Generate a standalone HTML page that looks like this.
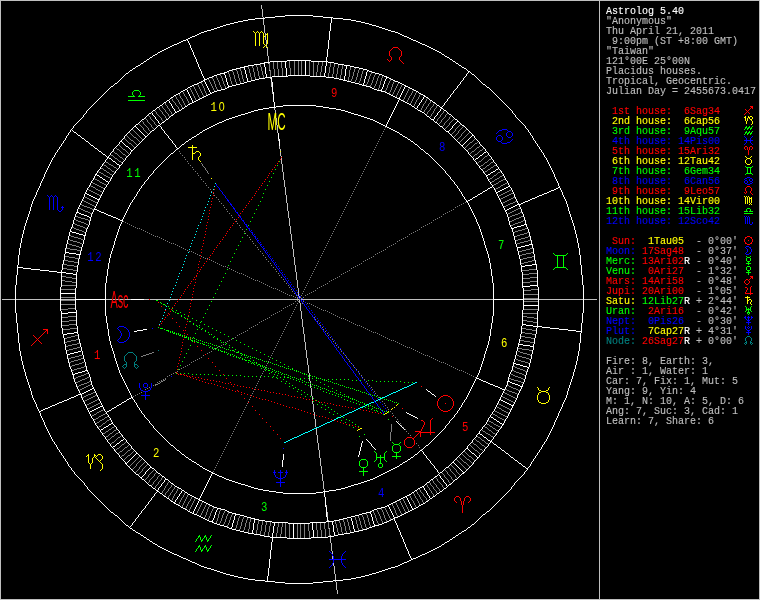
<!DOCTYPE html>
<html lang="en"><head><meta charset="utf-8"><title>Astrolog 5.40 chart</title>
<style>
html,body{margin:0;padding:0;background:#000;}
body{width:760px;height:600px;overflow:hidden;}
svg{display:block;shape-rendering:crispEdges;}
path{fill:none;stroke-width:1;}
text{font-family:"Liberation Mono",monospace;white-space:pre;}
.sb{font-size:10px;;stroke-width:0.12px;paint-order:stroke;}
.hn{font-family:"Liberation Mono",monospace;font-size:12.5px;text-anchor:middle;}
.z{font-family:"Liberation Sans",sans-serif;}
.ob{font-family:"Liberation Sans",sans-serif;font-size:23.7px;text-anchor:middle;}
.tx{will-change:transform;}
</style></head><body>
<svg width="760" height="600" viewBox="0 0 760 600" xml:space="preserve">
<rect width="760" height="600" fill="#000"/>
<g transform="translate(0,0.5)">
<path id="axes" stroke="#bfbfbf" d="M261 5h1M261 6h1M261 7h1M261 8h1M262 9h1M262 10h1M262 11h1M262 12h1M262 13h1M262 14h1M262 15h1M262 16h1M263 17h1M263 18h1M263 19h1M263 20h1M263 21h1M263 22h1M263 23h1M263 24h1M264 25h1M264 26h1M264 27h1M264 28h1M264 29h1M264 30h1M264 31h1M264 32h1M265 33h1M265 34h1M265 35h1M265 36h1M265 37h1M265 38h1M265 39h1M266 40h1M266 41h1M266 42h1M266 43h1M266 44h1M266 45h1M266 46h1M266 47h1M267 48h1M267 49h1M267 50h1M267 51h1M267 52h1M267 53h1M267 54h1M267 55h1M268 56h1M268 57h1M268 58h1M268 59h1M268 60h1M268 61h1M268 62h1M268 63h1M269 64h1M269 65h1M269 66h1M269 67h1M269 68h1M269 69h1M269 70h1M270 71h1M270 72h1M270 73h1M270 74h1M270 75h1M270 76h1M270 77h1M270 78h1M271 79h1M271 80h1M271 81h1M271 82h1M271 83h1M271 84h1M271 85h1M271 86h1M272 87h1M272 88h1M272 89h1M272 90h1M272 91h1M272 92h1M272 93h1M273 94h1M273 95h1M273 96h1M273 97h1M273 98h1M273 99h1M273 100h1M273 101h1M274 102h1M274 103h1M274 104h1M274 105h1M274 106h1M274 107h1M274 108h1M274 109h1M275 110h1M275 111h1M275 112h1M275 113h1M275 114h1M275 115h1M275 116h1M275 117h1M276 118h1M276 119h1M276 120h1M276 121h1M276 122h1M276 123h1M276 124h1M277 125h1M277 126h1M277 127h1M277 128h1M277 129h1M277 130h1M277 131h1M277 132h1M278 133h1M278 134h1M278 135h1M278 136h1M278 137h1M278 138h1M278 139h1M278 140h1M279 141h1M279 142h1M279 143h1M279 144h1M279 145h1M279 146h1M279 147h1M279 148h1M280 149h1M280 150h1M280 151h1M280 152h1M280 153h1M280 154h1M280 155h1M281 156h1M281 157h1M281 158h1M281 159h1M281 160h1M281 161h1M281 162h1M281 163h1M282 164h1M282 165h1M282 166h1M282 167h1M282 168h1M282 169h1M282 170h1M282 171h1M283 172h1M283 173h1M283 174h1M283 175h1M283 176h1M283 177h1M283 178h1M283 179h1M284 180h1M284 181h1M284 182h1M284 183h1M284 184h1M284 185h1M284 186h1M285 187h1M285 188h1M285 189h1M285 190h1M285 191h1M285 192h1M285 193h1M285 194h1M286 195h1M286 196h1M286 197h1M286 198h1M286 199h1M286 200h1M286 201h1M286 202h1M287 203h1M287 204h1M287 205h1M287 206h1M287 207h1M287 208h1M287 209h1M287 210h1M288 211h1M288 212h1M288 213h1M288 214h1M288 215h1M288 216h1M288 217h1M289 218h1M289 219h1M289 220h1M289 221h1M289 222h1M289 223h1M289 224h1M289 225h1M290 226h1M290 227h1M290 228h1M290 229h1M290 230h1M290 231h1M290 232h1M290 233h1M291 234h1M291 235h1M291 236h1M291 237h1M291 238h1M291 239h1M291 240h1M292 241h1M292 242h1M292 243h1M292 244h1M292 245h1M292 246h1M292 247h1M292 248h1M293 249h1M293 250h1M293 251h1M293 252h1M293 253h1M293 254h1M293 255h1M293 256h1M294 257h1M294 258h1M294 259h1M294 260h1M294 261h1M294 262h1M294 263h1M294 264h1M295 265h1M295 266h1M295 267h1M295 268h1M295 269h1M295 270h1M295 271h1M296 272h1M296 273h1M296 274h1M296 275h1M296 276h1M296 277h1M296 278h1M296 279h1M297 280h1M297 281h1M297 282h1M297 283h1M297 284h1M297 285h1M297 286h1M297 287h1M298 288h1M298 289h1M298 290h1M298 291h1M298 292h1M298 293h1M298 294h1M298 295h1M299 296h1M299 297h1M299 298h1M2 299h595M299 300h1M299 301h1M299 302h1M300 303h1M300 304h1M300 305h1M300 306h1M300 307h1M300 308h1M300 309h1M300 310h1M301 311h1M301 312h1M301 313h1M301 314h1M301 315h1M301 316h1M301 317h1M301 318h1M302 319h1M302 320h1M302 321h1M302 322h1M302 323h1M302 324h1M302 325h1M302 326h1M303 327h1M303 328h1M303 329h1M303 330h1M303 331h1M303 332h1M303 333h1M304 334h1M304 335h1M304 336h1M304 337h1M304 338h1M304 339h1M304 340h1M304 341h1M305 342h1M305 343h1M305 344h1M305 345h1M305 346h1M305 347h1M305 348h1M305 349h1M306 350h1M306 351h1M306 352h1M306 353h1M306 354h1M306 355h1M306 356h1M306 357h1M307 358h1M307 359h1M307 360h1M307 361h1M307 362h1M307 363h1M307 364h1M308 365h1M308 366h1M308 367h1M308 368h1M308 369h1M308 370h1M308 371h1M308 372h1M309 373h1M309 374h1M309 375h1M309 376h1M309 377h1M309 378h1M309 379h1M309 380h1M310 381h1M310 382h1M310 383h1M310 384h1M310 385h1M310 386h1M310 387h1M311 388h1M311 389h1M311 390h1M311 391h1M311 392h1M311 393h1M311 394h1M311 395h1M312 396h1M312 397h1M312 398h1M312 399h1M312 400h1M312 401h1M312 402h1M312 403h1M313 404h1M313 405h1M313 406h1M313 407h1M313 408h1M313 409h1M313 410h1M313 411h1M314 412h1M314 413h1M314 414h1M314 415h1M314 416h1M314 417h1M314 418h1M315 419h1M315 420h1M315 421h1M315 422h1M315 423h1M315 424h1M315 425h1M315 426h1M316 427h1M316 428h1M316 429h1M316 430h1M316 431h1M316 432h1M316 433h1M316 434h1M317 435h1M317 436h1M317 437h1M317 438h1M317 439h1M317 440h1M317 441h1M317 442h1M318 443h1M318 444h1M318 445h1M318 446h1M318 447h1M318 448h1M318 449h1M319 450h1M319 451h1M319 452h1M319 453h1M319 454h1M319 455h1M319 456h1M319 457h1M320 458h1M320 459h1M320 460h1M320 461h1M320 462h1M320 463h1M320 464h1M320 465h1M321 466h1M321 467h1M321 468h1M321 469h1M321 470h1M321 471h1M321 472h1M321 473h1M322 474h1M322 475h1M322 476h1M322 477h1M322 478h1M322 479h1M322 480h1M323 481h1M323 482h1M323 483h1M323 484h1M323 485h1M323 486h1M323 487h1M323 488h1M324 489h1M324 490h1M324 491h1M324 492h1M324 493h1M324 494h1M324 495h1M324 496h1M325 497h1M325 498h1M325 499h1M325 500h1M325 501h1M325 502h1M325 503h1M325 504h1M326 505h1M326 506h1M326 507h1M326 508h1M326 509h1M326 510h1M326 511h1M327 512h1M327 513h1M327 514h1M327 515h1M327 516h1M327 517h1M327 518h1M327 519h1M328 520h1M328 521h1M328 522h1M328 523h1M328 524h1M328 525h1M328 526h1M328 527h1M329 528h1M329 529h1M329 530h1M329 531h1M329 532h1M329 533h1M329 534h1M330 535h1M330 536h1M330 537h1M330 538h1M330 539h1M330 540h1M330 541h1M330 542h1M331 543h1M331 544h1M331 545h1M331 546h1M331 547h1M331 548h1M331 549h1M331 550h1M332 551h1M332 552h1M332 553h1M332 554h1M332 555h1M332 556h1M332 557h1M332 558h1M333 559h1M333 560h1M333 561h1M333 562h1M333 563h1M333 564h1M333 565h1M334 566h1M334 567h1M334 568h1M334 569h1M334 570h1M334 571h1M334 572h1M334 573h1M335 574h1M335 575h1M335 576h1M335 577h1M335 578h1M335 579h1M335 580h1M335 581h1M336 582h1M336 583h1M336 584h1M336 585h1M336 586h1M336 587h1M336 588h1M336 589h1M337 590h1M337 591h1M337 592h1M337 593h1"/>
<path id="ticks1" stroke="#7f7f7f" d="M281 61h1M289 61h1M294 61h1M298 61h1M301 61h1M309 61h1M313 61h1M318 61h1M273 62h1M277 62h1M281 62h1M289 62h1M294 62h1M298 62h1M301 62h1M309 62h1M313 62h1M318 62h1M322 62h1M269 63h1M273 63h1M277 63h1M281 63h1M289 63h1M294 63h1M298 63h1M301 63h1M309 63h1M313 63h1M318 63h1M322 63h1M330 63h1M334 63h1M256 64h1M260 64h1M269 64h1M273 64h1M277 64h1M281 64h1M289 64h1M294 64h1M298 64h1M301 64h1M309 64h1M313 64h1M318 64h1M322 64h1M330 64h1M334 64h1M338 64h1M252 65h1M256 65h1M260 65h1M269 65h1M273 65h1M277 65h1M281 65h1M289 65h1M294 65h1M298 65h1M301 65h1M309 65h1M313 65h1M317 65h1M322 65h1M330 65h1M334 65h1M338 65h1M342 65h1M248 66h1M252 66h1M256 66h1M260 66h1M269 66h1M273 66h1M277 66h1M281 66h1M289 66h1M294 66h1M298 66h1M301 66h1M309 66h1M313 66h1M317 66h1M321 66h1M330 66h1M334 66h1M338 66h1M342 66h1M350 66h1M248 67h1M252 67h1M257 67h1M261 67h1M269 67h1M273 67h1M277 67h1M281 67h1M289 67h1M294 67h1M298 67h1M301 67h1M309 67h1M313 67h1M317 67h1M321 67h1M329 67h1M333 67h1M338 67h1M342 67h1M350 67h1M355 67h1M240 68h1M248 68h1M253 68h1M257 68h1M261 68h1M269 68h1M273 68h1M277 68h1M282 68h1M290 68h1M294 68h1M298 68h1M301 68h1M309 68h1M313 68h1M317 68h1M321 68h1M329 68h1M333 68h1M337 68h1M342 68h1M350 68h1M355 68h1M359 68h1M236 69h1M240 69h1M249 69h1M253 69h1M257 69h1M261 69h1M269 69h1M274 69h1M278 69h1M282 69h1M290 69h1M294 69h1M298 69h1M301 69h1M309 69h1M313 69h1M317 69h1M321 69h1M329 69h1M333 69h1M337 69h1M341 69h1M350 69h1M354 69h1M359 69h1M363 69h1M232 70h1M236 70h1M240 70h1M249 70h1M253 70h1M257 70h1M261 70h1M270 70h1M274 70h1M278 70h1M282 70h1M290 70h1M294 70h1M298 70h1M301 70h1M309 70h1M313 70h1M317 70h1M321 70h1M329 70h1M333 70h1M337 70h1M341 70h1M349 70h1M354 70h1M358 70h1M363 70h1M232 71h1M237 71h1M241 71h1M249 71h1M253 71h1M258 71h1M262 71h1M270 71h1M274 71h1M278 71h1M282 71h1M290 71h1M294 71h1M298 71h1M301 71h1M309 71h1M313 71h1M317 71h1M321 71h1M329 71h1M333 71h1M337 71h1M341 71h1M349 71h1M354 71h1M358 71h1M362 71h1M228 72h1M233 72h1M237 72h1M241 72h1M249 72h1M254 72h1M258 72h1M262 72h1M270 72h1M274 72h1M278 72h1M282 72h1M290 72h1M294 72h1M298 72h1M301 72h1M309 72h1M313 72h1M316 72h1M320 72h1M329 72h1M333 72h1M337 72h1M341 72h1M349 72h1M353 72h1M358 72h1M362 72h1M371 72h1M228 73h1M233 73h1M237 73h1M241 73h1M250 73h1M254 73h1M258 73h1M262 73h1M270 73h1M274 73h1M278 73h1M282 73h1M290 73h1M294 73h1M298 73h1M301 73h1M309 73h1M313 73h1M316 73h1M320 73h1M328 73h1M333 73h1M337 73h1M341 73h1M349 73h1M353 73h1M357 73h1M362 73h1M371 73h1M375 73h1M220 74h1M229 74h1M233 74h1M238 74h1M241 74h1M250 74h1M254 74h1M258 74h1M262 74h1M270 74h1M274 74h1M278 74h1M282 74h1M290 74h1M294 74h1M298 74h1M301 74h1M309 74h1M313 74h1M316 74h1M320 74h1M328 74h1M332 74h1M336 74h1M341 74h1M349 74h1M353 74h1M357 74h1M361 74h1M370 74h1M375 74h1M379 74h1M220 75h1M229 75h1M234 75h1M238 75h1M242 75h1M250 75h1M254 75h1M258 75h1M263 75h1M270 75h1M274 75h1M278 75h1M282 75h1M313 75h1M316 75h1M320 75h1M328 75h1M332 75h1M336 75h1M340 75h1M349 75h1M353 75h1M357 75h1M361 75h1M370 75h1M374 75h1M379 75h1M216 76h1M221 76h1M229 76h1M234 76h1M238 76h1M242 76h1M250 76h1M254 76h1M259 76h1M263 76h1M270 76h1M274 76h1M328 76h1M332 76h1M336 76h1M340 76h1M349 76h1M352 76h1M357 76h1M361 76h1M369 76h1M374 76h1M378 76h1M382 76h1M212 77h1M216 77h1M221 77h1M230 77h1M234 77h1M238 77h1M242 77h1M251 77h1M255 77h1M259 77h1M263 77h1M332 77h1M336 77h1M340 77h1M348 77h1M352 77h1M356 77h1M361 77h1M369 77h1M373 77h1M378 77h1M382 77h1M212 78h1M217 78h1M222 78h1M230 78h1M234 78h1M239 78h1M242 78h1M251 78h1M255 78h1M259 78h1M340 78h1M348 78h1M352 78h1M356 78h1M360 78h1M369 78h1M373 78h1M377 78h1M381 78h1M208 79h1M213 79h1M217 79h1M222 79h1M230 79h1M235 79h1M239 79h1M243 79h1M251 79h1M255 79h1M348 79h1M351 79h1M356 79h1M360 79h1M368 79h1M373 79h1M377 79h1M381 79h1M390 79h1M209 80h1M213 80h1M218 80h1M222 80h1M230 80h1M235 80h1M239 80h1M243 80h1M348 80h1M351 80h1M355 80h1M360 80h1M368 80h1M372 80h1M377 80h1M381 80h1M390 80h1M394 80h1M209 81h1M214 81h1M218 81h1M223 81h1M231 81h1M235 81h1M240 81h1M243 81h1M355 81h1M359 81h1M368 81h1M372 81h1M376 81h1M380 81h1M389 81h1M394 81h1M201 82h1M210 82h1M214 82h1M219 82h1M223 82h1M231 82h1M236 82h1M240 82h1M359 82h1M367 82h1M372 82h1M376 82h1M380 82h1M389 82h1M393 82h1M398 82h1M201 83h1M210 83h1M214 83h1M219 83h1M223 83h1M231 83h1M236 83h1M367 83h1M371 83h1M376 83h1M380 83h1M388 83h1M393 83h1M398 83h1M197 84h1M202 84h1M211 84h1M215 84h1M219 84h1M224 84h1M232 84h1M366 84h1M371 84h1M375 84h1M380 84h1M388 84h1M392 84h1M397 84h1M402 84h1M198 85h1M202 85h1M211 85h1M215 85h1M220 85h1M224 85h1M232 85h1M366 85h1M370 85h1M375 85h1M379 85h1M387 85h1M392 85h1M397 85h1M401 85h1M193 86h1M198 86h1M203 86h1M212 86h1M215 86h1M220 86h1M225 86h1M370 86h1M374 86h1M379 86h1M387 86h1M392 86h1M396 86h1M401 86h1M189 87h1M194 87h1M199 87h1M203 87h1M212 87h1M216 87h1M221 87h1M225 87h1M374 87h1M379 87h1M387 87h1M391 87h1M396 87h1M400 87h1M190 88h1M194 88h1M199 88h1M204 88h1M213 88h1M216 88h1M221 88h1M378 88h1M386 88h1M391 88h1M395 88h1M400 88h1M409 88h1M190 89h1M195 89h1M200 89h1M204 89h1M213 89h1M217 89h1M378 89h1M386 89h1M391 89h1M395 89h1M399 89h1M408 89h1M191 90h1M195 90h1M200 90h1M204 90h1M214 90h1M217 90h1M385 90h1M390 90h1M394 90h1M399 90h1M408 90h1M413 90h1M182 91h1M191 91h1M196 91h1M201 91h1M205 91h1M214 91h1M385 91h1M390 91h1M394 91h1M398 91h1M407 91h1M412 91h1M183 92h1M192 92h1M196 92h1M201 92h1M205 92h1M389 92h1M393 92h1M398 92h1M407 92h1M412 92h1M416 92h1M178 93h1M183 93h1M192 93h1M197 93h1M202 93h1M206 93h1M389 93h1M393 93h1M397 93h1M406 93h1M411 93h1M415 93h1M179 94h1M184 94h1M193 94h1M197 94h1M202 94h1M206 94h1M392 94h1M397 94h1M406 94h1M411 94h1M415 94h1M420 94h1M179 95h1M184 95h1M193 95h1M198 95h1M203 95h1M392 95h1M396 95h1M405 95h1M410 95h1M414 95h1M419 95h1M175 96h1M180 96h1M185 96h1M194 96h1M198 96h1M203 96h1M396 96h1M405 96h1M409 96h1M414 96h1M419 96h1M176 97h1M180 97h1M186 97h1M194 97h1M199 97h1M404 97h1M409 97h1M413 97h1M418 97h1M171 98h1M176 98h1M181 98h1M186 98h1M195 98h1M199 98h1M404 98h1M408 98h1M413 98h1M418 98h1M427 98h1M172 99h1M177 99h1M182 99h1M187 99h1M195 99h1M403 99h1M408 99h1M412 99h1M417 99h1M426 99h1M172 100h1M178 100h1M182 100h1M187 100h1M196 100h1M403 100h1M407 100h1M412 100h1M416 100h1M426 100h1M431 100h1M173 101h1M178 101h1M183 101h1M188 101h1M407 101h1M411 101h1M416 101h1M425 101h1M430 101h1M164 102h1M174 102h1M179 102h1M183 102h1M188 102h1M406 102h1M411 102h1M415 102h1M425 102h1M430 102h1M165 103h1M175 103h1M179 103h1M184 103h1M189 103h1M410 103h1M415 103h1M424 103h1M429 103h1M434 103h1M165 104h1M175 104h1M180 104h1M184 104h1M410 104h1M414 104h1M423 104h1M428 104h1M433 104h1M161 105h1M166 105h1M176 105h1M181 105h1M185 105h1M414 105h1M423 105h1M428 105h1M433 105h1M437 105h1M162 106h1M167 106h1M177 106h1M181 106h1M413 106h1M422 106h1M427 106h1M432 106h1M436 106h1M158 107h1M162 107h1M167 107h1M178 107h1M182 107h1M422 107h1M426 107h1M431 107h1M436 107h1M159 108h1M163 108h1M168 108h1M178 108h1M421 108h1M426 108h1M430 108h1M435 108h1M159 109h1M164 109h1M169 109h1M179 109h1M421 109h1M425 109h1M430 109h1M434 109h1M154 110h1M160 110h1M165 110h1M169 110h1M420 110h1M424 110h1M429 110h1M434 110h1M444 110h1M155 111h1M161 111h1M165 111h1M170 111h1M424 111h1M428 111h1M433 111h1M443 111h1M156 112h1M162 112h1M166 112h1M171 112h1M423 112h1M427 112h1M433 112h1M443 112h1M156 113h1M162 113h1M167 113h1M171 113h1M427 113h1M432 113h1M442 113h1M447 113h1M157 114h1M163 114h1M168 114h1M172 114h1M426 114h1M431 114h1M441 114h1M446 114h1M148 115h1M158 115h1M164 115h1M168 115h1M431 115h1M440 115h1M445 115h1M451 115h1M149 116h1M159 116h1M165 116h1M169 116h1M430 116h1M440 116h1M445 116h1M450 116h1M150 117h1M160 117h1M165 117h1M439 117h1M444 117h1M449 117h1M145 118h1M150 118h1M161 118h1M166 118h1M438 118h1M443 118h1M449 118h1M454 118h1M146 119h1M151 119h1M161 119h1M437 119h1M442 119h1M448 119h1M453 119h1M141 120h1M147 120h1M152 120h1M162 120h1M437 120h1M441 120h1M447 120h1M452 120h1M142 121h1M147 121h1M153 121h1M163 121h1M436 121h1M441 121h1M446 121h1M451 121h1M143 122h1M148 122h1M154 122h1M440 122h1M445 122h1M450 122h1M138 123h1M143 123h1M149 123h1M154 123h1M439 123h1M444 123h1M449 123h1M139 124h1M144 124h1M150 124h1M155 124h1M444 124h1M449 124h1M460 124h1M140 125h1M145 125h1M151 125h1M156 125h1M443 125h1M448 125h1M459 125h1M141 126h1M146 126h1M151 126h1M442 126h1M447 126h1M458 126h1M463 126h1M142 127h1M147 127h1M152 127h1M446 127h1M457 127h1M462 127h1M143 128h1M148 128h1M153 128h1M445 128h1M456 128h1M461 128h1M132 129h1M143 129h1M148 129h1M455 129h1M460 129h1M466 129h1M133 130h1M144 130h1M149 130h1M455 130h1M459 130h1M465 130h1M134 131h1M145 131h1M150 131h1M454 131h1M458 131h1M464 131h1M129 132h1M135 132h1M146 132h1M453 132h1M458 132h1M463 132h1M469 132h1M130 133h1M136 133h1M147 133h1M452 133h1M457 133h1M462 133h1M468 133h1M131 134h1M137 134h1M451 134h1M456 134h1M461 134h1M467 134h1M126 135h1M132 135h1M138 135h1M455 135h1M461 135h1M466 135h1M127 136h1M133 136h1M139 136h1M454 136h1M460 136h1M465 136h1M128 137h1M134 137h2M140 137h1M459 137h1M464 137h1M124 138h1M129 138h1M136 138h1M141 138h1M458 138h1M463 138h1M475 138h1M125 139h1M130 139h1M137 139h1M142 139h1M457 139h1M462 139h1M474 139h1M126 140h1M131 140h2M138 140h1M461 140h1M473 140h1M127 141h1M133 141h1M139 141h1M460 141h1M472 141h1M478 141h1M128 142h1M134 142h1M459 142h1M470 142h2M477 142h1M129 143h2M135 143h1M469 143h1M475 143h2M118 144h1M131 144h1M136 144h1M468 144h1M474 144h1M119 145h1M132 145h1M467 145h1M473 145h1M480 145h1M120 146h1M133 146h1M466 146h1M472 146h1M479 146h1M115 147h1M121 147h1M134 147h1M465 147h1M471 147h1M477 147h2M116 148h1M122 148h1M469 148h2M476 148h1M483 148h1M117 149h2M123 149h2M468 149h1M475 149h1M482 149h1M119 150h1M125 150h1M467 150h1M474 150h1M480 150h2M113 151h1M120 151h1M126 151h1M472 151h2M479 151h1M114 152h1M121 152h1M127 152h1M471 152h1M478 152h1M115 153h2M122 153h1M128 153h1M470 153h1M477 153h1M110 154h1M117 154h1M123 154h2M475 154h2M488 154h1M111 155h2M118 155h1M125 155h1M474 155h1M487 155h1M113 156h1M119 156h1M126 156h1M473 156h1M485 156h2M114 157h1M120 157h2M484 157h1M115 158h2M122 158h1M483 158h1M491 158h1M117 159h1M123 159h1M482 159h1M489 159h2M118 160h1M481 160h1M488 160h1M105 161h1M119 161h2M479 161h2M487 161h1M493 161h1M106 162h2M121 162h1M478 162h1M485 162h2M491 162h2M108 163h1M477 163h1M484 163h1M490 163h1M103 164h1M109 164h2M483 164h1M489 164h1M496 164h1M104 165h2M111 165h2M481 165h2M487 165h2M494 165h2M106 166h1M113 166h1M480 166h1M486 166h1M493 166h1M100 167h1M107 167h1M114 167h2M485 167h1M491 167h2M101 168h2M108 168h2M116 168h1M483 168h2M490 168h1M103 169h1M110 169h1M482 169h1M488 169h2M104 170h2M111 170h1M487 170h1M98 171h1M106 171h1M112 171h2M485 171h2M500 171h1M99 172h2M107 172h2M114 172h1M484 172h1M498 172h2M101 173h2M109 173h1M497 173h1M103 174h1M110 174h2M496 174h1M104 175h2M112 175h1M494 175h2M502 175h1M106 176h2M493 176h1M500 176h2M108 177h2M492 177h1M499 177h1M94 178h1M110 178h1M490 178h2M497 178h2M505 178h1M95 179h2M489 179h1M495 179h2M503 179h2M97 180h2M494 180h1M501 180h2M99 181h1M492 181h2M499 181h2M92 182h1M100 182h2M491 182h1M498 182h1M507 182h1M93 183h2M102 183h2M496 183h2M505 183h2M95 184h2M104 184h2M494 184h2M503 184h2M90 185h1M97 185h2M106 185h1M493 185h1M501 185h2M91 186h2M99 186h2M500 186h1M93 187h2M101 187h2M498 187h2M95 188h1M103 188h2M496 188h2M88 189h1M96 189h2M495 189h1M511 189h1M89 190h2M98 190h2M509 190h2M91 191h2M100 191h2M507 191h2M93 192h2M102 192h1M505 192h2M95 193h2M503 193h2M511 193h2M97 194h2M501 194h2M509 194h2M99 195h2M499 195h2M507 195h2M84 196h1M498 196h1M505 196h2M85 197h2M503 197h2M513 197h2M87 198h2M501 198h2M511 198h2M89 199h2M500 199h1M509 199h2M82 200h2M91 200h2M507 200h2M84 201h2M93 201h2M505 201h2M515 201h2M86 202h2M95 202h2M503 202h2M513 202h2M88 203h2M502 203h1M510 203h3M80 204h2M90 204h2M508 204h2M82 205h2M92 205h2M506 205h2M84 206h3M94 206h2M504 206h2M87 207h3M79 208h2M90 208h2M518 208h2M81 209h2M92 209h2M516 209h2M83 210h2M514 210h2M85 211h3M512 211h2M88 212h2M510 212h2M520 212h2M90 213h2M508 213h2M518 213h2M507 214h1M515 214h3M512 215h3M76 216h2M510 216h2M521 216h2M78 217h3M508 217h2M519 217h2M81 218h4M516 218h3M74 219h2M85 219h3M514 219h2M76 220h2M88 220h2M512 220h2M523 220h2M78 221h3M510 221h2M521 221h2M81 222h3M518 222h3M73 223h2M84 223h2M515 223h3M75 224h2M86 224h2M513 224h2M77 225h3M511 225h2M80 226h3M72 227h2M83 227h2M74 228h2M85 228h2M525 228h2M76 229h3M522 229h3M79 230h3M518 230h4M82 231h2M515 231h3M84 232h2M513 232h2M527 232h2M524 233h3M520 234h4M69 235h2M517 235h3M71 236h3M515 236h2M528 236h2M74 237h4M525 237h3M78 238h3M521 238h4M68 239h2M81 239h2M518 239h3M70 240h3M516 240h2M528 240h3M73 241h4M524 241h4M77 242h3M520 242h4M67 243h2M80 243h2M517 243h3M69 244h3M72 245h4M76 246h3M79 247h2M66 248h4M530 248h3M70 249h7M526 249h4M77 250h4M522 250h4M519 251h3M531 252h3M526 253h5M522 254h4M519 255h3M65 256h4M532 256h3M69 257h6M527 257h5M75 258h4M523 258h4M520 259h3M64 260h4M532 260h3M68 261h6M528 261h4M74 262h4M524 262h4M521 263h3M63 264h4M67 265h7M74 266h4M63 268h4M67 269h6M529 269h7M73 270h4M522 270h7M529 273h8M522 274h7M62 276h4M66 277h6M530 277h7M72 278h4M523 278h7M61 280h4M65 281h7M530 281h8M72 282h4M523 282h7M61 285h15M61 289h14M531 289h7M524 290h7M524 294h14M61 297h14M524 298h14M61 300h14M524 301h14M61 304h14M68 308h7M61 309h7M524 309h14M523 313h15M68 316h8M523 316h4M61 317h7M527 317h7M534 318h4M69 320h7M523 320h4M62 321h7M527 321h6M533 322h4M69 324h8M62 325h7M70 328h7M522 328h4M63 329h7M526 329h6M532 330h4M521 332h4M525 333h7M532 334h4M75 335h3M71 336h4M521 336h4M67 337h4M525 337h6M64 338h3M531 338h4M76 339h3M71 340h5M520 340h4M67 341h4M524 341h6M64 342h3M530 342h4M77 343h3M72 344h5M68 345h4M65 346h3M77 347h3M73 348h4M518 348h4M69 349h4M522 349h7M66 350h3M529 350h4M518 351h2M520 352h3M523 353h4M527 354h3M79 355h3M517 355h2M530 355h2M75 356h4M519 356h3M71 357h4M522 357h4M68 358h3M81 358h2M526 358h3M78 359h3M516 359h2M529 359h2M74 360h4M518 360h3M71 361h3M521 361h4M69 362h2M82 362h2M525 362h3M79 363h3M528 363h2M75 364h4M72 365h3M70 366h2M84 366h2M513 366h2M81 367h3M515 367h2M77 368h4M517 368h3M74 369h3M520 369h3M72 370h2M512 370h2M523 370h2M514 371h2M525 371h2M516 372h3M86 373h2M519 373h3M84 374h2M511 374h2M522 374h2M81 375h3M513 375h2M524 375h2M78 376h3M515 376h3M76 377h2M87 377h2M518 377h3M74 378h2M85 378h2M509 378h2M521 378h2M82 379h3M511 379h3M523 379h2M80 380h2M514 380h4M78 381h2M89 381h2M518 381h3M76 382h2M87 382h2M521 382h2M84 383h3M81 384h3M90 384h2M79 385h2M88 385h2M507 385h2M77 386h2M86 386h2M509 386h2M84 387h2M511 387h2M82 388h2M513 388h3M80 389h2M505 389h2M516 389h2M79 390h1M507 390h2M518 390h2M509 391h3M93 392h2M503 392h2M512 392h3M91 393h2M505 393h2M515 393h2M88 394h3M507 394h2M517 394h2M86 395h2M95 395h2M509 395h2M84 396h2M93 396h2M502 396h1M511 396h2M82 397h2M91 397h2M503 397h2M513 397h2M89 398h2M505 398h2M515 398h2M87 399h2M97 399h2M507 399h2M85 400h2M95 400h2M509 400h2M84 401h1M93 401h2M511 401h2M91 402h2M100 402h1M513 402h2M89 403h2M98 403h2M498 403h1M87 404h2M96 404h2M499 404h2M86 405h1M94 405h2M501 405h2M92 406h2M496 406h1M503 406h2M90 407h2M497 407h2M505 407h2M88 408h2M499 408h2M507 408h2M87 409h1M103 409h1M501 409h1M509 409h2M101 410h2M494 410h1M502 410h2M99 411h2M495 411h2M504 411h2M97 412h2M497 412h2M506 412h2M96 413h1M105 413h1M492 413h1M499 413h2M508 413h1M94 414h2M103 414h2M493 414h2M501 414h2M92 415h2M101 415h2M495 415h2M503 415h2M91 416h1M99 416h2M107 416h1M497 416h1M505 416h2M98 417h1M105 417h2M498 417h2M96 418h2M104 418h1M500 418h2M94 419h2M102 419h2M109 419h1M502 419h2M93 420h1M100 420h2M107 420h2M488 420h1M504 420h1M99 421h1M106 421h1M489 421h2M97 422h2M105 422h1M491 422h2M96 423h1M103 423h2M486 423h1M493 423h1M102 424h1M487 424h2M494 424h2M101 425h1M489 425h1M496 425h2M99 426h2M114 426h1M484 426h1M490 426h2M498 426h2M98 427h1M112 427h2M485 427h2M492 427h1M500 427h1M111 428h1M487 428h1M493 428h2M109 429h2M116 429h1M488 429h1M495 429h1M108 430h1M114 430h2M482 430h1M489 430h2M496 430h2M106 431h2M113 431h1M483 431h2M491 431h1M498 431h1M105 432h1M112 432h1M118 432h1M485 432h1M492 432h1M103 433h2M110 433h2M116 433h2M486 433h2M493 433h2M102 434h1M109 434h1M115 434h1M488 434h2M495 434h1M108 435h1M114 435h1M121 435h1M490 435h1M106 436h2M112 436h2M120 436h1M477 436h1M491 436h2M105 437h1M111 437h1M118 437h2M478 437h2M493 437h1M110 438h1M117 438h1M480 438h1M108 439h2M116 439h1M475 439h1M481 439h1M107 440h1M115 440h1M476 440h1M482 440h2M114 441h1M477 441h2M484 441h1M112 442h2M125 442h1M472 442h1M479 442h1M485 442h1M111 443h1M124 443h1M473 443h1M480 443h1M486 443h2M110 444h1M122 444h2M474 444h2M481 444h1M488 444h1M121 445h1M128 445h1M470 445h1M476 445h1M482 445h2M120 446h1M127 446h1M471 446h1M477 446h1M484 446h1M119 447h1M125 447h2M472 447h1M478 447h1M485 447h1M117 448h2M124 448h1M131 448h1M473 448h1M479 448h1M116 449h1M123 449h1M130 449h1M474 449h1M480 449h2M115 450h1M122 450h1M128 450h2M475 450h2M482 450h1M120 451h2M127 451h1M133 451h1M464 451h1M477 451h1M483 451h1M119 452h1M126 452h1M132 452h1M465 452h1M478 452h1M118 453h1M125 453h1M131 453h1M466 453h1M479 453h1M124 454h1M130 454h1M462 454h1M467 454h1M480 454h1M122 455h2M128 455h2M463 455h1M468 455h1M121 456h1M127 456h1M139 456h1M464 456h1M469 456h2M120 457h1M126 457h1M138 457h1M459 457h1M465 457h1M471 457h1M125 458h1M137 458h1M460 458h1M466 458h1M472 458h1M124 459h1M136 459h1M141 459h1M456 459h1M461 459h1M467 459h2M473 459h1M123 460h1M135 460h1M140 460h1M457 460h1M462 460h1M469 460h1M474 460h1M134 461h1M139 461h1M458 461h1M463 461h1M470 461h1M133 462h1M138 462h1M144 462h1M459 462h1M464 462h2M471 462h1M132 463h1M137 463h1M143 463h1M460 463h1M466 463h1M472 463h1M131 464h1M136 464h1M142 464h1M147 464h1M461 464h1M467 464h1M130 465h1M136 465h1M141 465h1M146 465h1M451 465h1M462 465h1M468 465h1M129 466h1M135 466h1M140 466h1M145 466h1M452 466h1M463 466h1M469 466h1M134 467h1M139 467h1M144 467h1M448 467h1M453 467h1M464 467h1M133 468h1M139 468h1M143 468h1M449 468h1M454 468h1M465 468h1M132 469h1M138 469h1M142 469h1M450 469h1M455 469h1M466 469h1M137 470h1M142 470h1M153 470h1M445 470h1M450 470h1M456 470h1M136 471h1M141 471h1M152 471h1M446 471h1M451 471h1M456 471h1M135 472h1M140 472h1M151 472h1M156 472h1M447 472h1M452 472h1M457 472h1M139 473h1M150 473h1M155 473h1M442 473h1M447 473h1M453 473h1M458 473h1M138 474h1M149 474h1M154 474h1M443 474h1M448 474h1M454 474h1M459 474h1M148 475h1M154 475h1M159 475h1M444 475h1M449 475h1M455 475h1M460 475h1M148 476h1M153 476h1M158 476h1M444 476h1M450 476h1M455 476h1M147 477h1M152 477h1M157 477h1M162 477h1M435 477h1M445 477h1M451 477h1M456 477h1M146 478h1M151 478h1M157 478h1M161 478h1M436 478h1M446 478h1M451 478h1M457 478h1M145 479h1M150 479h1M156 479h1M161 479h1M437 479h1M447 479h1M452 479h1M144 480h1M149 480h1M155 480h1M160 480h1M432 480h1M437 480h1M448 480h1M453 480h1M149 481h1M154 481h1M159 481h1M433 481h1M438 481h1M448 481h1M148 482h1M153 482h1M158 482h1M168 482h1M429 482h1M433 482h1M439 482h1M449 482h1M147 483h1M153 483h1M158 483h1M167 483h1M430 483h1M434 483h1M440 483h1M450 483h1M152 484h1M157 484h1M167 484h1M172 484h1M426 484h1M430 484h1M435 484h1M441 484h1M151 485h1M156 485h1M166 485h1M171 485h1M427 485h1M431 485h1M436 485h1M442 485h1M155 486h1M165 486h1M171 486h1M175 486h1M427 486h1M432 486h1M436 486h1M442 486h1M155 487h1M165 487h1M170 487h1M174 487h1M428 487h1M433 487h1M437 487h1M443 487h1M154 488h1M164 488h1M169 488h1M174 488h1M178 488h1M429 488h1M433 488h1M438 488h1M444 488h1M164 489h1M168 489h1M173 489h1M177 489h1M419 489h1M429 489h1M434 489h1M439 489h1M163 490h1M168 490h1M172 490h1M177 490h1M420 490h1M430 490h1M435 490h1M439 490h1M162 491h1M167 491h1M172 491h1M176 491h1M416 491h1M420 491h1M431 491h1M436 491h1M440 491h1M162 492h1M166 492h1M171 492h1M176 492h1M185 492h1M417 492h1M421 492h1M431 492h1M436 492h1M161 493h1M165 493h1M170 493h1M175 493h1M184 493h1M413 493h1M417 493h1M422 493h1M432 493h1M437 493h1M165 494h1M170 494h1M174 494h1M184 494h1M188 494h1M414 494h1M418 494h1M423 494h1M433 494h1M164 495h1M169 495h1M174 495h1M183 495h1M187 495h1M409 495h1M414 495h1M419 495h1M423 495h1M433 495h1M168 496h1M173 496h1M183 496h1M187 496h1M192 496h1M410 496h1M415 496h1M419 496h1M424 496h1M434 496h1M168 497h1M173 497h1M182 497h1M186 497h1M191 497h1M410 497h1M415 497h1M420 497h1M425 497h1M167 498h1M172 498h1M181 498h1M186 498h1M191 498h1M195 498h1M402 498h1M411 498h1M416 498h1M420 498h1M426 498h1M172 499h1M181 499h1M185 499h1M190 499h1M194 499h1M403 499h1M411 499h1M417 499h1M421 499h1M426 499h1M171 500h1M180 500h1M185 500h1M190 500h1M194 500h1M399 500h1M403 500h1M412 500h1M417 500h1M422 500h1M427 500h1M180 501h1M184 501h1M189 501h1M193 501h1M400 501h1M404 501h1M413 501h1M418 501h1M422 501h1M179 502h1M184 502h1M188 502h1M193 502h1M202 502h1M395 502h1M400 502h1M404 502h1M413 502h1M418 502h1M423 502h1M179 503h1M183 503h1M188 503h1M192 503h1M201 503h1M206 503h1M396 503h1M401 503h1M405 503h1M414 503h1M419 503h1M178 504h1M183 504h1M187 504h1M192 504h1M201 504h1M206 504h1M392 504h1M396 504h1M401 504h1M405 504h1M414 504h1M419 504h1M182 505h1M187 505h1M191 505h1M200 505h1M205 505h1M209 505h1M392 505h1M397 505h1M402 505h1M406 505h1M415 505h1M420 505h1M182 506h1M186 506h1M191 506h1M200 506h1M205 506h1M209 506h1M393 506h1M397 506h1M402 506h1M406 506h1M415 506h1M186 507h1M190 507h1M199 507h1M204 507h1M208 507h1M213 507h1M384 507h1M393 507h1M398 507h1M403 507h1M407 507h1M416 507h1M185 508h1M190 508h1M199 508h1M204 508h1M208 508h1M213 508h1M381 508h1M385 508h1M394 508h1M398 508h1M403 508h1M407 508h1M189 509h1M198 509h1M203 509h1M207 509h1M212 509h1M220 509h1M381 509h1M385 509h1M394 509h1M399 509h1M404 509h1M408 509h1M189 510h1M198 510h1M203 510h1M207 510h1M212 510h1M220 510h1M377 510h1M382 510h1M386 510h1M395 510h1M399 510h1M404 510h1M408 510h1M197 511h1M202 511h1M207 511h1M211 511h1M219 511h1M224 511h1M373 511h1M377 511h1M382 511h1M386 511h1M395 511h1M400 511h1M405 511h1M409 511h1M197 512h1M202 512h1M206 512h1M211 512h1M219 512h1M224 512h1M228 512h1M373 512h1M378 512h1M383 512h1M387 512h1M395 512h1M400 512h1M405 512h1M196 513h1M201 513h1M206 513h1M210 513h1M219 513h1M223 513h1M228 513h1M232 513h1M366 513h1M374 513h1M378 513h1M383 513h1M387 513h1M396 513h1M401 513h1M196 514h1M201 514h1M206 514h1M210 514h1M218 514h1M223 514h1M227 514h1M232 514h1M366 514h1M374 514h1M379 514h1M383 514h1M388 514h1M396 514h1M401 514h1M200 515h1M205 515h1M210 515h1M218 515h1M222 515h1M227 515h1M231 515h1M362 515h1M367 515h1M375 515h1M379 515h1M384 515h1M388 515h1M397 515h1M200 516h1M205 516h1M209 516h1M218 516h1M222 516h1M226 516h1M231 516h1M239 516h1M358 516h1M362 516h1M367 516h1M375 516h1M380 516h1M384 516h1M389 516h1M397 516h1M204 517h1M209 517h1M218 517h1M222 517h1M226 517h1M230 517h1M239 517h1M243 517h1M355 517h1M358 517h1M363 517h1M367 517h1M375 517h1M380 517h1M384 517h1M389 517h1M204 518h1M208 518h1M217 518h1M221 518h1M226 518h1M230 518h1M238 518h1M243 518h1M247 518h1M250 518h1M355 518h1M359 518h1M363 518h1M368 518h1M376 518h1M380 518h1M385 518h1M390 518h1M208 519h1M217 519h1M221 519h1M225 519h1M230 519h1M238 519h1M242 519h1M247 519h1M250 519h1M343 519h1M347 519h1M355 519h1M359 519h1M363 519h1M368 519h1M376 519h1M381 519h1M385 519h1M390 519h1M217 520h1M221 520h1M225 520h1M229 520h1M238 520h1M242 520h1M246 520h1M250 520h1M258 520h1M339 520h1M343 520h1M347 520h1M356 520h1M359 520h1M364 520h1M368 520h1M376 520h1M381 520h1M386 520h1M216 521h1M220 521h1M225 521h1M229 521h1M237 521h1M242 521h1M246 521h1M250 521h1M258 521h1M262 521h1M266 521h1M335 521h1M339 521h1M343 521h1M347 521h1M356 521h1M360 521h1M364 521h1M368 521h1M377 521h1M382 521h1M386 521h1M216 522h1M220 522h1M224 522h1M229 522h1M237 522h1M241 522h1M246 522h1M249 522h1M258 522h1M262 522h1M266 522h1M270 522h1M324 522h1M328 522h1M335 522h1M339 522h1M344 522h1M348 522h1M356 522h1M360 522h1M364 522h1M369 522h1M377 522h1M382 522h1M219 523h1M224 523h1M228 523h1M237 523h1M241 523h1M245 523h1M249 523h1M258 523h1M262 523h1M266 523h1M270 523h1M278 523h1M282 523h1M285 523h1M316 523h1M320 523h1M324 523h1M328 523h1M335 523h1M340 523h1M344 523h1M348 523h1M356 523h1M360 523h1M364 523h1M369 523h1M378 523h1M219 524h1M223 524h1M228 524h1M237 524h1M241 524h1M245 524h1M249 524h1M257 524h1M262 524h1M266 524h1M270 524h1M278 524h1M282 524h1M285 524h1M289 524h1M297 524h1M300 524h1M304 524h1M308 524h1M316 524h1M320 524h1M324 524h1M328 524h1M336 524h1M340 524h1M344 524h1M348 524h1M357 524h1M360 524h1M365 524h1M369 524h1M378 524h1M223 525h1M227 525h1M236 525h1M241 525h1M245 525h1M249 525h1M257 525h1M261 525h1M265 525h1M270 525h1M278 525h1M282 525h1M285 525h1M289 525h1M297 525h1M300 525h1M304 525h1M308 525h1M316 525h1M320 525h1M324 525h1M328 525h1M336 525h1M340 525h1M344 525h1M348 525h1M357 525h1M361 525h1M365 525h1M370 525h1M227 526h1M236 526h1M240 526h1M245 526h1M249 526h1M257 526h1M261 526h1M265 526h1M269 526h1M278 526h1M282 526h1M285 526h1M289 526h1M297 526h1M300 526h1M304 526h1M308 526h1M316 526h1M320 526h1M324 526h1M328 526h1M336 526h1M340 526h1M345 526h1M349 526h1M357 526h1M361 526h1M365 526h1M370 526h1M236 527h1M240 527h1M244 527h1M249 527h1M257 527h1M261 527h1M265 527h1M269 527h1M277 527h1M281 527h1M285 527h1M289 527h1M297 527h1M300 527h1M304 527h1M308 527h1M316 527h1M320 527h1M324 527h1M328 527h1M336 527h1M341 527h1M345 527h1M349 527h1M357 527h1M361 527h1M366 527h1M235 528h1M240 528h1M244 528h1M249 528h1M257 528h1M261 528h1M265 528h1M269 528h1M277 528h1M281 528h1M285 528h1M289 528h1M297 528h1M300 528h1M304 528h1M308 528h1M316 528h1M320 528h1M324 528h1M328 528h1M337 528h1M341 528h1M345 528h1M349 528h1M358 528h1M362 528h1M366 528h1M235 529h1M239 529h1M244 529h1M248 529h1M257 529h1M261 529h1M265 529h1M269 529h1M277 529h1M281 529h1M285 529h1M289 529h1M297 529h1M300 529h1M304 529h1M308 529h1M316 529h1M320 529h1M325 529h1M329 529h1M337 529h1M341 529h1M345 529h1M349 529h1M358 529h1M362 529h1M239 530h1M243 530h1M248 530h1M256 530h1M261 530h1M265 530h1M269 530h1M277 530h1M281 530h1M285 530h1M289 530h1M297 530h1M300 530h1M304 530h1M308 530h1M317 530h1M321 530h1M325 530h1M329 530h1M337 530h1M341 530h1M345 530h1M350 530h1M358 530h1M243 531h1M248 531h1M256 531h1M260 531h1M265 531h1M269 531h1M277 531h1M281 531h1M285 531h1M289 531h1M297 531h1M300 531h1M304 531h1M309 531h1M317 531h1M321 531h1M325 531h1M329 531h1M337 531h1M341 531h1M346 531h1M350 531h1M248 532h1M256 532h1M260 532h1M264 532h1M268 532h1M277 532h1M281 532h1M285 532h1M289 532h1M297 532h1M300 532h1M304 532h1M309 532h1M317 532h1M321 532h1M325 532h1M329 532h1M338 532h1M342 532h1M346 532h1M350 532h1M256 533h1M260 533h1M264 533h1M268 533h1M276 533h1M281 533h1M285 533h1M289 533h1M297 533h1M300 533h1M304 533h1M309 533h1M317 533h1M321 533h1M325 533h1M329 533h1M338 533h1M342 533h1M346 533h1M260 534h1M264 534h1M268 534h1M276 534h1M280 534h1M285 534h1M289 534h1M297 534h1M300 534h1M304 534h1M309 534h1M317 534h1M321 534h1M325 534h1M329 534h1M338 534h1M342 534h1M264 535h1M268 535h1M276 535h1M280 535h1M285 535h1M289 535h1M297 535h1M300 535h1M304 535h1M309 535h1M317 535h1M321 535h1M325 535h1M329 535h1M276 536h1M280 536h1M285 536h1M289 536h1M297 536h1M300 536h1M304 536h1M309 536h1M317 536h1M321 536h1M325 536h1M280 537h1M285 537h1M289 537h1M297 537h1M300 537h1M304 537h1M309 537h1M317 537h1"/>
<path id="ticks5" stroke="#ffffff" d="M285 61h1M305 61h1M285 62h1M305 62h1M326 62h1M264 63h1M285 63h1M305 63h1M326 63h1M264 64h1M285 64h1M305 64h1M326 64h1M264 65h1M285 65h1M305 65h1M326 65h1M346 65h1M264 66h1M285 66h1M305 66h1M325 66h1M346 66h1M244 67h1M265 67h1M285 67h1M305 67h1M325 67h1M346 67h1M244 68h1M265 68h1M286 68h1M305 68h1M325 68h1M346 68h1M244 69h1M265 69h1M286 69h1M305 69h1M325 69h1M345 69h1M245 70h1M265 70h1M286 70h1M305 70h1M325 70h1M345 70h1M367 70h1M245 71h1M265 71h1M286 71h1M305 71h1M325 71h1M345 71h1M367 71h1M245 72h1M265 72h1M286 72h1M305 72h1M325 72h1M345 72h1M366 72h1M224 73h1M245 73h1M265 73h1M286 73h1M305 73h1M324 73h1M345 73h1M366 73h1M224 74h1M246 74h1M266 74h1M286 74h1M305 74h1M324 74h1M345 74h1M366 74h1M225 75h1M246 75h1M266 75h1M286 75h1M324 75h1M345 75h1M366 75h1M225 76h1M246 76h1M266 76h1M324 76h1M344 76h1M365 76h1M225 77h1M246 77h1M266 77h1M344 77h1M365 77h1M386 77h1M226 78h1M247 78h1M344 78h1M365 78h1M386 78h1M226 79h1M247 79h1M344 79h1M364 79h1M385 79h1M204 80h1M226 80h1M247 80h1M364 80h1M385 80h1M204 81h1M226 81h1M364 81h1M384 81h1M205 82h1M227 82h1M364 82h1M384 82h1M205 83h1M227 83h1M363 83h1M384 83h1M206 84h1M227 84h1M363 84h1M383 84h1M206 85h1M228 85h1M383 85h1M207 86h1M228 86h1M383 86h1M405 86h1M207 87h1M382 87h1M404 87h1M208 88h1M382 88h1M404 88h1M186 89h1M208 89h1M381 89h1M403 89h1M187 90h1M209 90h1M381 90h1M403 90h1M187 91h1M209 91h1M402 91h1M188 92h1M210 92h1M402 92h1M188 93h1M210 93h1M401 93h1M189 94h1M401 94h1M189 95h1M400 95h1M190 96h1M400 96h1M424 96h1M190 97h1M399 97h1M423 97h1M191 98h1M399 98h1M423 98h1M191 99h1M422 99h1M168 100h1M192 100h1M421 100h1M169 101h1M192 101h1M421 101h1M169 102h1M420 102h1M170 103h1M419 103h1M171 104h1M419 104h1M171 105h1M418 105h1M172 106h1M417 106h1M172 107h1M417 107h1M173 108h1M416 108h1M441 108h1M174 109h1M440 109h1M174 110h1M440 110h1M175 111h1M439 111h1M151 112h1M438 112h1M152 113h1M437 113h1M152 114h1M437 114h1M153 115h1M436 115h1M154 116h1M435 116h1M155 117h1M434 117h1M155 118h1M434 118h1M156 119h1M433 119h1M157 120h1M158 121h1M457 121h1M158 122h1M456 122h1M159 123h1M455 123h1M454 124h1M453 125h1M135 126h1M452 126h1M136 127h1M452 127h1M137 128h1M451 128h1M138 129h1M450 129h1M139 130h1M449 130h1M140 131h1M448 131h1M141 132h1M142 133h1M143 134h1M144 135h1M472 135h1M145 136h1M471 136h1M470 137h1M469 138h1M468 139h1M467 140h1M121 141h1M466 141h1M122 142h1M465 142h1M123 143h1M464 143h1M124 144h1M463 144h1M125 145h1M462 145h1M126 146h2M128 147h1M129 148h1M130 149h1M131 150h1M486 151h1M484 152h2M483 153h1M482 154h1M480 155h2M479 156h1M108 157h1M478 157h1M109 158h2M476 158h2M111 159h1M475 159h1M112 160h1M113 161h2M115 162h1M116 163h1M117 164h2M119 165h1M498 168h1M496 169h2M495 170h1M493 171h2M491 172h2M490 173h1M96 174h1M488 174h2M97 175h2M487 175h1M99 176h1M100 177h2M102 178h1M103 179h2M105 180h1M106 181h2M108 182h1M508 186h2M506 187h2M504 188h2M502 189h2M500 190h2M498 191h2M497 192h1M86 193h1M87 194h2M89 195h2M91 196h2M93 197h2M95 198h2M97 199h2M517 204h2M515 205h2M513 206h2M511 207h2M509 208h2M507 209h2M505 210h2M77 212h2M79 213h2M81 214h3M84 215h3M87 216h2M89 217h2M524 224h2M521 225h3M517 226h4M514 227h3M512 228h2M70 231h2M72 232h4M76 233h3M79 234h4M83 235h2M529 244h3M525 245h4M521 246h4M518 247h3M65 252h4M69 253h7M76 254h4M532 264h4M525 265h7M521 266h4M62 272h4M66 273h7M73 274h4M530 285h8M523 286h7M61 293h14M524 305h14M68 312h8M61 313h7M522 324h4M526 325h7M533 326h4M74 332h4M67 333h7M63 334h4M519 344h4M523 345h7M530 346h4M78 351h3M74 352h4M70 353h4M67 354h3M514 363h2M516 364h4M520 365h3M523 366h4M527 367h2M85 370h2M82 371h3M78 372h4M75 373h3M73 374h2M508 381h2M510 382h2M512 383h3M515 384h3M518 385h2M520 386h2M92 388h2M90 389h2M88 390h2M86 391h2M84 392h2M82 393h2M80 394h2M500 399h1M501 400h2M503 401h2M505 402h2M507 403h2M509 404h2M511 405h2M100 406h2M98 407h2M96 408h2M94 409h2M92 410h2M90 411h2M89 412h1M490 416h1M491 417h2M493 418h1M494 419h2M496 420h1M497 421h2M499 422h1M111 423h1M500 423h2M109 424h2M502 424h1M108 425h1M106 426h2M104 427h2M103 428h1M101 429h2M100 430h1M479 433h1M480 434h2M482 435h1M483 436h1M484 437h2M486 438h1M123 439h1M487 439h1M121 440h2M488 440h2M120 441h1M490 441h1M119 442h1M117 443h2M116 444h1M115 445h1M113 446h2M112 447h1M467 448h1M468 449h1M469 450h1M470 451h1M471 452h1M136 453h1M472 453h2M135 454h1M474 454h1M134 455h1M475 455h1M133 456h1M476 456h1M132 457h1M477 457h1M131 458h1M130 459h1M129 460h1M128 461h1M127 462h1M453 462h1M126 463h1M454 463h1M455 464h1M456 465h1M457 466h1M150 467h1M458 467h1M149 468h1M459 468h1M148 469h1M460 469h1M147 470h1M461 470h1M146 471h1M462 471h1M145 472h1M463 472h1M145 473h1M144 474h1M143 475h1M439 475h1M142 476h1M440 476h1M141 477h1M440 477h1M441 478h1M165 479h1M442 479h1M164 480h1M443 480h1M164 481h1M443 481h1M163 482h1M444 482h1M162 483h1M445 483h1M161 484h1M446 484h1M161 485h1M446 485h1M160 486h1M447 486h1M159 487h1M423 487h1M158 488h1M424 488h1M158 489h1M424 489h1M157 490h1M182 490h1M425 490h1M181 491h1M426 491h1M181 492h1M426 492h1M180 493h1M427 493h1M179 494h1M427 494h1M179 495h1M428 495h1M178 496h1M429 496h1M177 497h1M406 497h1M429 497h1M177 498h1M407 498h1M430 498h1M176 499h1M407 499h1M175 500h1M199 500h1M408 500h1M175 501h1M198 501h1M408 501h1M174 502h1M198 502h1M409 502h1M197 503h1M409 503h1M197 504h1M410 504h1M196 505h1M388 505h1M410 505h1M196 506h1M388 506h1M411 506h1M195 507h1M389 507h1M411 507h1M195 508h1M217 508h1M389 508h1M412 508h1M194 509h1M217 509h1M390 509h1M412 509h1M194 510h1M216 510h1M390 510h1M193 511h1M216 511h1M391 511h1M193 512h1M215 512h1M370 512h1M391 512h1M215 513h1M370 513h1M392 513h1M215 514h1M235 514h1M371 514h1M392 514h1M214 515h1M235 515h1M371 515h1M393 515h1M214 516h1M234 516h1M371 516h1M393 516h1M214 517h1M234 517h1M372 517h1M394 517h1M213 518h1M234 518h1M351 518h1M372 518h1M394 518h1M213 519h1M234 519h1M254 519h1M351 519h1M372 519h1M212 520h1M233 520h1M254 520h1M351 520h1M372 520h1M212 521h1M233 521h1M254 521h1M332 521h1M352 521h1M373 521h1M233 522h1M254 522h1M274 522h1M332 522h1M352 522h1M373 522h1M232 523h1M253 523h1M274 523h1M312 523h1M332 523h1M352 523h1M373 523h1M232 524h1M253 524h1M274 524h1M293 524h1M312 524h1M332 524h1M352 524h1M374 524h1M232 525h1M253 525h1M274 525h1M293 525h1M312 525h1M333 525h1M353 525h1M374 525h1M232 526h1M253 526h1M273 526h1M293 526h1M312 526h1M333 526h1M353 526h1M231 527h1M253 527h1M273 527h1M293 527h1M312 527h1M333 527h1M353 527h1M231 528h1M253 528h1M273 528h1M293 528h1M312 528h1M333 528h1M353 528h1M253 529h1M273 529h1M293 529h1M312 529h1M333 529h1M354 529h1M252 530h1M273 530h1M293 530h1M313 530h1M333 530h1M354 530h1M252 531h1M273 531h1M293 531h1M313 531h1M333 531h1M354 531h1M252 532h1M273 532h1M293 532h1M313 532h1M334 532h1M252 533h1M272 533h1M293 533h1M313 533h1M334 533h1M272 534h1M293 534h1M313 534h1M334 534h1M272 535h1M293 535h1M313 535h1M334 535h1M272 536h1M293 536h1M313 536h1M293 537h1M313 537h1"/>
<path id="circles" stroke="#ffffff" d="M285 15h28M275 16h10M313 16h10M265 17h10M323 17h10M255 18h10M333 18h10M248 19h7M343 19h8M243 20h5M351 20h5M238 21h5M356 21h5M234 22h4M361 22h4M230 23h4M365 23h4M226 24h4M369 24h3M223 25h3M372 25h4M220 26h3M376 26h3M217 27h3M379 27h3M214 28h3M382 28h3M211 29h3M385 29h3M207 30h4M388 30h3M204 31h3M391 31h4M201 32h3M395 32h3M199 33h2M398 33h2M197 34h2M400 34h2M195 35h2M402 35h2M192 36h3M404 36h3M190 37h2M407 37h2M188 38h2M409 38h2M186 39h2M411 39h2M183 40h3M413 40h3M181 41h2M416 41h2M179 42h2M418 42h2M177 43h2M420 43h2M174 44h3M422 44h3M172 45h2M425 45h2M170 46h2M427 46h2M168 47h2M429 47h2M166 48h2M431 48h2M164 49h2M433 49h2M162 50h2M435 50h2M160 51h2M437 51h2M158 52h2M439 52h2M157 53h1M441 53h1M155 54h2M442 54h2M153 55h2M444 55h1M152 56h1M445 56h2M150 57h2M447 57h2M149 58h1M449 58h1M147 59h2M450 59h2M146 60h1M287 60h24M452 60h1M144 61h2M270 61h17M311 61h17M453 61h2M143 62h1M264 62h6M328 62h6M455 62h1M141 63h2M260 63h4M334 63h4M456 63h2M140 64h1M254 64h6M338 64h6M458 64h1M138 65h2M248 65h6M344 65h6M459 65h2M136 66h2M244 66h4M350 66h4M461 66h1M135 67h1M240 67h4M354 67h5M462 67h2M133 68h2M236 68h4M359 68h4M464 68h2M132 69h1M232 69h4M363 69h4M466 69h1M130 70h2M229 70h3M367 70h2M467 70h1M129 71h1M227 71h2M369 71h3M468 71h2M128 72h1M224 72h3M372 72h3M470 72h1M126 73h2M220 73h4M375 73h4M471 73h1M125 74h1M217 74h3M379 74h3M472 74h2M124 75h1M214 75h3M288 75h22M382 75h2M474 75h1M123 76h1M212 76h2M272 76h16M310 76h16M384 76h3M475 76h1M122 77h1M209 77h3M265 77h7M326 77h8M387 77h2M476 77h1M121 78h1M207 78h2M259 78h6M334 78h5M389 78h2M477 78h1M120 79h1M205 79h2M255 79h4M339 79h4M391 79h2M478 79h1M119 80h1M203 80h2M251 80h4M343 80h4M393 80h2M479 80h1M118 81h1M201 81h2M247 81h4M347 81h4M395 81h3M480 81h1M117 82h1M199 82h2M244 82h3M351 82h4M398 82h2M481 82h1M115 83h2M197 83h2M240 83h4M355 83h4M400 83h2M482 83h1M114 84h1M194 84h3M236 84h4M359 84h3M402 84h2M483 84h2M113 85h1M192 85h2M232 85h4M362 85h4M404 85h2M485 85h1M111 86h2M190 86h2M229 86h3M366 86h4M406 86h2M486 86h1M110 87h1M188 87h2M227 87h2M370 87h2M408 87h2M487 87h2M109 88h1M187 88h1M225 88h2M372 88h2M410 88h2M489 88h1M108 89h1M185 89h2M221 89h4M374 89h3M412 89h2M490 89h1M107 90h1M183 90h2M217 90h4M377 90h4M414 90h2M491 90h1M106 91h1M181 91h2M214 91h3M381 91h4M416 91h2M492 91h1M105 92h1M180 92h1M212 92h2M385 92h2M418 92h1M493 92h1M104 93h1M178 93h2M210 93h2M387 93h2M419 93h2M494 93h1M103 94h1M176 94h2M208 94h2M389 94h2M421 94h2M495 94h1M102 95h1M174 95h2M206 95h2M391 95h2M423 95h2M496 95h1M101 96h1M173 96h1M204 96h2M393 96h2M425 96h1M497 96h1M100 97h1M171 97h2M202 97h2M395 97h2M426 97h2M498 97h1M99 98h1M170 98h1M200 98h2M397 98h2M428 98h1M499 98h1M98 99h1M169 99h1M198 99h2M399 99h2M429 99h1M500 99h1M97 100h1M167 100h2M196 100h2M401 100h2M430 100h2M501 100h1M96 101h1M166 101h1M194 101h2M403 101h2M432 101h1M502 101h1M95 102h1M164 102h2M192 102h2M405 102h2M433 102h2M503 102h1M94 103h1M163 103h1M190 103h2M407 103h2M435 103h1M504 103h1M93 104h1M162 104h1M188 104h2M409 104h2M436 104h1M505 104h1M92 105h1M160 105h2M187 105h1M283 105h33M411 105h1M437 105h2M506 105h1M91 106h1M159 106h1M185 106h2M276 106h7M316 106h7M412 106h2M439 106h1M507 106h1M90 107h1M157 107h2M184 107h1M269 107h7M323 107h6M414 107h1M440 107h2M508 107h1M89 108h1M156 108h1M182 108h2M263 108h6M329 108h7M415 108h2M442 108h1M509 108h1M88 109h1M155 109h1M181 109h1M258 109h5M336 109h5M417 109h1M443 109h1M510 109h1M87 110h1M153 110h2M179 110h2M254 110h4M341 110h4M418 110h2M444 110h2M511 110h1M86 111h1M152 111h1M177 111h2M251 111h3M345 111h3M420 111h2M446 111h1M512 111h1M86 112h1M151 112h1M175 112h2M248 112h3M348 112h3M422 112h2M447 112h1M512 112h1M85 113h1M149 113h2M174 113h1M245 113h3M351 113h3M424 113h1M448 113h1M513 113h1M84 114h1M148 114h1M173 114h1M241 114h4M354 114h4M425 114h1M449 114h2M514 114h1M83 115h1M147 115h1M171 115h2M238 115h3M358 115h3M426 115h1M451 115h1M515 115h1M83 116h1M146 116h1M170 116h1M235 116h3M361 116h3M427 116h2M452 116h1M515 116h1M82 117h1M145 117h1M169 117h1M232 117h3M364 117h3M429 117h1M453 117h1M516 117h1M81 118h1M144 118h1M168 118h1M229 118h3M367 118h3M430 118h1M454 118h1M517 118h1M80 119h1M142 119h2M166 119h2M226 119h3M370 119h3M431 119h2M455 119h2M518 119h1M79 120h1M141 120h1M165 120h1M224 120h2M373 120h2M433 120h1M457 120h1M519 120h1M78 121h1M140 121h1M164 121h1M222 121h2M375 121h2M434 121h1M458 121h1M520 121h1M77 122h1M139 122h1M162 122h2M219 122h3M377 122h2M435 122h2M459 122h1M521 122h1M76 123h1M138 123h1M161 123h1M217 123h2M379 123h2M437 123h1M460 123h1M522 123h1M75 124h1M136 124h2M160 124h1M215 124h2M381 124h2M438 124h1M461 124h1M523 124h1M74 125h1M135 125h1M158 125h2M213 125h2M383 125h2M439 125h1M462 125h2M524 125h1M73 126h1M134 126h1M157 126h1M211 126h2M385 126h2M440 126h2M464 126h1M525 126h1M73 127h1M133 127h1M156 127h1M209 127h2M387 127h2M442 127h1M465 127h1M525 127h1M72 128h1M132 128h1M155 128h1M207 128h2M389 128h2M443 128h1M466 128h1M526 128h1M71 129h1M131 129h1M154 129h1M205 129h2M391 129h2M444 129h1M467 129h1M527 129h1M70 130h1M130 130h1M152 130h2M203 130h2M393 130h2M445 130h1M468 130h1M528 130h1M70 131h1M129 131h1M151 131h1M202 131h1M395 131h2M446 131h2M469 131h1M528 131h1M69 132h1M128 132h1M150 132h1M200 132h2M397 132h2M448 132h1M470 132h1M529 132h1M68 133h1M127 133h1M149 133h1M199 133h1M399 133h1M449 133h1M471 133h1M530 133h1M68 134h1M126 134h1M148 134h1M197 134h2M400 134h2M450 134h1M472 134h1M530 134h1M67 135h1M125 135h1M147 135h1M196 135h1M402 135h1M451 135h1M473 135h1M531 135h1M66 136h1M124 136h1M146 136h1M194 136h2M403 136h2M452 136h1M474 136h1M532 136h1M66 137h1M124 137h1M145 137h1M192 137h2M405 137h2M453 137h1M474 137h1M532 137h1M65 138h1M123 138h1M144 138h1M191 138h1M407 138h1M454 138h1M475 138h1M533 138h1M65 139h1M122 139h1M143 139h1M189 139h2M408 139h2M455 139h1M476 139h1M533 139h1M64 140h1M121 140h1M142 140h1M188 140h1M410 140h1M456 140h1M477 140h1M534 140h1M63 141h1M120 141h1M141 141h1M186 141h2M411 141h2M457 141h1M478 141h1M535 141h1M63 142h1M119 142h1M140 142h1M185 142h1M413 142h1M458 142h1M479 142h1M535 142h1M62 143h1M119 143h1M139 143h1M184 143h1M414 143h1M459 143h1M479 143h1M536 143h1M61 144h1M118 144h1M138 144h1M182 144h2M415 144h2M460 144h1M480 144h1M537 144h1M61 145h1M117 145h1M137 145h1M181 145h1M417 145h1M461 145h1M481 145h1M537 145h1M60 146h1M116 146h1M136 146h1M180 146h1M418 146h1M462 146h1M482 146h1M538 146h1M59 147h1M115 147h1M135 147h1M179 147h1M419 147h1M463 147h1M483 147h1M539 147h1M59 148h1M114 148h1M134 148h1M177 148h2M420 148h1M464 148h1M484 148h1M539 148h1M58 149h1M113 149h1M133 149h1M176 149h1M421 149h2M465 149h1M485 149h1M540 149h1M57 150h1M113 150h1M132 150h1M175 150h1M423 150h1M466 150h1M485 150h1M541 150h1M57 151h1M112 151h1M131 151h1M174 151h1M424 151h1M467 151h1M486 151h1M541 151h1M56 152h1M111 152h1M130 152h1M173 152h1M425 152h1M468 152h1M487 152h1M542 152h1M55 153h1M110 153h1M130 153h1M171 153h2M426 153h2M468 153h1M488 153h1M543 153h1M55 154h1M110 154h1M129 154h1M170 154h1M428 154h1M469 154h1M488 154h1M543 154h1M54 155h1M109 155h1M128 155h1M169 155h1M429 155h1M470 155h1M489 155h1M544 155h1M54 156h1M108 156h1M127 156h1M168 156h1M430 156h1M471 156h1M490 156h1M544 156h1M53 157h1M107 157h1M126 157h1M167 157h1M431 157h1M472 157h1M491 157h1M545 157h1M52 158h1M107 158h1M125 158h1M166 158h1M432 158h1M473 158h1M491 158h1M546 158h1M52 159h1M106 159h1M125 159h1M165 159h1M433 159h1M473 159h1M492 159h1M546 159h1M51 160h1M105 160h1M124 160h1M164 160h1M434 160h1M474 160h1M493 160h1M547 160h1M51 161h1M105 161h1M123 161h1M163 161h1M435 161h1M475 161h1M493 161h1M547 161h1M50 162h1M104 162h1M122 162h1M162 162h1M436 162h1M476 162h1M494 162h1M548 162h1M50 163h1M103 163h1M122 163h1M161 163h1M437 163h1M476 163h1M495 163h1M548 163h1M49 164h1M102 164h1M121 164h1M160 164h1M438 164h1M477 164h1M496 164h1M549 164h1M49 165h1M102 165h1M120 165h1M159 165h1M439 165h1M478 165h1M496 165h1M549 165h1M48 166h1M101 166h1M119 166h1M158 166h1M440 166h1M479 166h1M497 166h1M550 166h1M48 167h1M100 167h1M119 167h1M157 167h1M441 167h1M479 167h1M498 167h1M550 167h1M47 168h1M100 168h1M118 168h1M156 168h1M442 168h1M480 168h1M498 168h1M551 168h1M47 169h1M99 169h1M117 169h1M155 169h1M443 169h1M481 169h1M499 169h1M551 169h1M46 170h1M98 170h1M116 170h1M154 170h1M444 170h1M482 170h1M500 170h1M552 170h1M46 171h1M97 171h1M115 171h1M153 171h1M445 171h1M483 171h1M501 171h1M552 171h1M45 172h1M97 172h1M115 172h1M153 172h1M445 172h1M483 172h1M501 172h1M553 172h1M45 173h1M96 173h1M114 173h1M152 173h1M446 173h1M484 173h1M502 173h1M553 173h1M44 174h1M95 174h1M113 174h1M151 174h1M447 174h1M485 174h1M503 174h1M554 174h1M44 175h1M95 175h1M112 175h1M150 175h1M448 175h1M486 175h1M503 175h1M554 175h1M44 176h1M94 176h1M112 176h1M149 176h1M449 176h1M486 176h1M504 176h1M554 176h1M43 177h1M94 177h1M111 177h1M148 177h1M450 177h1M487 177h1M504 177h1M555 177h1M43 178h1M93 178h1M111 178h1M148 178h1M450 178h1M487 178h1M505 178h1M555 178h1M42 179h1M93 179h1M110 179h1M147 179h1M451 179h1M488 179h1M505 179h1M556 179h1M42 180h1M92 180h1M110 180h1M146 180h1M452 180h1M488 180h1M506 180h1M556 180h1M41 181h1M91 181h1M109 181h1M145 181h1M453 181h1M489 181h1M507 181h1M557 181h1M41 182h1M91 182h1M108 182h1M144 182h1M454 182h1M490 182h1M507 182h1M557 182h1M40 183h1M90 183h1M108 183h1M144 183h1M454 183h1M490 183h1M508 183h1M558 183h1M40 184h1M90 184h1M107 184h1M143 184h1M455 184h1M491 184h1M508 184h1M558 184h1M40 185h1M89 185h1M106 185h1M142 185h1M456 185h1M492 185h1M509 185h1M558 185h1M39 186h1M89 186h1M106 186h1M141 186h1M457 186h1M492 186h1M509 186h1M559 186h1M39 187h1M88 187h1M105 187h1M141 187h1M457 187h1M493 187h1M510 187h1M559 187h1M38 188h1M87 188h1M104 188h1M140 188h1M458 188h1M494 188h1M511 188h1M560 188h1M38 189h1M87 189h1M104 189h1M139 189h1M459 189h1M494 189h1M511 189h1M560 189h1M37 190h1M86 190h1M103 190h1M139 190h1M459 190h1M495 190h1M512 190h1M561 190h1M37 191h1M86 191h1M103 191h1M138 191h1M460 191h1M495 191h1M512 191h1M561 191h1M36 192h1M85 192h1M102 192h1M137 192h1M461 192h1M496 192h1M513 192h1M562 192h1M36 193h1M85 193h1M102 193h1M137 193h1M461 193h1M496 193h1M513 193h1M562 193h1M36 194h1M84 194h1M101 194h1M136 194h1M462 194h1M497 194h1M514 194h1M562 194h1M35 195h1M84 195h1M101 195h1M136 195h1M462 195h1M497 195h1M514 195h1M563 195h1M35 196h1M84 196h1M100 196h1M135 196h1M463 196h1M498 196h1M514 196h1M563 196h1M34 197h1M83 197h1M100 197h1M134 197h1M464 197h1M498 197h1M515 197h1M564 197h1M34 198h1M83 198h1M99 198h1M134 198h1M464 198h1M499 198h1M515 198h1M564 198h1M33 199h1M82 199h1M99 199h1M133 199h1M465 199h1M499 199h1M516 199h1M565 199h1M33 200h1M82 200h1M98 200h1M132 200h1M466 200h1M500 200h1M516 200h1M565 200h1M32 201h1M81 201h1M98 201h1M132 201h1M466 201h1M500 201h1M517 201h1M566 201h1M32 202h1M81 202h1M97 202h1M131 202h1M467 202h1M501 202h1M517 202h1M566 202h1M32 203h1M80 203h1M97 203h1M130 203h1M468 203h1M501 203h1M518 203h1M566 203h1M31 204h1M80 204h1M96 204h1M130 204h1M468 204h1M502 204h1M518 204h1M567 204h1M31 205h1M79 205h1M96 205h1M129 205h1M469 205h1M502 205h1M519 205h1M567 205h1M31 206h1M79 206h1M95 206h1M129 206h1M469 206h1M503 206h1M519 206h1M567 206h1M30 207h1M78 207h1M95 207h1M128 207h1M470 207h1M503 207h1M520 207h1M568 207h1M30 208h1M78 208h1M94 208h1M128 208h1M470 208h1M504 208h1M520 208h1M568 208h1M30 209h1M77 209h1M94 209h1M127 209h1M471 209h1M504 209h1M521 209h1M568 209h1M30 210h1M77 210h1M93 210h1M127 210h1M471 210h1M505 210h1M521 210h1M568 210h1M29 211h1M77 211h1M93 211h1M126 211h1M472 211h1M505 211h1M521 211h1M569 211h1M29 212h1M76 212h1M92 212h1M126 212h1M472 212h1M506 212h1M522 212h1M569 212h1M29 213h1M76 213h1M92 213h1M125 213h1M473 213h1M506 213h1M522 213h1M569 213h1M28 214h1M75 214h1M91 214h1M125 214h1M473 214h1M507 214h1M523 214h1M570 214h1M28 215h1M75 215h1M91 215h1M124 215h1M474 215h1M507 215h1M523 215h1M570 215h1M28 216h1M75 216h1M91 216h1M124 216h1M474 216h1M507 216h1M523 216h1M570 216h1M27 217h1M74 217h1M90 217h1M123 217h1M475 217h1M508 217h1M524 217h1M571 217h1M27 218h1M74 218h1M90 218h1M123 218h1M475 218h1M508 218h1M524 218h1M571 218h1M27 219h1M74 219h1M90 219h1M122 219h1M476 219h1M508 219h1M524 219h1M571 219h1M26 220h1M73 220h1M90 220h1M122 220h1M476 220h1M508 220h1M525 220h1M572 220h1M26 221h1M73 221h1M89 221h1M122 221h1M476 221h1M509 221h1M525 221h1M572 221h1M26 222h1M73 222h1M89 222h1M121 222h1M477 222h1M509 222h1M525 222h1M572 222h1M25 223h1M73 223h1M89 223h1M121 223h1M477 223h1M509 223h1M525 223h1M573 223h1M25 224h1M72 224h1M89 224h1M120 224h1M478 224h1M509 224h1M526 224h1M573 224h1M25 225h1M72 225h1M88 225h1M120 225h1M478 225h1M510 225h1M526 225h1M573 225h1M24 226h1M72 226h1M88 226h1M119 226h1M479 226h1M510 226h1M526 226h1M574 226h1M24 227h1M71 227h1M87 227h1M119 227h1M479 227h1M511 227h1M527 227h1M574 227h1M24 228h1M71 228h1M87 228h1M119 228h1M479 228h1M511 228h1M527 228h1M574 228h1M24 229h1M70 229h1M86 229h1M118 229h1M480 229h1M512 229h1M528 229h1M574 229h1M23 230h1M70 230h1M86 230h1M118 230h1M480 230h1M512 230h1M528 230h1M575 230h1M23 231h1M70 231h1M86 231h1M118 231h1M480 231h1M512 231h1M528 231h1M575 231h1M23 232h1M69 232h1M85 232h1M117 232h1M481 232h1M513 232h1M529 232h1M575 232h1M23 233h1M69 233h1M85 233h1M117 233h1M481 233h1M513 233h1M529 233h1M575 233h1M22 234h1M69 234h1M85 234h1M117 234h1M481 234h1M513 234h1M529 234h1M576 234h1M22 235h1M69 235h1M85 235h1M116 235h1M482 235h1M513 235h1M529 235h1M576 235h1M22 236h1M68 236h1M84 236h1M116 236h1M482 236h1M514 236h1M530 236h1M576 236h1M22 237h1M68 237h1M84 237h1M116 237h1M482 237h1M514 237h1M530 237h1M576 237h1M21 238h1M68 238h1M84 238h1M115 238h1M483 238h1M514 238h1M530 238h1M577 238h1M21 239h1M68 239h1M84 239h1M115 239h1M483 239h1M514 239h1M530 239h1M577 239h1M21 240h1M67 240h1M83 240h1M115 240h1M483 240h1M515 240h1M531 240h1M577 240h1M21 241h1M67 241h1M83 241h1M114 241h1M484 241h1M515 241h1M531 241h1M577 241h1M21 242h1M67 242h1M83 242h1M114 242h1M484 242h1M515 242h1M531 242h1M577 242h1M20 243h1M67 243h1M83 243h1M114 243h1M484 243h1M515 243h1M531 243h1M578 243h1M20 244h1M66 244h1M82 244h1M114 244h1M484 244h1M516 244h1M532 244h1M578 244h1M20 245h1M66 245h1M82 245h1M113 245h1M485 245h1M516 245h1M532 245h1M578 245h1M20 246h1M66 246h1M82 246h1M113 246h1M485 246h1M516 246h1M532 246h1M578 246h1M20 247h1M66 247h1M81 247h1M113 247h1M485 247h1M517 247h1M532 247h1M578 247h1M19 248h1M65 248h1M81 248h1M112 248h1M486 248h1M517 248h1M533 248h1M579 248h1M19 249h1M65 249h1M81 249h1M112 249h1M486 249h1M517 249h1M533 249h1M579 249h1M19 250h1M65 250h1M81 250h1M112 250h1M486 250h1M517 250h1M533 250h1M579 250h1M19 251h1M65 251h1M80 251h1M111 251h1M487 251h1M518 251h1M533 251h1M579 251h1M19 252h1M65 252h1M80 252h1M111 252h1M487 252h1M518 252h1M533 252h1M579 252h1M19 253h1M65 253h1M80 253h1M111 253h1M487 253h1M518 253h1M533 253h1M579 253h1M19 254h1M64 254h1M80 254h1M110 254h1M488 254h1M518 254h1M534 254h1M579 254h1M18 255h1M64 255h1M79 255h1M110 255h1M488 255h1M519 255h1M534 255h1M580 255h1M18 256h1M64 256h1M79 256h1M110 256h1M488 256h1M519 256h1M534 256h1M580 256h1M18 257h1M64 257h1M79 257h1M110 257h1M488 257h1M519 257h1M534 257h1M580 257h1M18 258h1M64 258h1M79 258h1M109 258h1M489 258h1M519 258h1M534 258h1M580 258h1M18 259h1M64 259h1M78 259h1M109 259h1M489 259h1M520 259h1M534 259h1M580 259h1M18 260h1M63 260h1M78 260h1M109 260h1M489 260h1M520 260h1M535 260h1M580 260h1M18 261h1M63 261h1M78 261h1M109 261h1M489 261h1M520 261h1M535 261h1M580 261h1M18 262h1M63 262h1M78 262h1M109 262h1M489 262h1M520 262h1M535 262h1M580 262h1M18 263h1M63 263h1M78 263h1M108 263h1M490 263h1M520 263h1M535 263h1M580 263h1M18 264h1M62 264h1M78 264h1M108 264h1M490 264h1M520 264h1M536 264h1M580 264h1M17 265h1M62 265h1M77 265h1M108 265h1M490 265h1M521 265h1M536 265h1M581 265h1M17 266h1M62 266h1M77 266h1M108 266h1M490 266h1M521 266h1M536 266h1M581 266h1M17 267h1M62 267h1M77 267h1M108 267h1M490 267h1M521 267h1M536 267h1M581 267h1M17 268h1M62 268h1M77 268h1M108 268h1M490 268h1M521 268h1M536 268h1M581 268h1M17 269h1M62 269h1M77 269h1M107 269h1M491 269h1M521 269h1M536 269h1M581 269h1M17 270h1M61 270h1M77 270h1M107 270h1M491 270h1M521 270h1M537 270h1M581 270h1M17 271h1M61 271h1M77 271h1M107 271h1M491 271h1M521 271h1M537 271h1M581 271h1M17 272h1M61 272h1M76 272h1M107 272h1M491 272h1M522 272h1M537 272h1M581 272h1M17 273h1M61 273h1M76 273h1M107 273h1M491 273h1M522 273h1M537 273h1M581 273h1M17 274h1M61 274h1M76 274h1M107 274h1M491 274h1M522 274h1M537 274h1M581 274h1M16 275h1M61 275h1M76 275h1M107 275h1M491 275h1M522 275h1M537 275h1M582 275h1M16 276h1M61 276h1M76 276h1M106 276h1M492 276h1M522 276h1M537 276h1M582 276h1M16 277h1M61 277h1M76 277h1M106 277h1M492 277h1M522 277h1M537 277h1M582 277h1M16 278h1M61 278h1M76 278h1M106 278h1M492 278h1M522 278h1M537 278h1M582 278h1M16 279h1M61 279h1M76 279h1M106 279h1M492 279h1M522 279h1M537 279h1M582 279h1M16 280h1M61 280h1M76 280h1M106 280h1M492 280h1M522 280h1M537 280h1M582 280h1M16 281h1M61 281h1M76 281h1M106 281h1M492 281h1M522 281h1M537 281h1M582 281h1M16 282h1M61 282h1M76 282h1M106 282h1M492 282h1M522 282h1M537 282h1M582 282h1M16 283h1M61 283h1M76 283h1M105 283h1M493 283h1M522 283h1M537 283h1M582 283h1M16 284h1M61 284h1M76 284h1M105 284h1M493 284h1M522 284h1M537 284h1M582 284h1M15 285h1M61 285h1M76 285h1M105 285h1M493 285h1M522 285h1M537 285h1M583 285h1M15 286h1M61 286h1M76 286h1M105 286h1M493 286h1M522 286h1M537 286h1M583 286h1M15 287h1M60 287h1M76 287h1M105 287h1M493 287h1M522 287h1M538 287h1M583 287h1M15 288h1M60 288h1M75 288h1M105 288h1M493 288h1M523 288h1M538 288h1M583 288h1M15 289h1M60 289h1M75 289h1M105 289h1M493 289h1M523 289h1M538 289h1M583 289h1M15 290h1M60 290h1M75 290h1M105 290h1M493 290h1M523 290h1M538 290h1M583 290h1M15 291h1M60 291h1M75 291h1M105 291h1M493 291h1M523 291h1M538 291h1M583 291h1M15 292h1M60 292h1M75 292h1M105 292h1M493 292h1M523 292h1M538 292h1M583 292h1M15 293h1M60 293h1M75 293h1M105 293h1M493 293h1M523 293h1M538 293h1M583 293h1M15 294h1M60 294h1M75 294h1M105 294h1M493 294h1M523 294h1M538 294h1M583 294h1M15 295h1M60 295h1M75 295h1M105 295h1M493 295h1M523 295h1M538 295h1M583 295h1M15 296h1M60 296h1M75 296h1M105 296h1M493 296h1M523 296h1M538 296h1M583 296h1M15 297h1M60 297h1M75 297h1M105 297h1M493 297h1M523 297h1M538 297h1M583 297h1M15 298h1M60 298h1M75 298h1M105 298h1M493 298h1M523 298h1M538 298h1M583 298h1M15 299h1M60 299h1M75 299h1M105 299h1M493 299h1M523 299h1M538 299h1M583 299h1M15 300h1M60 300h1M75 300h1M105 300h1M493 300h1M523 300h1M538 300h1M583 300h1M15 301h1M60 301h1M75 301h1M105 301h1M493 301h1M523 301h1M538 301h1M583 301h1M15 302h1M60 302h1M75 302h1M105 302h1M493 302h1M523 302h1M538 302h1M583 302h1M15 303h1M60 303h1M75 303h1M105 303h1M493 303h1M523 303h1M538 303h1M583 303h1M15 304h1M60 304h1M75 304h1M105 304h1M493 304h1M523 304h1M538 304h1M583 304h1M15 305h1M60 305h1M75 305h1M105 305h1M493 305h1M523 305h1M538 305h1M583 305h1M15 306h1M60 306h1M75 306h1M105 306h1M493 306h1M523 306h1M538 306h1M583 306h1M15 307h1M60 307h1M75 307h1M105 307h1M493 307h1M523 307h1M538 307h1M583 307h1M15 308h1M60 308h1M75 308h1M105 308h1M493 308h1M523 308h1M538 308h1M583 308h1M15 309h1M60 309h1M75 309h1M105 309h1M493 309h1M523 309h1M538 309h1M583 309h1M15 310h1M60 310h1M76 310h1M105 310h1M493 310h1M522 310h1M538 310h1M583 310h1M15 311h1M61 311h1M76 311h1M105 311h1M493 311h1M522 311h1M537 311h1M583 311h1M15 312h1M61 312h1M76 312h1M105 312h1M493 312h1M522 312h1M537 312h1M583 312h1M16 313h1M61 313h1M76 313h1M105 313h1M493 313h1M522 313h1M537 313h1M582 313h1M16 314h1M61 314h1M76 314h1M105 314h1M493 314h1M522 314h1M537 314h1M582 314h1M16 315h1M61 315h1M76 315h1M105 315h1M493 315h1M522 315h1M537 315h1M582 315h1M16 316h1M61 316h1M76 316h1M106 316h1M492 316h1M522 316h1M537 316h1M582 316h1M16 317h1M61 317h1M76 317h1M106 317h1M492 317h1M522 317h1M537 317h1M582 317h1M16 318h1M61 318h1M76 318h1M106 318h1M492 318h1M522 318h1M537 318h1M582 318h1M16 319h1M61 319h1M76 319h1M106 319h1M492 319h1M522 319h1M537 319h1M582 319h1M16 320h1M61 320h1M76 320h1M106 320h1M492 320h1M522 320h1M537 320h1M582 320h1M16 321h1M61 321h1M76 321h1M106 321h1M492 321h1M522 321h1M537 321h1M582 321h1M16 322h1M61 322h1M76 322h1M106 322h1M492 322h1M522 322h1M537 322h1M582 322h1M17 323h1M61 323h1M76 323h1M107 323h1M491 323h1M522 323h1M537 323h1M581 323h1M17 324h1M61 324h1M76 324h1M107 324h1M491 324h1M522 324h1M537 324h1M581 324h1M17 325h1M61 325h1M76 325h1M107 325h1M491 325h1M522 325h1M537 325h1M581 325h1M17 326h1M61 326h1M77 326h1M107 326h1M491 326h1M521 326h1M537 326h1M581 326h1M17 327h1M61 327h1M77 327h1M107 327h1M491 327h1M521 327h1M537 327h1M581 327h1M17 328h1M62 328h1M77 328h1M107 328h1M491 328h1M521 328h1M536 328h1M581 328h1M17 329h1M62 329h1M77 329h1M108 329h1M490 329h1M521 329h1M536 329h1M581 329h1M17 330h1M62 330h1M77 330h1M108 330h1M490 330h1M521 330h1M536 330h1M581 330h1M17 331h1M62 331h1M77 331h1M108 331h1M490 331h1M521 331h1M536 331h1M581 331h1M17 332h1M62 332h1M77 332h1M108 332h1M490 332h1M521 332h1M536 332h1M581 332h1M18 333h1M62 333h1M77 333h1M108 333h1M490 333h1M521 333h1M536 333h1M580 333h1M18 334h1M63 334h1M78 334h1M108 334h1M490 334h1M520 334h1M535 334h1M580 334h1M18 335h1M63 335h1M78 335h1M108 335h1M490 335h1M520 335h1M535 335h1M580 335h1M18 336h1M63 336h1M78 336h1M109 336h1M489 336h1M520 336h1M535 336h1M580 336h1M18 337h1M63 337h1M78 337h1M109 337h1M489 337h1M520 337h1M535 337h1M580 337h1M18 338h1M64 338h1M78 338h1M109 338h1M489 338h1M520 338h1M534 338h1M580 338h1M18 339h1M64 339h1M79 339h1M109 339h1M489 339h1M519 339h1M534 339h1M580 339h1M18 340h1M64 340h1M79 340h1M109 340h1M489 340h1M519 340h1M534 340h1M580 340h1M18 341h1M64 341h1M79 341h1M110 341h1M488 341h1M519 341h1M534 341h1M580 341h1M18 342h1M64 342h1M79 342h1M110 342h1M488 342h1M519 342h1M534 342h1M580 342h1M19 343h1M64 343h1M80 343h1M110 343h1M488 343h1M518 343h1M534 343h1M579 343h1M19 344h1M65 344h1M80 344h1M110 344h1M488 344h1M518 344h1M533 344h1M579 344h1M19 345h1M65 345h1M80 345h1M111 345h1M487 345h1M518 345h1M533 345h1M579 345h1M19 346h1M65 346h1M80 346h1M111 346h1M487 346h1M518 346h1M533 346h1M579 346h1M19 347h1M65 347h1M81 347h1M111 347h1M487 347h1M517 347h1M533 347h1M579 347h1M19 348h1M65 348h1M81 348h1M112 348h1M486 348h1M517 348h1M533 348h1M579 348h1M19 349h1M65 349h1M81 349h1M112 349h1M486 349h1M517 349h1M533 349h1M579 349h1M19 350h1M66 350h1M81 350h1M112 350h1M486 350h1M517 350h1M532 350h1M579 350h1M20 351h1M66 351h1M82 351h1M113 351h1M485 351h1M516 351h1M532 351h1M578 351h1M20 352h1M66 352h1M82 352h1M113 352h1M485 352h1M516 352h1M532 352h1M578 352h1M20 353h1M66 353h1M82 353h1M113 353h1M485 353h1M516 353h1M532 353h1M578 353h1M20 354h1M67 354h1M82 354h1M114 354h1M484 354h1M516 354h1M531 354h1M578 354h1M20 355h1M67 355h1M83 355h1M114 355h1M484 355h1M515 355h1M531 355h1M578 355h1M21 356h1M67 356h1M83 356h1M114 356h1M484 356h1M515 356h1M531 356h1M577 356h1M21 357h1M67 357h1M83 357h1M114 357h1M484 357h1M515 357h1M531 357h1M577 357h1M21 358h1M67 358h1M83 358h1M115 358h1M483 358h1M515 358h1M531 358h1M577 358h1M21 359h1M68 359h1M84 359h1M115 359h1M483 359h1M514 359h1M530 359h1M577 359h1M21 360h1M68 360h1M84 360h1M115 360h1M483 360h1M514 360h1M530 360h1M577 360h1M22 361h1M68 361h1M84 361h1M116 361h1M482 361h1M514 361h1M530 361h1M576 361h1M22 362h1M68 362h1M85 362h1M116 362h1M482 362h1M513 362h1M530 362h1M576 362h1M22 363h1M69 363h1M85 363h1M116 363h1M482 363h1M513 363h1M529 363h1M576 363h1M22 364h1M69 364h1M85 364h1M117 364h1M481 364h1M513 364h1M529 364h1M576 364h1M23 365h1M69 365h1M85 365h1M117 365h1M481 365h1M513 365h1M529 365h1M575 365h1M23 366h1M69 366h1M86 366h1M117 366h1M481 366h1M512 366h1M529 366h1M575 366h1M23 367h1M70 367h1M86 367h1M118 367h1M480 367h1M512 367h1M528 367h1M575 367h1M23 368h1M70 368h1M86 368h1M118 368h1M480 368h1M512 368h1M528 368h1M575 368h1M24 369h1M71 369h1M86 369h1M118 369h1M480 369h1M512 369h1M527 369h1M574 369h1M24 370h1M71 370h1M87 370h1M119 370h1M479 370h1M511 370h1M527 370h1M574 370h1M24 371h1M71 371h1M87 371h1M119 371h1M479 371h1M511 371h1M527 371h1M574 371h1M25 372h1M72 372h1M88 372h1M119 372h1M479 372h1M510 372h1M526 372h1M573 372h1M25 373h1M72 373h1M88 373h1M120 373h1M478 373h1M510 373h1M526 373h1M573 373h1M25 374h1M72 374h1M89 374h1M120 374h1M478 374h1M509 374h1M526 374h1M573 374h1M25 375h1M73 375h1M89 375h1M121 375h1M477 375h1M509 375h1M525 375h1M573 375h1M26 376h1M73 376h1M89 376h1M121 376h1M477 376h1M509 376h1M525 376h1M572 376h1M26 377h1M73 377h1M90 377h1M122 377h1M476 377h1M508 377h1M525 377h1M572 377h1M26 378h1M73 378h1M90 378h1M122 378h1M476 378h1M508 378h1M525 378h1M572 378h1M27 379h1M74 379h1M90 379h1M123 379h1M475 379h1M508 379h1M524 379h1M571 379h1M27 380h1M74 380h1M90 380h1M123 380h1M475 380h1M508 380h1M524 380h1M571 380h1M27 381h1M74 381h1M91 381h1M124 381h1M474 381h1M507 381h1M524 381h1M571 381h1M28 382h1M75 382h1M91 382h1M124 382h1M474 382h1M507 382h1M523 382h1M570 382h1M28 383h1M75 383h1M91 383h1M125 383h1M473 383h1M507 383h1M523 383h1M570 383h1M28 384h1M76 384h1M91 384h1M125 384h1M473 384h1M507 384h1M522 384h1M570 384h1M29 385h1M76 385h1M92 385h1M126 385h1M472 385h1M506 385h1M522 385h1M569 385h1M29 386h1M76 386h1M92 386h1M126 386h1M472 386h1M506 386h1M522 386h1M569 386h1M29 387h1M77 387h1M93 387h1M127 387h1M471 387h1M505 387h1M521 387h1M569 387h1M30 388h1M77 388h1M93 388h1M127 388h1M471 388h1M505 388h1M521 388h1M568 388h1M30 389h1M78 389h1M94 389h1M128 389h1M470 389h1M504 389h1M520 389h1M568 389h1M30 390h1M78 390h1M94 390h1M128 390h1M470 390h1M504 390h1M520 390h1M568 390h1M31 391h1M79 391h1M95 391h1M129 391h1M469 391h1M503 391h1M519 391h1M567 391h1M31 392h1M79 392h1M95 392h1M129 392h1M469 392h1M503 392h1M519 392h1M567 392h1M31 393h1M80 393h1M96 393h1M130 393h1M468 393h1M502 393h1M518 393h1M567 393h1M31 394h1M80 394h1M96 394h1M130 394h1M468 394h1M502 394h1M518 394h1M567 394h1M32 395h1M81 395h1M97 395h1M131 395h1M467 395h1M501 395h1M517 395h1M566 395h1M32 396h1M81 396h1M97 396h1M131 396h1M467 396h1M501 396h1M517 396h1M566 396h1M32 397h1M81 397h1M98 397h1M132 397h1M466 397h1M500 397h1M517 397h1M566 397h1M33 398h1M82 398h1M98 398h1M132 398h1M466 398h1M500 398h1M516 398h1M565 398h1M33 399h1M82 399h1M99 399h1M133 399h1M465 399h1M499 399h1M516 399h1M565 399h1M34 400h1M83 400h1M99 400h1M134 400h1M464 400h1M499 400h1M515 400h1M564 400h1M34 401h1M83 401h1M100 401h1M134 401h1M464 401h1M498 401h1M515 401h1M564 401h1M35 402h1M84 402h1M100 402h1M135 402h1M463 402h1M498 402h1M514 402h1M563 402h1M35 403h1M84 403h1M101 403h1M136 403h1M462 403h1M497 403h1M514 403h1M563 403h1M36 404h1M85 404h1M101 404h1M136 404h1M462 404h1M497 404h1M513 404h1M562 404h1M36 405h1M85 405h1M102 405h1M137 405h1M461 405h1M496 405h1M513 405h1M562 405h1M36 406h1M86 406h1M102 406h1M137 406h1M461 406h1M496 406h1M512 406h1M562 406h1M37 407h1M86 407h1M103 407h1M138 407h1M460 407h1M495 407h1M512 407h1M561 407h1M37 408h1M87 408h1M103 408h1M139 408h1M459 408h1M495 408h1M511 408h1M561 408h1M38 409h1M87 409h1M104 409h1M139 409h1M459 409h1M494 409h1M511 409h1M560 409h1M38 410h1M88 410h1M104 410h1M140 410h1M458 410h1M494 410h1M510 410h1M560 410h1M39 411h1M88 411h1M105 411h1M141 411h1M457 411h1M493 411h1M510 411h1M559 411h1M39 412h1M89 412h1M106 412h1M141 412h1M457 412h1M492 412h1M509 412h1M559 412h1M40 413h1M89 413h1M106 413h1M142 413h1M456 413h1M492 413h1M509 413h1M558 413h1M40 414h1M90 414h1M107 414h1M143 414h1M455 414h1M491 414h1M508 414h1M558 414h1M40 415h1M90 415h1M108 415h1M144 415h1M454 415h1M490 415h1M508 415h1M558 415h1M41 416h1M91 416h1M108 416h1M144 416h1M454 416h1M490 416h1M507 416h1M557 416h1M41 417h1M91 417h1M109 417h1M145 417h1M453 417h1M489 417h1M507 417h1M557 417h1M42 418h1M92 418h1M110 418h1M146 418h1M452 418h1M488 418h1M506 418h1M556 418h1M42 419h1M93 419h1M110 419h1M147 419h1M451 419h1M488 419h1M505 419h1M556 419h1M43 420h1M93 420h1M111 420h1M148 420h1M450 420h1M487 420h1M505 420h1M555 420h1M43 421h1M94 421h1M111 421h1M149 421h1M449 421h1M487 421h1M504 421h1M555 421h1M44 422h1M94 422h1M112 422h1M149 422h1M449 422h1M486 422h1M504 422h1M554 422h1M44 423h1M95 423h1M112 423h1M150 423h1M448 423h1M486 423h1M503 423h1M554 423h1M44 424h1M95 424h1M113 424h1M151 424h1M447 424h1M485 424h1M503 424h1M554 424h1M45 425h1M96 425h1M114 425h1M152 425h1M446 425h1M484 425h1M502 425h1M553 425h1M45 426h1M97 426h1M115 426h1M153 426h1M445 426h1M483 426h1M501 426h1M553 426h1M46 427h1M97 427h1M116 427h1M153 427h1M445 427h1M482 427h1M501 427h1M552 427h1M46 428h1M98 428h1M116 428h1M154 428h1M444 428h1M482 428h1M500 428h1M552 428h1M47 429h1M99 429h1M117 429h1M155 429h1M443 429h1M481 429h1M499 429h1M551 429h1M47 430h1M100 430h1M118 430h1M156 430h1M442 430h1M480 430h1M498 430h1M551 430h1M48 431h1M100 431h1M119 431h1M157 431h1M441 431h1M479 431h1M498 431h1M550 431h1M48 432h1M101 432h1M119 432h1M158 432h1M440 432h1M479 432h1M497 432h1M550 432h1M49 433h1M102 433h1M120 433h1M159 433h1M439 433h1M478 433h1M496 433h1M549 433h1M49 434h1M102 434h1M121 434h1M160 434h1M438 434h1M477 434h1M496 434h1M549 434h1M50 435h1M103 435h1M122 435h1M161 435h1M437 435h1M476 435h1M495 435h1M548 435h1M50 436h1M104 436h1M122 436h1M162 436h1M436 436h1M476 436h1M494 436h1M548 436h1M51 437h1M105 437h1M123 437h1M163 437h1M435 437h1M475 437h1M493 437h1M547 437h1M51 438h1M105 438h1M124 438h1M164 438h1M434 438h1M474 438h1M493 438h1M547 438h1M52 439h1M106 439h1M125 439h1M165 439h1M433 439h1M473 439h1M492 439h1M546 439h1M52 440h1M107 440h1M126 440h1M166 440h1M432 440h1M472 440h1M491 440h1M546 440h1M53 441h1M107 441h1M126 441h1M167 441h1M431 441h1M472 441h1M491 441h1M545 441h1M54 442h1M108 442h1M127 442h1M168 442h1M430 442h1M471 442h1M490 442h1M544 442h1M54 443h1M109 443h1M128 443h1M169 443h1M429 443h1M470 443h1M489 443h1M544 443h1M55 444h1M110 444h1M129 444h1M170 444h1M428 444h1M469 444h1M488 444h1M543 444h1M56 445h1M110 445h1M130 445h1M171 445h2M426 445h2M468 445h1M488 445h1M542 445h1M56 446h1M111 446h1M131 446h1M173 446h1M425 446h1M467 446h1M487 446h1M542 446h1M57 447h1M112 447h1M131 447h1M174 447h1M424 447h1M467 447h1M486 447h1M541 447h1M57 448h1M113 448h1M132 448h1M175 448h1M423 448h1M466 448h1M485 448h1M541 448h1M58 449h1M114 449h1M133 449h1M176 449h1M421 449h2M465 449h1M484 449h1M540 449h1M59 450h1M114 450h1M134 450h1M177 450h2M420 450h1M464 450h1M484 450h1M539 450h1M59 451h1M115 451h1M135 451h1M179 451h1M419 451h1M463 451h1M483 451h1M539 451h1M60 452h1M116 452h1M136 452h1M180 452h1M418 452h1M462 452h1M482 452h1M538 452h1M61 453h1M117 453h1M137 453h1M181 453h1M417 453h1M461 453h1M481 453h1M537 453h1M61 454h1M118 454h1M138 454h1M182 454h2M415 454h2M460 454h1M480 454h1M537 454h1M62 455h1M119 455h1M139 455h1M184 455h1M414 455h1M459 455h1M479 455h1M536 455h1M63 456h1M119 456h1M140 456h1M185 456h1M413 456h1M458 456h1M479 456h1M535 456h1M63 457h1M120 457h1M141 457h1M186 457h2M411 457h2M457 457h1M478 457h1M535 457h1M64 458h1M121 458h1M142 458h1M188 458h1M410 458h1M456 458h1M477 458h1M534 458h1M65 459h1M122 459h1M143 459h1M189 459h2M408 459h2M455 459h1M476 459h1M533 459h1M65 460h1M123 460h1M144 460h1M191 460h1M407 460h1M454 460h1M475 460h1M533 460h1M66 461h1M124 461h1M145 461h1M192 461h2M405 461h2M453 461h1M474 461h1M532 461h1M67 462h1M125 462h1M146 462h1M194 462h2M403 462h2M452 462h1M473 462h1M531 462h1M67 463h1M125 463h1M147 463h1M196 463h1M402 463h1M451 463h1M473 463h1M531 463h1M68 464h1M126 464h1M148 464h1M197 464h2M400 464h2M450 464h1M472 464h1M530 464h1M68 465h1M127 465h1M149 465h1M199 465h1M399 465h1M449 465h1M471 465h1M530 465h1M69 466h1M128 466h1M150 466h1M200 466h2M397 466h2M448 466h1M470 466h1M529 466h1M70 467h1M129 467h1M151 467h1M202 467h1M395 467h2M446 467h2M469 467h1M528 467h1M71 468h1M130 468h1M152 468h2M203 468h2M393 468h2M445 468h1M468 468h1M527 468h1M71 469h1M131 469h1M154 469h1M205 469h2M391 469h2M444 469h1M467 469h1M527 469h1M72 470h1M132 470h1M155 470h1M207 470h2M389 470h2M443 470h1M466 470h1M526 470h1M73 471h1M133 471h1M156 471h1M209 471h2M387 471h2M442 471h1M465 471h1M525 471h1M74 472h1M134 472h1M157 472h1M211 472h2M385 472h2M440 472h2M464 472h1M524 472h1M74 473h1M135 473h1M158 473h2M213 473h2M383 473h2M439 473h1M462 473h2M524 473h1M75 474h1M136 474h2M160 474h1M215 474h2M381 474h2M438 474h1M461 474h1M523 474h1M76 475h1M138 475h1M161 475h1M217 475h2M379 475h2M437 475h1M460 475h1M522 475h1M77 476h1M139 476h1M162 476h2M219 476h3M377 476h2M435 476h2M459 476h1M521 476h1M78 477h1M140 477h1M164 477h1M222 477h2M375 477h2M434 477h1M458 477h1M520 477h1M79 478h1M141 478h1M165 478h1M224 478h2M373 478h2M433 478h1M457 478h1M519 478h1M80 479h1M142 479h2M166 479h2M226 479h3M370 479h3M431 479h2M455 479h2M518 479h1M81 480h1M144 480h1M168 480h1M229 480h3M367 480h3M430 480h1M454 480h1M517 480h1M82 481h1M145 481h1M169 481h1M232 481h3M364 481h3M429 481h1M453 481h1M516 481h1M83 482h1M146 482h1M170 482h1M235 482h3M361 482h3M427 482h2M452 482h1M515 482h1M84 483h1M147 483h1M171 483h2M238 483h3M358 483h3M426 483h1M451 483h1M514 483h1M84 484h1M148 484h1M173 484h1M241 484h4M354 484h4M425 484h1M449 484h2M514 484h1M85 485h1M149 485h2M174 485h1M245 485h3M351 485h3M424 485h1M448 485h1M513 485h1M86 486h1M151 486h1M175 486h2M248 486h3M348 486h3M422 486h2M447 486h1M512 486h1M87 487h1M152 487h1M177 487h2M251 487h3M345 487h3M420 487h2M446 487h1M511 487h1M87 488h1M153 488h2M179 488h2M254 488h4M341 488h4M418 488h2M444 488h2M511 488h1M88 489h1M155 489h1M181 489h1M258 489h5M336 489h5M417 489h1M443 489h1M510 489h1M89 490h1M156 490h1M182 490h2M263 490h6M329 490h7M415 490h2M442 490h1M509 490h1M90 491h1M157 491h2M184 491h1M269 491h7M323 491h6M414 491h1M440 491h2M508 491h1M91 492h1M159 492h1M185 492h2M276 492h7M316 492h7M412 492h2M439 492h1M507 492h1M92 493h1M160 493h2M187 493h1M283 493h33M411 493h1M437 493h2M506 493h1M93 494h1M162 494h1M188 494h2M409 494h2M436 494h1M505 494h1M94 495h1M163 495h1M190 495h2M407 495h2M435 495h1M504 495h1M95 496h1M164 496h2M192 496h2M405 496h2M433 496h2M503 496h1M96 497h1M166 497h1M194 497h2M403 497h2M432 497h1M502 497h1M97 498h1M167 498h2M196 498h2M401 498h2M430 498h2M501 498h1M98 499h1M169 499h1M198 499h2M399 499h2M429 499h1M500 499h1M99 500h1M170 500h1M200 500h2M397 500h2M428 500h1M499 500h1M100 501h1M171 501h2M202 501h2M395 501h2M426 501h2M498 501h1M101 502h1M173 502h1M204 502h2M393 502h2M425 502h1M497 502h1M102 503h1M174 503h2M206 503h2M391 503h2M423 503h2M496 503h1M103 504h1M176 504h2M208 504h2M389 504h2M421 504h2M495 504h1M104 505h1M178 505h2M210 505h2M387 505h2M419 505h2M494 505h1M105 506h1M180 506h1M212 506h2M385 506h2M418 506h1M493 506h1M106 507h1M181 507h2M214 507h3M381 507h4M416 507h2M492 507h1M107 508h1M183 508h2M217 508h4M377 508h4M414 508h2M491 508h1M108 509h1M185 509h2M221 509h4M374 509h3M412 509h2M490 509h1M109 510h1M187 510h1M225 510h2M372 510h2M410 510h2M489 510h1M110 511h1M188 511h2M227 511h2M370 511h2M408 511h2M487 511h2M111 512h2M190 512h2M229 512h3M366 512h4M406 512h2M486 512h1M113 513h1M192 513h2M232 513h4M362 513h4M404 513h2M485 513h1M114 514h1M194 514h3M236 514h4M359 514h3M402 514h2M483 514h2M115 515h2M197 515h2M240 515h4M355 515h4M400 515h2M482 515h1M117 516h1M199 516h2M244 516h3M351 516h4M398 516h2M481 516h1M118 517h1M201 517h2M247 517h4M347 517h4M395 517h3M480 517h1M119 518h1M203 518h2M251 518h4M343 518h4M393 518h2M479 518h1M120 519h1M205 519h2M255 519h4M339 519h4M391 519h2M478 519h1M121 520h1M207 520h2M259 520h6M334 520h5M389 520h2M477 520h1M122 521h1M209 521h3M265 521h7M326 521h8M387 521h2M476 521h1M123 522h1M212 522h2M272 522h16M310 522h16M384 522h3M475 522h1M124 523h1M214 523h3M288 523h22M382 523h2M474 523h1M125 524h1M217 524h3M379 524h3M472 524h2M126 525h2M220 525h4M375 525h4M471 525h1M128 526h1M224 526h3M372 526h3M470 526h1M129 527h1M227 527h2M369 527h3M468 527h2M130 528h2M229 528h3M367 528h2M467 528h1M132 529h1M232 529h4M363 529h4M466 529h1M133 530h2M236 530h4M359 530h4M464 530h2M135 531h1M240 531h4M354 531h5M462 531h2M136 532h2M244 532h4M350 532h4M461 532h1M138 533h2M248 533h6M344 533h6M459 533h2M140 534h1M254 534h6M338 534h6M458 534h1M141 535h2M260 535h4M334 535h4M456 535h2M143 536h1M264 536h6M328 536h6M455 536h1M144 537h2M270 537h17M311 537h17M453 537h2M146 538h1M287 538h24M452 538h1M147 539h2M450 539h2M149 540h1M449 540h1M150 541h2M447 541h2M152 542h1M445 542h2M153 543h2M444 543h1M155 544h2M442 544h2M157 545h1M441 545h1M158 546h2M439 546h2M160 547h2M437 547h2M162 548h2M435 548h2M164 549h2M433 549h2M166 550h2M431 550h2M168 551h2M429 551h2M170 552h2M427 552h2M172 553h2M425 553h2M174 554h3M422 554h3M177 555h2M420 555h2M179 556h2M418 556h2M181 557h2M416 557h2M183 558h3M413 558h3M186 559h2M411 559h2M188 560h2M409 560h2M190 561h2M407 561h2M192 562h3M404 562h3M195 563h2M402 563h2M197 564h2M400 564h2M199 565h2M398 565h2M201 566h3M395 566h3M204 567h3M391 567h4M207 568h4M388 568h3M211 569h3M385 569h3M214 570h3M382 570h3M217 571h3M379 571h3M220 572h3M376 572h3M223 573h3M372 573h4M226 574h4M369 574h3M230 575h4M365 575h4M234 576h4M361 576h4M238 577h5M356 577h5M243 578h5M351 578h5M248 579h7M343 579h8M255 580h10M333 580h10M265 581h10M323 581h10M275 582h10M313 582h10M285 583h28"/>
<path id="div1" stroke="#ffffff" d="M75 299h30M394 519h1M394 520h1M395 521h1M395 522h1M396 523h1M396 524h1M397 525h1M397 526h1M397 527h1M398 528h1M398 529h1M399 530h1M399 531h1M400 532h1M400 533h1M400 534h1M401 535h1M401 536h1M402 537h1M402 538h1M403 539h1M403 540h1M403 541h1M404 542h1M404 543h1M405 544h1M405 545h1M405 546h1M406 547h1M406 548h1M407 549h1M407 550h1M408 551h1M408 552h1M408 553h1M409 554h1M409 555h1M410 556h1M410 557h1M411 558h1M411 559h1"/>
<path id="sign1" stroke="#ff0000" d="M456 496h3M466 496h3M455 497h1M459 497h1M465 497h1M469 497h1M454 498h1M460 498h1M464 498h1M470 498h1M454 499h1M460 499h1M464 499h1M470 499h1M454 500h1M460 500h1M464 500h1M470 500h1M455 501h1M461 501h1M463 501h1M469 501h1M456 502h1M461 502h1M463 502h1M468 502h1M461 503h1M463 503h1M461 504h1M463 504h1M462 505h1M462 506h1M462 507h1M462 508h1M462 509h1M462 510h1M462 511h1M462 512h1"/>
<path id="div2" stroke="#ffffff" d="M131 397h1M129 398h2M127 399h2M126 400h1M124 401h2M122 402h2M121 403h1M119 404h2M117 405h2M116 406h1M114 407h2M112 408h2M111 409h1M109 410h2M107 411h2M106 412h1M492 442h1M493 443h1M494 444h2M496 445h1M497 446h1M498 447h2M500 448h1M501 449h1M502 450h2M504 451h1M505 452h1M506 453h2M508 454h1M509 455h1M510 456h1M511 457h2M513 458h1M514 459h1M515 460h2M517 461h1M518 462h1M519 463h2M521 464h1M522 465h1M523 466h2M525 467h1M526 468h1"/>
<path id="spoke2" stroke="#7f7f7f" d="M299 299h1M297 300h1M295 301h1M293 303h1M291 304h1M289 305h1M287 306h1M285 307h1M283 308h1M281 310h1M279 311h1M277 312h1M275 313h1M273 314h1M271 315h1M269 317h1M267 318h1M265 319h1M263 320h1M261 321h1M259 322h1M257 324h1M255 325h1M253 326h1M251 327h1M249 328h1M247 330h1M245 331h1M243 332h1M241 333h1M239 334h1M237 335h1M235 337h1M233 338h1M231 339h1M229 340h1M227 341h1M225 342h1M223 344h1M221 345h1M219 346h1M217 347h1M215 348h1M213 349h1M211 351h1M209 352h1M207 353h1M205 354h1M203 355h1M201 357h1M199 358h1M197 359h1M195 360h1M193 361h1M191 362h1M189 364h1M187 365h1M185 366h1M183 367h1M181 368h1M179 369h1M177 371h1M175 372h1M173 373h1M171 374h1M169 375h1M167 376h1M165 378h1M163 379h1M161 380h1M159 381h1M157 382h1M155 384h1M153 385h1M151 386h1M149 387h1M147 388h1M145 389h1M143 391h1M141 392h1M139 393h1M137 394h1M135 395h1M133 396h1"/>
<path id="sign2" stroke="#ffff00" d="M537 387h1M549 387h1M538 388h1M548 388h1M538 389h1M548 389h1M539 390h2M546 390h2M541 391h5M539 392h2M546 392h2M538 393h1M548 393h1M538 394h1M548 394h1M537 395h1M549 395h1M537 396h1M549 396h1M537 397h1M549 397h1M537 398h1M549 398h1M537 399h1M549 399h1M538 400h1M548 400h1M538 401h1M548 401h1M539 402h2M546 402h2M541 403h5"/>
<path id="div3" stroke="#ffffff" d="M537 326h5M542 327h8M550 328h9M559 329h9M568 330h8M576 331h5M212 473h1M211 474h1M211 475h1M210 476h1M210 477h1M209 478h1M209 479h1M208 480h1M208 481h1M207 482h1M207 483h1M206 484h1M206 485h1M205 486h1M205 487h1M204 488h1M204 489h1M203 490h1M203 491h1M202 492h1M202 493h1M201 494h1M201 495h1M200 496h1M200 497h1M199 498h1M199 499h1"/>
<path id="spoke3" stroke="#7f7f7f" d="M299 299h1M298 301h1M297 303h1M296 305h1M295 307h1M294 309h1M293 311h1M292 313h1M291 315h1M290 317h1M289 319h1M288 321h1M287 323h1M286 325h1M285 327h1M284 329h1M283 331h1M282 333h1M281 335h1M280 337h1M279 339h1M278 341h1M277 343h1M276 345h1M275 347h1M274 349h1M273 351h1M272 353h1M271 355h1M270 357h1M269 359h1M268 361h1M267 363h1M266 365h1M265 367h1M264 369h1M263 371h1M262 373h1M261 375h1M260 377h1M259 379h1M258 381h1M257 383h1M256 385h1M255 387h1M254 389h1M253 391h1M252 393h1M251 395h1M250 397h1M249 399h1M248 401h1M247 403h1M246 405h1M245 407h1M244 409h1M243 411h1M242 413h1M241 415h1M240 417h1M239 419h1M238 421h1M237 423h1M236 425h1M235 427h1M234 429h1M233 431h1M232 433h1M231 435h1M230 437h1M229 439h1M228 441h1M227 443h1M226 445h1M225 447h1M224 449h1M223 451h1M222 453h1M221 455h1M220 457h1M219 459h1M218 461h1M217 463h1M216 465h1M215 467h1M214 469h1M213 471h1"/>
<path id="sign3" stroke="#00ff00" d="M553 253h1M567 253h1M554 254h1M566 254h1M555 255h11M557 256h1M563 256h1M557 257h1M563 257h1M557 258h1M563 258h1M557 259h1M563 259h1M557 260h1M563 260h1M557 261h1M563 261h1M557 262h1M563 262h1M557 263h1M563 263h1M557 264h1M563 264h1M557 265h1M563 265h1M557 266h1M563 266h1M555 267h11M554 268h1M566 268h1M553 269h1M567 269h1"/>
<path id="div4" stroke="#ffffff" d="M558 187h2M556 188h2M554 189h2M551 190h3M549 191h2M547 192h2M544 193h3M542 194h2M539 195h3M537 196h2M535 197h2M532 198h3M530 199h2M528 200h2M525 201h3M523 202h2M521 203h2M519 204h2M324 492h1M324 493h1M324 494h1M324 495h1M324 496h1M325 497h1M325 498h1M325 499h1M325 500h1M325 501h1M325 502h1M325 503h1M325 504h1M325 505h1M325 506h1M326 507h1M326 508h1M326 509h1M326 510h1M326 511h1M326 512h1M326 513h1M326 514h1M326 515h1M326 516h1M327 517h1M327 518h1M327 519h1M327 520h1M327 521h1"/>
<path id="sign4" stroke="#0000ff" d="M502 129h5M499 130h3M507 130h1M498 131h1M508 131h3M497 132h1M507 132h1M511 132h1M496 133h1M506 133h1M512 133h1M506 134h1M512 134h1M498 135h3M506 135h1M512 135h1M497 136h1M501 136h1M507 136h1M511 136h1M496 137h1M502 137h1M508 137h3M496 138h1M502 138h1M496 139h1M502 139h1M512 139h1M497 140h1M501 140h1M511 140h1M498 141h3M510 141h1M501 142h1M507 142h3M502 143h5"/>
<path id="div5" stroke="#ffffff" d="M468 72h1M467 73h1M466 74h1M466 75h1M465 76h1M464 77h1M463 78h1M463 79h1M462 80h1M461 81h1M460 82h1M460 83h1M459 84h1M458 85h1M457 86h1M457 87h1M456 88h1M455 89h1M454 90h1M453 91h1M453 92h1M452 93h1M451 94h1M450 95h1M450 96h1M449 97h1M448 98h1M447 99h1M447 100h1M446 101h1M445 102h1M444 103h1M444 104h1M443 105h1M442 106h1M421 450h1M422 451h1M423 452h1M423 453h1M424 454h1M425 455h1M426 456h1M426 457h1M427 458h1M428 459h1M429 460h1M430 461h1M430 462h1M431 463h1M432 464h1M433 465h1M434 466h1M434 467h1M435 468h1M436 469h1M437 470h1M437 471h1M438 472h1M439 473h1"/>
<path id="spoke5" stroke="#7f7f7f" d="M299 299h1M301 301h1M302 303h1M304 305h1M306 307h1M307 309h1M309 311h1M310 313h1M312 315h1M314 317h1M315 319h1M317 321h1M319 323h1M320 325h1M322 327h1M323 329h1M325 331h1M327 333h1M328 335h1M330 337h1M332 339h1M333 341h1M335 343h1M336 345h1M338 347h1M340 349h1M341 351h1M343 353h1M345 355h1M346 357h1M348 359h1M349 361h1M351 363h1M353 365h1M354 367h1M356 369h1M358 371h1M359 373h1M361 375h1M362 377h1M364 379h1M366 381h1M367 383h1M369 385h1M371 387h1M372 389h1M374 391h1M375 393h1M377 395h1M379 397h1M380 399h1M382 401h1M384 403h1M385 405h1M387 407h1M388 409h1M390 411h1M392 413h1M393 415h1M395 417h1M397 419h1M398 421h1M400 423h1M401 425h1M403 427h1M405 429h1M406 431h1M408 433h1M410 435h1M411 437h1M413 439h1M414 441h1M416 443h1M418 445h1M419 447h1M421 449h1"/>
<path id="sign5" stroke="#ff0000" d="M393 47h5M392 48h1M398 48h1M391 49h1M399 49h1M390 50h1M400 50h1M389 51h1M401 51h1M389 52h1M401 52h1M389 53h1M401 53h1M389 54h1M401 54h1M389 55h1M401 55h1M390 56h1M400 56h1M391 57h1M399 57h1M391 58h1M399 58h1M387 59h1M391 59h1M399 59h1M388 60h1M390 60h1M400 60h1M389 61h1M401 61h1M402 62h1M403 63h1"/>
<path id="div6" stroke="#ffffff" d="M331 18h1M331 19h1M331 20h1M331 21h1M331 22h1M330 23h1M330 24h1M330 25h1M330 26h1M330 27h1M330 28h1M330 29h1M330 30h1M329 31h1M329 32h1M329 33h1M329 34h1M329 35h1M329 36h1M329 37h1M329 38h1M329 39h1M328 40h1M328 41h1M328 42h1M328 43h1M328 44h1M328 45h1M328 46h1M328 47h1M328 48h1M327 49h1M327 50h1M327 51h1M327 52h1M327 53h1M327 54h1M327 55h1M327 56h1M326 57h1M326 58h1M326 59h1M326 60h1M326 61h1M477 378h2M479 379h2M481 380h2M483 381h3M486 382h2M488 383h2M490 384h3M493 385h2M495 386h3M498 387h2M500 388h2M502 389h2"/>
<path id="spoke6" stroke="#7f7f7f" d="M299 299h1M301 300h1M303 301h1M305 302h1M307 303h1M309 303h1M311 304h1M313 305h1M315 306h1M317 307h1M319 308h1M321 309h1M323 310h1M325 310h1M327 311h1M329 312h1M331 313h1M333 314h1M335 315h1M337 316h1M339 317h1M341 318h1M343 318h1M345 319h1M347 320h1M349 321h1M351 322h1M353 323h1M355 324h1M357 325h1M359 325h1M361 326h1M363 327h1M365 328h1M367 329h1M369 330h1M371 331h1M373 332h1M375 332h1M377 333h1M379 334h1M381 335h1M383 336h1M385 337h1M387 338h1M389 339h1M391 340h1M393 340h1M395 341h1M397 342h1M399 343h1M401 344h1M403 345h1M405 346h1M407 347h1M409 347h1M411 348h1M413 349h1M415 350h1M417 351h1M419 352h1M421 353h1M423 354h1M425 355h1M427 355h1M429 356h1M431 357h1M433 358h1M435 359h1M437 360h1M439 361h1M441 362h1M443 362h1M445 363h1M447 364h1M449 365h1M451 366h1M453 367h1M455 368h1M457 369h1M459 370h1M461 370h1M463 371h1M465 372h1M467 373h1M469 374h1M471 375h1M473 376h1M475 377h1"/>
<path id="sign6" stroke="#ffff00" d="M253 31h1M257 31h1M261 31h1M254 32h1M256 32h1M258 32h1M260 32h1M262 32h1M255 33h1M259 33h1M263 33h1M267 33h1M255 34h1M259 34h1M263 34h1M266 34h2M255 35h1M259 35h1M263 35h1M265 35h1M267 35h1M255 36h1M259 36h1M263 36h2M267 36h1M255 37h1M259 37h1M263 37h1M267 37h1M255 38h1M259 38h1M263 38h1M267 38h1M255 39h1M259 39h1M263 39h1M267 39h1M255 40h1M259 40h1M263 40h1M267 40h1M255 41h1M259 41h1M263 41h1M267 41h1M255 42h1M259 42h1M263 42h1M267 42h1M255 43h1M259 43h1M263 43h1M267 43h1M255 44h1M259 44h1M264 44h1M266 44h1M255 45h1M259 45h1M265 45h1M264 46h1M266 46h1M263 47h1M267 47h1"/>
<path id="div7" stroke="#ffffff" d="M187 39h1M187 40h1M188 41h1M188 42h1M189 43h1M189 44h1M190 45h1M190 46h1M190 47h1M191 48h1M191 49h1M192 50h1M192 51h1M193 52h1M193 53h1M193 54h1M194 55h1M194 56h1M195 57h1M195 58h1M196 59h1M196 60h1M196 61h1M197 62h1M197 63h1M198 64h1M198 65h1M198 66h1M199 67h1M199 68h1M200 69h1M200 70h1M201 71h1M201 72h1M201 73h1M202 74h1M202 75h1M203 76h1M203 77h1M204 78h1M204 79h1M494 299h30"/>
<path id="sign7" stroke="#00ff00" d="M134 90h5M133 91h1M139 91h1M132 92h1M140 92h1M132 93h1M140 93h1M132 94h1M140 94h1M133 95h1M139 95h1M128 96h7M138 96h7M128 100h17"/>
<path id="div8" stroke="#ffffff" d="M72 130h1M73 131h1M74 132h2M76 133h1M77 134h1M78 135h2M80 136h1M81 137h1M82 138h2M84 139h1M85 140h1M86 141h2M88 142h1M89 143h1M90 144h1M91 145h2M93 146h1M94 147h1M95 148h2M97 149h1M98 150h1M99 151h2M101 152h1M102 153h1M103 154h2M105 155h1M106 156h1M492 186h1M490 187h2M488 188h2M487 189h1M485 190h2M483 191h2M482 192h1M480 193h2M478 194h2M477 195h1M475 196h2M473 197h2M472 198h1M470 199h2M468 200h2M467 201h1"/>
<path id="spoke8" stroke="#7f7f7f" d="M465 202h1M463 203h1M461 204h1M459 205h1M457 206h1M455 207h1M453 209h1M451 210h1M449 211h1M447 212h1M445 213h1M443 214h1M441 216h1M439 217h1M437 218h1M435 219h1M433 220h1M431 222h1M429 223h1M427 224h1M425 225h1M423 226h1M421 227h1M419 229h1M417 230h1M415 231h1M413 232h1M411 233h1M409 234h1M407 236h1M405 237h1M403 238h1M401 239h1M399 240h1M397 241h1M395 243h1M393 244h1M391 245h1M389 246h1M387 247h1M385 249h1M383 250h1M381 251h1M379 252h1M377 253h1M375 254h1M373 256h1M371 257h1M369 258h1M367 259h1M365 260h1M363 261h1M361 263h1M359 264h1M357 265h1M355 266h1M353 267h1M351 268h1M349 270h1M347 271h1M345 272h1M343 273h1M341 274h1M339 276h1M337 277h1M335 278h1M333 279h1M331 280h1M329 281h1M327 283h1M325 284h1M323 285h1M321 286h1M319 287h1M317 288h1M315 290h1M313 291h1M311 292h1M309 293h1M307 294h1M305 295h1M303 297h1M301 298h1M299 299h1"/>
<path id="sign8" stroke="#0000ff" d="M47 195h1M51 195h1M55 195h1M48 196h1M50 196h1M52 196h1M54 196h1M56 196h1M49 197h1M53 197h1M57 197h1M49 198h1M53 198h1M57 198h1M49 199h1M53 199h1M57 199h1M49 200h1M53 200h1M57 200h1M49 201h1M53 201h1M57 201h1M49 202h1M53 202h1M57 202h1M49 203h1M53 203h1M57 203h1M49 204h1M53 204h1M57 204h1M49 205h1M53 205h1M57 205h1M49 206h1M53 206h1M57 206h1M62 206h1M49 207h1M53 207h1M57 207h1M61 207h3M49 208h1M53 208h1M57 208h1M62 208h1M49 209h1M53 209h1M57 209h1M62 209h1M58 210h1M61 210h1M59 211h2"/>
<path id="div9" stroke="#ffffff" d="M399 99h1M398 100h1M398 101h1M397 102h1M397 103h1M396 104h1M396 105h1M395 106h1M395 107h1M394 108h1M394 109h1M393 110h1M393 111h1M392 112h1M392 113h1M391 114h1M391 115h1M390 116h1M390 117h1M389 118h1M389 119h1M388 120h1M388 121h1M387 122h1M387 123h1M386 124h1M386 125h1M18 267h5M23 268h8M31 269h9M40 270h9M49 271h8M57 272h5"/>
<path id="spoke9" stroke="#7f7f7f" d="M385 127h1M384 129h1M383 131h1M382 133h1M381 135h1M380 137h1M379 139h1M378 141h1M377 143h1M376 145h1M375 147h1M374 149h1M373 151h1M372 153h1M371 155h1M370 157h1M369 159h1M368 161h1M367 163h1M366 165h1M365 167h1M364 169h1M363 171h1M362 173h1M361 175h1M360 177h1M359 179h1M358 181h1M357 183h1M356 185h1M355 187h1M354 189h1M353 191h1M352 193h1M351 195h1M350 197h1M349 199h1M348 201h1M347 203h1M346 205h1M345 207h1M344 209h1M343 211h1M342 213h1M341 215h1M340 217h1M339 219h1M338 221h1M337 223h1M336 225h1M335 227h1M334 229h1M333 231h1M332 233h1M331 235h1M330 237h1M329 239h1M328 241h1M327 243h1M326 245h1M325 247h1M324 249h1M323 251h1M322 253h1M321 255h1M320 257h1M319 259h1M318 261h1M317 263h1M316 265h1M315 267h1M314 269h1M313 271h1M312 273h1M311 275h1M310 277h1M309 279h1M308 281h1M307 283h1M306 285h1M305 287h1M304 289h1M303 291h1M302 293h1M301 295h1M300 297h1M299 299h1"/>
<path id="sign9" stroke="#ff0000" d="M43 329h5M46 330h2M45 331h1M47 331h1M44 332h1M47 332h1M43 333h1M47 333h1M42 334h1M33 335h1M41 335h1M34 336h1M40 336h1M35 337h1M39 337h1M36 338h1M38 338h1M37 339h1M36 340h1M38 340h1M35 341h1M39 341h1M34 342h1M40 342h1M33 343h1M41 343h1M32 344h1M31 345h1"/>
<path id="div10" stroke="#ffffff" d="M271 77h1M271 78h1M271 79h1M271 80h1M271 81h1M272 82h1M272 83h1M272 84h1M272 85h1M272 86h1M272 87h1M272 88h1M272 89h1M272 90h1M272 91h1M273 92h1M273 93h1M273 94h1M273 95h1M273 96h1M273 97h1M273 98h1M273 99h1M273 100h1M273 101h1M274 102h1M274 103h1M274 104h1M274 105h1M274 106h1M78 394h2M76 395h2M74 396h2M71 397h3M69 398h2M67 399h2M64 400h3M62 401h2M59 402h3M57 403h2M55 404h2M52 405h3M50 406h2M48 407h2M45 408h3M43 409h2M41 410h2M39 411h2"/>
<path id="sign10" stroke="#ffff00" d="M88 454h1M94 454h1M98 454h3M87 455h2M94 455h2M97 455h1M101 455h1M86 456h1M88 456h1M94 456h1M96 456h1M102 456h1M88 457h1M93 457h1M95 457h1M102 457h1M88 458h1M92 458h1M96 458h1M102 458h1M88 459h1M92 459h1M97 459h1M101 459h1M88 460h1M92 460h1M98 460h1M100 460h1M88 461h1M92 461h1M99 461h1M88 462h1M92 462h1M100 462h1M89 463h1M91 463h1M101 463h1M90 464h1M102 464h1M90 465h1M102 465h1M90 466h1M102 466h1M90 467h1M102 467h1M90 468h1M102 468h1M101 469h1M100 470h1"/>
<path id="div11" stroke="#ffffff" d="M159 125h1M160 126h1M161 127h1M161 128h1M162 129h1M163 130h1M164 131h1M164 132h1M165 133h1M166 134h1M167 135h1M168 136h1M168 137h1M169 138h1M170 139h1M171 140h1M172 141h1M172 142h1M173 143h1M174 144h1M175 145h1M175 146h1M176 147h1M177 148h1M156 492h1M155 493h1M154 494h1M154 495h1M153 496h1M152 497h1M151 498h1M151 499h1M150 500h1M149 501h1M148 502h1M148 503h1M147 504h1M146 505h1M145 506h1M145 507h1M144 508h1M143 509h1M142 510h1M141 511h1M141 512h1M140 513h1M139 514h1M138 515h1M138 516h1M137 517h1M136 518h1M135 519h1M135 520h1M134 521h1M133 522h1M132 523h1M132 524h1M131 525h1M130 526h1"/>
<path id="spoke11" stroke="#7f7f7f" d="M177 149h1M179 151h1M180 153h1M182 155h1M184 157h1M185 159h1M187 161h1M188 163h1M190 165h1M192 167h1M193 169h1M195 171h1M197 173h1M198 175h1M200 177h1M201 179h1M203 181h1M205 183h1M206 185h1M208 187h1M210 189h1M211 191h1M213 193h1M214 195h1M216 197h1M218 199h1M219 201h1M221 203h1M223 205h1M224 207h1M226 209h1M227 211h1M229 213h1M231 215h1M232 217h1M234 219h1M236 221h1M237 223h1M239 225h1M240 227h1M242 229h1M244 231h1M245 233h1M247 235h1M249 237h1M250 239h1M252 241h1M253 243h1M255 245h1M257 247h1M258 249h1M260 251h1M262 253h1M263 255h1M265 257h1M266 259h1M268 261h1M270 263h1M271 265h1M273 267h1M275 269h1M276 271h1M278 273h1M279 275h1M281 277h1M283 279h1M284 281h1M286 283h1M288 285h1M289 287h1M291 289h1M292 291h1M294 293h1M296 295h1M297 297h1M299 299h1"/>
<path id="sign11" stroke="#00ff00" d="M199 535h1M205 535h1M211 535h1M198 536h2M204 536h2M210 536h1M198 537h1M200 537h1M204 537h1M206 537h1M210 537h1M197 538h1M200 538h1M203 538h1M206 538h1M209 538h1M196 539h1M200 539h1M202 539h1M206 539h1M208 539h1M196 540h1M201 540h2M207 540h2M195 541h1M201 541h1M207 541h1M199 545h1M205 545h1M211 545h1M198 546h2M204 546h2M210 546h1M198 547h1M200 547h1M204 547h1M206 547h1M210 547h1M197 548h1M200 548h1M203 548h1M206 548h1M209 548h1M196 549h1M200 549h1M202 549h1M206 549h1M208 549h1M196 550h1M201 550h2M207 550h2M195 551h1M201 551h1M207 551h1"/>
<path id="div12" stroke="#ffffff" d="M95 209h2M97 210h2M99 211h2M101 212h3M104 213h2M106 214h2M108 215h3M111 216h2M113 217h3M116 218h2M118 219h2M120 220h2M272 537h1M272 538h1M272 539h1M272 540h1M272 541h1M271 542h1M271 543h1M271 544h1M271 545h1M271 546h1M271 547h1M271 548h1M271 549h1M270 550h1M270 551h1M270 552h1M270 553h1M270 554h1M270 555h1M270 556h1M270 557h1M270 558h1M269 559h1M269 560h1M269 561h1M269 562h1M269 563h1M269 564h1M269 565h1M269 566h1M269 567h1M268 568h1M268 569h1M268 570h1M268 571h1M268 572h1M268 573h1M268 574h1M268 575h1M267 576h1M267 577h1M267 578h1M267 579h1M267 580h1"/>
<path id="spoke12" stroke="#7f7f7f" d="M123 221h1M125 222h1M127 223h1M129 224h1M131 225h1M133 226h1M135 227h1M137 228h1M139 228h1M141 229h1M143 230h1M145 231h1M147 232h1M149 233h1M151 234h1M153 235h1M155 236h1M157 236h1M159 237h1M161 238h1M163 239h1M165 240h1M167 241h1M169 242h1M171 243h1M173 243h1M175 244h1M177 245h1M179 246h1M181 247h1M183 248h1M185 249h1M187 250h1M189 251h1M191 251h1M193 252h1M195 253h1M197 254h1M199 255h1M201 256h1M203 257h1M205 258h1M207 258h1M209 259h1M211 260h1M213 261h1M215 262h1M217 263h1M219 264h1M221 265h1M223 266h1M225 266h1M227 267h1M229 268h1M231 269h1M233 270h1M235 271h1M237 272h1M239 273h1M241 273h1M243 274h1M245 275h1M247 276h1M249 277h1M251 278h1M253 279h1M255 280h1M257 280h1M259 281h1M261 282h1M263 283h1M265 284h1M267 285h1M269 286h1M271 287h1M273 288h1M275 288h1M277 289h1M279 290h1M281 291h1M283 292h1M285 293h1M287 294h1M289 295h1M291 295h1M293 296h1M295 297h1M297 298h1M299 299h1"/>
<path id="sign12" stroke="#0000ff" d="M329 551h1M345 551h1M330 552h1M344 552h1M331 553h1M343 553h1M332 554h1M342 554h1M332 555h1M342 555h1M333 556h1M341 556h1M333 557h1M341 557h1M333 558h1M341 558h1M329 559h17M333 560h1M341 560h1M333 561h1M341 561h1M333 562h1M341 562h1M332 563h1M342 563h1M332 564h1M342 564h1M331 565h1M343 565h1M330 566h1M344 566h1M329 567h1M345 567h1"/>
<path id="lead_MC" stroke="#ffffff" d="M278 133h1M278 134h1M278 135h1M278 136h1M278 137h1M278 138h1M279 139h1M279 140h1M279 141h1M279 142h1M279 143h1M279 144h1M279 145h1"/>
<path id="obj_MC" stroke="#ffff00" d="M280 151h1"/>
<path id="lead_Asc" stroke="#ffffff" d="M131 299h13"/>
<path id="obj_Asc" stroke="#ff0000" d="M149 299h1"/>
<path id="lead_Node" stroke="#7f7f7f" d="M152 352h2M149 353h3M146 354h3M143 355h3M141 356h2"/>
<path id="obj_Node" stroke="#007f7f" d="M158 350h1M128 352h5M127 353h1M133 353h1M126 354h1M134 354h1M125 355h1M135 355h1M124 356h1M136 356h1M124 357h1M136 357h1M124 358h1M136 358h1M124 359h1M136 359h1M124 360h1M136 360h1M125 361h1M135 361h1M126 362h1M134 362h1M126 363h1M134 363h1M124 364h3M134 364h3M123 365h1M126 365h1M134 365h1M137 365h1M122 366h1M126 366h1M134 366h1M138 366h1M123 367h1M125 367h1M135 367h1M137 367h1M124 368h1M136 368h1"/>
<path id="lead_Plut" stroke="#7f7f7f" d="M165 379h1M163 380h2M161 381h2M160 382h1M158 383h2M156 384h2M155 385h1"/>
<path id="obj_Plut" stroke="#0000ff" d="M171 376h1M139 383h1M144 383h3M151 383h1M139 384h1M143 384h1M147 384h1M151 384h1M139 385h1M143 385h1M147 385h1M151 385h1M139 386h1M143 386h1M147 386h1M151 386h1M139 387h1M144 387h3M151 387h1M140 388h1M150 388h1M140 389h1M150 389h1M141 390h2M148 390h2M143 391h5M145 392h1M145 393h1M145 394h1M141 395h9M145 396h1M145 397h1M145 398h1M145 399h1"/>
<path id="lead_Nept" stroke="#ffffff" d="M283 454h1M283 455h1M283 456h1M283 457h1M283 458h1M283 459h1M282 460h1M282 461h1M282 462h1M282 463h1M282 464h1M282 465h1M282 466h1"/>
<path id="obj_Nept" stroke="#0000ff" d="M283 448h1M274 470h1M280 470h1M286 470h1M274 471h1M280 471h1M286 471h1M273 472h3M278 472h5M285 472h3M274 473h1M280 473h1M286 473h1M274 474h1M280 474h1M286 474h1M275 475h1M280 475h1M285 475h1M275 476h1M280 476h1M285 476h1M276 477h2M280 477h1M283 477h2M278 478h5M280 479h1M280 480h1M280 481h1M276 482h9M280 483h1M280 484h1M280 485h1M280 486h1"/>
<path id="lead_Uran" stroke="#ffffff" d="M366 439h1M367 440h1M368 441h1M369 442h1M370 443h1M371 444h1M371 445h1M372 446h1M373 447h1M374 448h1M375 449h1"/>
<path id="obj_Uran" stroke="#00ff00" d="M364 434h1M374 451h1M386 451h1M375 452h1M385 452h1M376 453h1M384 453h1M376 454h1M384 454h1M376 455h1M380 455h1M384 455h1M376 456h1M380 456h1M384 456h1M376 457h9M376 458h1M380 458h1M384 458h1M376 459h1M380 459h1M384 459h1M375 460h1M380 460h1M385 460h1M374 461h1M380 461h1M386 461h1M380 462h1M379 463h3M378 464h1M382 464h1M378 465h1M382 465h1M378 466h1M382 466h1M379 467h3"/>
<path id="lead_Satu" stroke="#7f7f7f" d="M201 163h1M202 164h1M202 165h1M203 166h1M204 167h1M205 168h1M205 169h1M206 170h1M207 171h1M207 172h1M208 173h1"/>
<path id="obj_Satu" stroke="#ffff00" d="M192 145h1M192 146h1M188 147h9M192 148h1M192 149h1M192 150h1M192 151h1M196 151h3M192 152h1M195 152h1M199 152h1M192 153h3M200 153h1M192 154h1M200 154h1M192 155h1M200 155h1M192 156h1M199 156h1M192 157h1M198 157h1M192 158h1M198 158h1M192 159h1M198 159h1M199 160h1M200 161h1M211 178h1"/>
<path id="lead_Jupi" stroke="#ffffff" d="M406 412h1M407 413h2M409 414h2M411 415h2M413 416h2M415 417h2M417 418h1"/>
<path id="obj_Jupi" stroke="#ff0000" d="M402 408h1M432 418h1M431 419h1M421 420h2M430 420h1M423 421h1M430 421h1M424 422h1M430 422h1M424 423h1M430 423h1M424 424h1M430 424h1M423 425h1M430 425h1M423 426h1M430 426h1M422 427h1M430 427h1M422 428h1M430 428h1M421 429h1M430 429h1M421 430h1M430 430h1M420 431h1M430 431h1M420 432h15M430 433h1M430 434h1"/>
<path id="lead_Mars" stroke="#ffffff" d="M396 421h1M397 422h1M398 423h1M399 424h1M400 425h1M401 426h1M402 427h1M403 428h1M404 429h1"/>
<path id="obj_Mars" stroke="#ff0000" d="M392 416h1M415 431h6M419 432h2M418 433h1M420 433h1M417 434h1M420 434h1M416 435h1M420 435h1M415 436h1M420 436h1M407 437h5M414 437h1M406 438h1M412 438h2M405 439h1M413 439h1M404 440h1M414 440h1M404 441h1M414 441h1M404 442h1M414 442h1M404 443h1M414 443h1M404 444h1M414 444h1M405 445h1M413 445h1M406 446h1M412 446h1M407 447h5"/>
<path id="lead_Venu" stroke="#ffffff" d="M362 441h1M362 442h1M361 443h1M361 444h1M361 445h1M361 446h1M360 447h1M360 448h1M360 449h1M360 450h1M359 451h1M359 452h1M359 453h1M359 454h1M358 455h1M358 456h1"/>
<path id="obj_Venu" stroke="#00ff00" d="M359 436h1M361 459h5M360 460h1M366 460h1M359 461h1M367 461h1M359 462h1M367 462h1M359 463h1M367 463h1M359 464h1M367 464h1M359 465h1M367 465h1M360 466h1M366 466h1M361 467h5M363 468h1M363 469h1M363 470h1M359 471h9M363 472h1M363 473h1M363 474h1M363 475h1"/>
<path id="lead_Merc" stroke="#7f7f7f" d="M391 424h1M391 425h1M391 426h1M391 427h1M391 428h1M391 429h1M391 430h1M391 431h1M390 432h1M390 433h1M390 434h1M390 435h1M390 436h1M390 437h1M390 438h1M390 439h1M390 440h1"/>
<path id="obj_Merc" stroke="#00ff00" d="M388 419h1M392 442h1M400 442h1M393 443h1M399 443h1M394 444h5M393 445h1M399 445h1M392 446h1M400 446h1M392 447h1M400 447h1M392 448h1M400 448h1M392 449h1M400 449h1M392 450h1M400 450h1M393 451h1M399 451h1M394 452h5M396 453h1M396 454h1M396 455h1M392 456h9M396 457h1M396 458h1"/>
<path id="lead_Moon" stroke="#ffffff" d="M143 329h4M137 330h6M134 331h3"/>
<path id="obj_Moon" stroke="#0000ff" d="M119 326h5M118 327h1M124 327h2M117 328h1M126 328h1M152 328h1M118 329h1M127 329h1M119 330h1M128 330h1M120 331h1M128 331h1M120 332h1M129 332h1M121 333h1M129 333h1M121 334h1M129 334h1M121 335h1M129 335h1M120 336h1M129 336h1M120 337h1M128 337h1M119 338h1M128 338h1M118 339h1M127 339h1M117 340h1M126 340h1M118 341h1M124 341h2M119 342h5"/>
<path id="lead_Sun" stroke="#ffffff" d="M426 389h1M427 390h1M428 391h2M430 392h1M431 393h1M432 394h2M434 395h1M435 396h1"/>
<path id="obj_Sun" stroke="#ff0000" d="M421 386h1M443 395h5M441 396h2M448 396h2M440 397h1M450 397h1M439 398h1M451 398h1M438 399h1M452 399h1M438 400h1M452 400h1M437 401h1M453 401h1M437 402h1M453 402h1M437 403h1M445 403h1M453 403h1M437 404h1M453 404h1M437 405h1M453 405h1M438 406h1M452 406h1M438 407h1M452 407h1M439 408h1M451 408h1M440 409h1M450 409h1M441 410h2M448 410h2M443 411h5"/>
<path id="asp_Plut_MC" stroke="#00ff00" d="M281 157h1M279 161h1M277 165h1M275 169h1M273 173h1M271 177h1M269 181h1M267 185h1M265 189h1M263 193h1M262 197h1M260 201h1M258 205h1M256 209h1M254 213h1M252 217h1M250 221h1M248 225h1M246 229h1M244 233h1M242 237h1M240 241h1M238 245h1M236 249h1M234 253h1M232 257h1M230 261h1M228 265h1M227 269h1M225 273h1M223 277h1M221 281h1M219 285h1M217 289h1M215 293h1M213 297h1M211 301h1M209 305h1M207 309h1M205 313h1M203 317h1M201 321h1M199 325h1M197 329h1M195 333h1M193 337h1M192 341h1M190 345h1M188 349h1M186 353h1M184 357h1M182 361h1M180 365h1M178 369h1M176 373h1"/>
<path id="asp_Moon_MC" stroke="#ff0000" d="M281 157h1M280 159h1M278 161h1M277 163h1M275 165h1M274 167h1M272 169h1M271 171h1M269 173h1M268 175h1M267 177h1M265 179h1M264 181h1M262 183h1M261 185h1M259 187h1M258 189h1M256 191h1M255 193h1M254 195h1M252 197h1M251 199h1M249 201h1M248 203h1M246 205h1M245 207h1M243 209h1M242 211h1M240 213h1M239 215h1M238 217h1M236 219h1M235 221h1M233 223h1M232 225h1M230 227h1M229 229h1M227 231h1M226 233h1M225 235h1M223 237h1M222 239h1M220 241h1M219 243h1M217 245h1M216 247h1M214 249h1M213 251h1M212 253h1M210 255h1M209 257h1M207 259h1M206 261h1M204 263h1M203 265h1M201 267h1M200 269h1M199 271h1M197 273h1M196 275h1M194 277h1M193 279h1M191 281h1M190 283h1M188 285h1M187 287h1M185 289h1M184 291h1M183 293h1M181 295h1M180 297h1M178 299h1M177 301h1M175 303h1M174 305h1M172 307h1M171 309h1M170 311h1M168 313h1M167 315h1M165 317h1M164 319h1M162 321h1M161 323h1M159 325h1M158 327h1"/>
<path id="asp_Nept_Asc" stroke="#ff0000" d="M158 302h1M161 306h1M165 310h1M169 314h1M172 318h1M176 322h1M179 326h1M183 330h1M187 334h1M190 338h1M194 342h1M197 346h1M201 350h1M205 354h1M208 358h1M212 362h1M215 366h1M219 370h1M223 374h1M226 378h1M230 382h1M233 386h1M237 390h1M241 394h1M244 398h1M248 402h1M252 406h1M255 410h1M259 414h1M262 418h1M266 422h1M270 426h1M273 430h1M277 434h1M280 438h1M284 442h1"/>
<path id="asp_Uran_Asc" stroke="#00ff00" d="M157 300h1M160 302h1M163 304h1M166 306h1M169 308h1M172 310h1M175 312h1M178 313h1M181 315h1M184 317h1M187 319h1M190 321h1M193 323h1M196 325h1M199 327h1M202 328h1M205 330h1M208 332h1M211 334h1M214 336h1M217 338h1M220 340h1M223 342h1M226 343h1M229 345h1M232 347h1M235 349h1M238 351h1M241 353h1M244 355h1M247 357h1M250 358h1M253 360h1M256 362h1M259 364h1M262 366h1M265 368h1M268 370h1M271 372h1M274 374h1M277 375h1M280 377h1M283 379h1M286 381h1M289 383h1M292 385h1M295 387h1M298 389h1M301 390h1M304 392h1M307 394h1M310 396h1M313 398h1M316 400h1M319 402h1M322 404h1M325 405h1M328 407h1M331 409h1M334 411h1M337 413h1M340 415h1M343 417h1M346 419h1M349 420h1M352 422h1M355 424h1M358 426h1M361 428h1"/>
<path id="asp_Venu_Asc" stroke="#00ff00" d="M157 300h1M161 303h1M165 305h1M169 308h1M173 311h1M177 313h1M181 316h1M185 318h1M189 321h1M193 324h1M197 326h1M201 329h1M205 331h1M209 334h1M213 337h1M217 339h1M221 342h1M225 344h1M229 347h1M233 350h1M237 352h1M241 355h1M245 357h1M249 360h1M253 363h1M257 365h1M261 368h1M265 370h1M269 373h1M273 376h1M277 378h1M281 381h1M285 383h1M289 386h1M293 388h1M297 391h1M301 394h1M305 396h1M309 399h1M313 401h1M317 404h1M321 407h1M325 409h1M329 412h1M333 414h1M337 417h1M341 420h1M345 422h1M349 425h1M353 427h1M357 430h1"/>
<path id="asp_Merc_Asc" stroke="#00ff00" d="M156 300h1M160 302h1M164 304h1M168 306h1M172 308h1M176 310h1M180 312h1M184 314h1M188 316h1M192 318h1M196 320h1M200 322h1M204 324h1M208 326h1M212 328h1M216 330h1M220 332h1M224 334h1M228 336h1M232 338h1M236 340h1M240 342h1M244 344h1M248 346h1M252 348h1M256 350h1M260 352h1M264 354h1M268 356h1M272 358h1M276 360h1M280 362h1M284 364h1M288 366h1M292 368h1M296 370h1M300 372h1M304 374h1M308 376h1M312 378h1M316 380h1M320 382h1M324 384h1M328 386h1M332 388h1M336 390h1M340 392h1M344 394h1M348 396h1M352 398h1M356 400h1M360 402h1M364 404h1M368 406h1M372 408h1M376 410h1M380 412h1M384 414h1"/>
<path id="asp_Uran_Plut" stroke="#ff0000" d="M178 374h1M181 374h1M184 375h1M187 376h1M190 377h1M193 378h1M196 379h1M199 380h1M202 381h1M205 382h1M208 383h1M211 383h1M214 384h1M217 385h1M220 386h1M223 387h1M226 388h1M229 389h1M232 390h1M235 391h1M238 391h1M241 392h1M244 393h1M247 394h1M250 395h1M253 396h1M256 397h1M259 398h1M262 399h1M265 399h1M268 400h1M271 401h1M274 402h1M277 403h1M280 404h1M283 405h1M286 406h1M289 407h1M292 407h1M295 408h1M298 409h1M301 410h1M304 411h1M307 412h1M310 413h1M313 414h1M316 415h1M319 416h1M322 416h1M325 417h1M328 418h1M331 419h1M334 420h1M337 421h1M340 422h1M343 423h1M346 424h1M349 424h1M352 425h1M355 426h1M358 427h1M361 428h1"/>
<path id="asp_Satu_Plut" stroke="#ff0000" d="M215 183h1M214 186h1M214 189h1M213 192h1M213 195h1M212 198h1M211 201h1M211 204h1M210 207h1M209 210h1M209 213h1M208 216h1M208 219h1M207 222h1M206 225h1M206 228h1M205 231h1M205 234h1M204 237h1M203 240h1M203 243h1M202 246h1M201 249h1M201 252h1M200 255h1M200 258h1M199 261h1M198 264h1M198 267h1M197 270h1M197 273h1M196 276h1M195 279h1M195 282h1M194 285h1M193 288h1M193 291h1M192 294h1M192 297h1M191 300h1M190 303h1M190 306h1M189 309h1M189 312h1M188 315h1M187 318h1M187 321h1M186 324h1M185 327h1M185 330h1M184 333h1M184 336h1M183 339h1M182 342h1M182 345h1M181 348h1M181 351h1M180 354h1M179 357h1M179 360h1M178 363h1M177 366h1M177 369h1M176 372h1"/>
<path id="asp_Merc_Plut" stroke="#ff0000" d="M177 373h1M180 374h1M183 374h1M186 375h1M189 376h1M192 376h1M195 377h1M198 377h1M201 378h1M204 379h1M207 379h1M210 380h1M213 380h1M216 381h1M219 381h1M222 382h1M225 383h1M228 383h1M231 384h1M234 384h1M237 385h1M240 386h1M243 386h1M246 387h1M249 387h1M252 388h1M255 389h1M258 389h1M261 390h1M264 390h1M267 391h1M270 392h1M273 392h1M276 393h1M279 393h1M282 394h1M285 394h1M288 395h1M291 396h1M294 396h1M297 397h1M300 397h1M303 398h1M306 399h1M309 399h1M312 400h1M315 400h1M318 401h1M321 402h1M324 402h1M327 403h1M330 403h1M333 404h1M336 405h1M339 405h1M342 406h1M345 406h1M348 407h1M351 407h1M354 408h1M357 409h1M360 409h1M363 410h1M366 410h1M369 411h1M372 412h1M375 412h1M378 413h1M381 413h1M384 414h1"/>
<path id="asp_Sun_Plut" stroke="#00ff00" d="M176 373h1M180 373h1M184 373h1M188 373h1M192 374h1M196 374h1M200 374h1M204 374h1M208 374h1M212 374h1M216 375h1M220 375h1M224 375h1M228 375h1M232 375h1M236 375h1M240 375h1M244 376h1M248 376h1M252 376h1M256 376h1M260 376h1M264 376h1M268 376h1M272 377h1M276 377h1M280 377h1M284 377h1M288 377h1M292 377h1M296 378h1M300 378h1M304 378h1M308 378h1M312 378h1M316 378h1M320 378h1M324 379h1M328 379h1M332 379h1M336 379h1M340 379h1M344 379h1M348 379h1M352 380h1M356 380h1M360 380h1M364 380h1M368 380h1M372 380h1M376 381h1M380 381h1M384 381h1M388 381h1M392 381h1M396 381h1M400 381h1M404 382h1M408 382h1M412 382h1M416 382h1"/>
<path id="asp_Sun_Nept" stroke="#00ffff" d="M415 382h2M413 383h2M411 384h2M409 385h2M407 386h2M404 387h3M402 388h2M400 389h2M398 390h2M396 391h2M393 392h3M391 393h2M389 394h2M387 395h2M385 396h2M382 397h3M380 398h2M378 399h2M376 400h2M374 401h2M371 402h3M369 403h2M367 404h2M365 405h2M363 406h2M360 407h3M358 408h2M356 409h2M354 410h2M352 411h2M349 412h3M347 413h2M345 414h2M343 415h2M341 416h2M338 417h3M336 418h2M334 419h2M332 420h2M330 421h2M327 422h3M325 423h2M323 424h2M321 425h2M319 426h2M316 427h3M314 428h2M312 429h2M310 430h2M308 431h2M305 432h3M303 433h2M301 434h2M299 435h2M297 436h2M294 437h3M292 438h2M290 439h2M288 440h2M286 441h2M284 442h2"/>
<path id="asp_Venu_Uran" stroke="#ffff00" d="M360 428h2M358 429h2M357 430h1"/>
<path id="asp_Mars_Satu" stroke="#0000ff" d="M216 184h1M217 186h1M219 188h1M220 190h1M222 192h1M223 194h1M225 196h1M226 198h1M228 200h1M229 202h1M231 204h1M232 206h1M234 208h1M235 210h1M237 212h1M238 214h1M240 216h1M241 218h1M243 220h1M244 222h1M246 224h1M247 226h1M249 228h1M251 230h1M252 232h1M254 234h1M255 236h1M257 238h1M258 240h1M260 242h1M261 244h1M263 246h1M264 248h1M266 250h1M267 252h1M269 254h1M270 256h1M272 258h1M273 260h1M275 262h1M276 264h1M278 266h1M279 268h1M281 270h1M282 272h1M284 274h1M285 276h1M287 278h1M288 280h1M290 282h1M291 284h1M293 286h1M294 288h1M296 290h1M297 292h1M299 294h1M300 296h1M302 298h1M303 300h1M305 302h1M306 304h1M308 306h1M309 308h1M311 310h1M312 312h1M314 314h1M315 316h1M317 318h1M318 320h1M320 322h1M322 324h1M323 326h1M325 328h1M326 330h1M328 332h1M329 334h1M331 336h1M332 338h1M334 340h1M335 342h1M337 344h1M338 346h1M340 348h1M341 350h1M343 352h1M344 354h1M346 356h1M347 358h1M349 360h1M350 362h1M352 364h1M353 366h1M355 368h1M356 370h1M358 372h1M359 374h1M361 376h1M362 378h1M364 380h1M365 382h1M367 384h1M368 386h1M370 388h1M371 390h1M373 392h1M374 394h1M376 396h1M377 398h1M379 400h1M380 402h1M382 404h1M383 406h1M385 408h1M386 410h1M388 412h1"/>
<path id="asp_Merc_Satu" stroke="#0000ff" d="M215 183h1M216 184h1M216 185h1M217 186h1M218 187h1M219 188h1M219 189h1M220 190h1M221 191h1M222 192h1M222 193h1M223 194h1M224 195h1M225 196h1M225 197h1M226 198h1M227 199h1M227 200h1M228 201h1M229 202h1M230 203h1M230 204h1M231 205h1M232 206h1M233 207h1M233 208h1M234 209h1M235 210h1M235 211h1M236 212h1M237 213h1M238 214h1M238 215h1M239 216h1M240 217h1M241 218h1M241 219h1M242 220h1M243 221h1M244 222h1M244 223h1M245 224h1M246 225h1M246 226h1M247 227h1M248 228h1M249 229h1M249 230h1M250 231h1M251 232h1M252 233h1M252 234h1M253 235h1M254 236h1M255 237h1M255 238h1M256 239h1M257 240h1M257 241h1M258 242h1M259 243h1M260 244h1M260 245h1M261 246h1M262 247h1M263 248h1M263 249h1M264 250h1M265 251h1M265 252h1M266 253h1M267 254h1M268 255h1M268 256h1M269 257h1M270 258h1M271 259h1M271 260h1M272 261h1M273 262h1M274 263h1M274 264h1M275 265h1M276 266h1M276 267h1M277 268h1M278 269h1M279 270h1M279 271h1M280 272h1M281 273h1M282 274h1M282 275h1M283 276h1M284 277h1M285 278h1M285 279h1M286 280h1M287 281h1M287 282h1M288 283h1M289 284h1M290 285h1M290 286h1M291 287h1M292 288h1M293 289h1M293 290h1M294 291h1M295 292h1M295 293h1M296 294h1M297 295h1M298 296h1M298 297h1M299 298h1M300 299h1M301 300h1M301 301h1M302 302h1M303 303h1M304 304h1M304 305h1M305 306h1M306 307h1M306 308h1M307 309h1M308 310h1M309 311h1M309 312h1M310 313h1M311 314h1M312 315h1M312 316h1M313 317h1M314 318h1M314 319h1M315 320h1M316 321h1M317 322h1M317 323h1M318 324h1M319 325h1M320 326h1M320 327h1M321 328h1M322 329h1M323 330h1M323 331h1M324 332h1M325 333h1M325 334h1M326 335h1M327 336h1M328 337h1M328 338h1M329 339h1M330 340h1M331 341h1M331 342h1M332 343h1M333 344h1M334 345h1M334 346h1M335 347h1M336 348h1M336 349h1M337 350h1M338 351h1M339 352h1M339 353h1M340 354h1M341 355h1M342 356h1M342 357h1M343 358h1M344 359h1M344 360h1M345 361h1M346 362h1M347 363h1M347 364h1M348 365h1M349 366h1M350 367h1M350 368h1M351 369h1M352 370h1M353 371h1M353 372h1M354 373h1M355 374h1M355 375h1M356 376h1M357 377h1M358 378h1M358 379h1M359 380h1M360 381h1M361 382h1M361 383h1M362 384h1M363 385h1M364 386h1M364 387h1M365 388h1M366 389h1M366 390h1M367 391h1M368 392h1M369 393h1M369 394h1M370 395h1M371 396h1M372 397h1M372 398h1M373 399h1M374 400h1M374 401h1M375 402h1M376 403h1M377 404h1M377 405h1M378 406h1M379 407h1M380 408h1M380 409h1M381 410h1M382 411h1M383 412h1M383 413h1M384 414h1"/>
<path id="asp_Moon_Satu" stroke="#00ffff" d="M215 183h1M214 186h1M213 189h1M211 192h1M210 195h1M209 198h1M208 201h1M207 204h1M205 207h1M204 210h1M203 213h1M202 216h1M201 219h1M200 222h1M198 225h1M197 228h1M196 231h1M195 234h1M194 237h1M192 240h1M191 243h1M190 246h1M189 249h1M188 252h1M186 255h1M185 258h1M184 261h1M183 264h1M182 267h1M181 270h1M179 273h1M178 276h1M177 279h1M176 282h1M175 285h1M173 288h1M172 291h1M171 294h1M170 297h1M169 300h1M167 303h1M166 306h1M165 309h1M164 312h1M163 315h1M162 318h1M160 321h1M159 324h1M158 327h1"/>
<path id="asp_Mars_Jupi" stroke="#ffff00" d="M397 404h1M394 407h1M391 409h1M388 412h1"/>
<path id="asp_Merc_Jupi" stroke="#ffff00" d="M396 405h1M392 408h1M388 411h1M384 414h1"/>
<path id="asp_Moon_Jupi" stroke="#00ff00" d="M158 327h1M160 328h1M162 328h1M164 329h1M166 330h1M168 330h1M170 331h1M172 331h1M174 332h1M176 333h1M178 333h1M180 334h1M182 335h1M184 335h1M186 336h1M188 337h1M190 337h1M192 338h1M194 338h1M196 339h1M198 340h1M200 340h1M202 341h1M204 342h1M206 342h1M208 343h1M210 343h1M212 344h1M214 345h1M216 345h1M218 346h1M220 347h1M222 347h1M224 348h1M226 349h1M228 349h1M230 350h1M232 350h1M234 351h1M236 352h1M238 352h1M240 353h1M242 354h1M244 354h1M246 355h1M248 356h1M250 356h1M252 357h1M254 357h1M256 358h1M258 359h1M260 359h1M262 360h1M264 361h1M266 361h1M268 362h1M270 362h1M272 363h1M274 364h1M276 364h1M278 365h1M280 366h1M282 366h1M284 367h1M286 368h1M288 368h1M290 369h1M292 369h1M294 370h1M296 371h1M298 371h1M300 372h1M302 373h1M304 373h1M306 374h1M308 375h1M310 375h1M312 376h1M314 376h1M316 377h1M318 378h1M320 378h1M322 379h1M324 380h1M326 380h1M328 381h1M330 381h1M332 382h1M334 383h1M336 383h1M338 384h1M340 385h1M342 385h1M344 386h1M346 387h1M348 387h1M350 388h1M352 388h1M354 389h1M356 390h1M358 390h1M360 391h1M362 392h1M364 392h1M366 393h1M368 394h1M370 394h1M372 395h1M374 395h1M376 396h1M378 397h1M380 397h1M382 398h1M384 399h1M386 399h1M388 400h1M390 400h1M392 401h1M394 402h1M396 402h1M398 403h1"/>
<path id="asp_Merc_Mars" stroke="#ffff00" d="M387 412h2M385 413h2M384 414h1"/>
<path id="asp_Moon_Mars" stroke="#00ff00" d="M158 327h1M160 328h1M162 328h1M164 329h1M166 330h1M168 331h1M170 331h1M172 332h1M174 333h1M176 334h1M178 334h1M180 335h1M182 336h1M184 337h1M186 337h1M188 338h1M190 339h1M192 340h1M194 340h1M196 341h1M198 342h1M200 343h1M202 343h1M204 344h1M206 345h1M208 345h1M210 346h1M212 347h1M214 348h1M216 348h1M218 349h1M220 350h1M222 351h1M224 351h1M226 352h1M228 353h1M230 354h1M232 354h1M234 355h1M236 356h1M238 357h1M240 357h1M242 358h1M244 359h1M246 360h1M248 360h1M250 361h1M252 362h1M254 362h1M256 363h1M258 364h1M260 365h1M262 365h1M264 366h1M266 367h1M268 368h1M270 368h1M272 369h1M274 370h1M276 371h1M278 371h1M280 372h1M282 373h1M284 374h1M286 374h1M288 375h1M290 376h1M292 377h1M294 377h1M296 378h1M298 379h1M300 379h1M302 380h1M304 381h1M306 382h1M308 382h1M310 383h1M312 384h1M314 385h1M316 385h1M318 386h1M320 387h1M322 388h1M324 388h1M326 389h1M328 390h1M330 391h1M332 391h1M334 392h1M336 393h1M338 394h1M340 394h1M342 395h1M344 396h1M346 396h1M348 397h1M350 398h1M352 399h1M354 399h1M356 400h1M358 401h1M360 402h1M362 402h1M364 403h1M366 404h1M368 405h1M370 405h1M372 406h1M374 407h1M376 408h1M378 408h1M380 409h1M382 410h1M384 411h1M386 411h1M388 412h1"/>
<path id="asp_Moon_Merc" stroke="#00ff00" d="M158 327h1M161 328h1M164 329h1M167 330h1M170 332h1M173 333h1M176 334h1M179 335h1M182 336h1M185 337h1M188 339h1M191 340h1M194 341h1M197 342h1M200 343h1M203 344h1M206 345h1M209 347h1M212 348h1M215 349h1M218 350h1M221 351h1M224 352h1M227 354h1M230 355h1M233 356h1M236 357h1M239 358h1M242 359h1M245 360h1M248 362h1M251 363h1M254 364h1M257 365h1M260 366h1M263 367h1M266 369h1M269 370h1M272 371h1M275 372h1M278 373h1M281 374h1M284 376h1M287 377h1M290 378h1M293 379h1M296 380h1M299 381h1M302 382h1M305 384h1M308 385h1M311 386h1M314 387h1M317 388h1M320 389h1M323 391h1M326 392h1M329 393h1M332 394h1M335 395h1M338 396h1M341 397h1M344 399h1M347 400h1M350 401h1M353 402h1M356 403h1M359 404h1M362 406h1M365 407h1M368 408h1M371 409h1M374 410h1M377 411h1M380 412h1M383 414h1"/>
<path id="divider" stroke="#bfbfbf" d="M599 0h1M599 1h1M599 2h1M599 3h1M599 4h1M599 5h1M599 6h1M599 7h1M599 8h1M599 9h1M599 10h1M599 11h1M599 12h1M599 13h1M599 14h1M599 15h1M599 16h1M599 17h1M599 18h1M599 19h1M599 20h1M599 21h1M599 22h1M599 23h1M599 24h1M599 25h1M599 26h1M599 27h1M599 28h1M599 29h1M599 30h1M599 31h1M599 32h1M599 33h1M599 34h1M599 35h1M599 36h1M599 37h1M599 38h1M599 39h1M599 40h1M599 41h1M599 42h1M599 43h1M599 44h1M599 45h1M599 46h1M599 47h1M599 48h1M599 49h1M599 50h1M599 51h1M599 52h1M599 53h1M599 54h1M599 55h1M599 56h1M599 57h1M599 58h1M599 59h1M599 60h1M599 61h1M599 62h1M599 63h1M599 64h1M599 65h1M599 66h1M599 67h1M599 68h1M599 69h1M599 70h1M599 71h1M599 72h1M599 73h1M599 74h1M599 75h1M599 76h1M599 77h1M599 78h1M599 79h1M599 80h1M599 81h1M599 82h1M599 83h1M599 84h1M599 85h1M599 86h1M599 87h1M599 88h1M599 89h1M599 90h1M599 91h1M599 92h1M599 93h1M599 94h1M599 95h1M599 96h1M599 97h1M599 98h1M599 99h1M599 100h1M599 101h1M599 102h1M599 103h1M599 104h1M599 105h1M599 106h1M599 107h1M599 108h1M599 109h1M599 110h1M599 111h1M599 112h1M599 113h1M599 114h1M599 115h1M599 116h1M599 117h1M599 118h1M599 119h1M599 120h1M599 121h1M599 122h1M599 123h1M599 124h1M599 125h1M599 126h1M599 127h1M599 128h1M599 129h1M599 130h1M599 131h1M599 132h1M599 133h1M599 134h1M599 135h1M599 136h1M599 137h1M599 138h1M599 139h1M599 140h1M599 141h1M599 142h1M599 143h1M599 144h1M599 145h1M599 146h1M599 147h1M599 148h1M599 149h1M599 150h1M599 151h1M599 152h1M599 153h1M599 154h1M599 155h1M599 156h1M599 157h1M599 158h1M599 159h1M599 160h1M599 161h1M599 162h1M599 163h1M599 164h1M599 165h1M599 166h1M599 167h1M599 168h1M599 169h1M599 170h1M599 171h1M599 172h1M599 173h1M599 174h1M599 175h1M599 176h1M599 177h1M599 178h1M599 179h1M599 180h1M599 181h1M599 182h1M599 183h1M599 184h1M599 185h1M599 186h1M599 187h1M599 188h1M599 189h1M599 190h1M599 191h1M599 192h1M599 193h1M599 194h1M599 195h1M599 196h1M599 197h1M599 198h1M599 199h1M599 200h1M599 201h1M599 202h1M599 203h1M599 204h1M599 205h1M599 206h1M599 207h1M599 208h1M599 209h1M599 210h1M599 211h1M599 212h1M599 213h1M599 214h1M599 215h1M599 216h1M599 217h1M599 218h1M599 219h1M599 220h1M599 221h1M599 222h1M599 223h1M599 224h1M599 225h1M599 226h1M599 227h1M599 228h1M599 229h1M599 230h1M599 231h1M599 232h1M599 233h1M599 234h1M599 235h1M599 236h1M599 237h1M599 238h1M599 239h1M599 240h1M599 241h1M599 242h1M599 243h1M599 244h1M599 245h1M599 246h1M599 247h1M599 248h1M599 249h1M599 250h1M599 251h1M599 252h1M599 253h1M599 254h1M599 255h1M599 256h1M599 257h1M599 258h1M599 259h1M599 260h1M599 261h1M599 262h1M599 263h1M599 264h1M599 265h1M599 266h1M599 267h1M599 268h1M599 269h1M599 270h1M599 271h1M599 272h1M599 273h1M599 274h1M599 275h1M599 276h1M599 277h1M599 278h1M599 279h1M599 280h1M599 281h1M599 282h1M599 283h1M599 284h1M599 285h1M599 286h1M599 287h1M599 288h1M599 289h1M599 290h1M599 291h1M599 292h1M599 293h1M599 294h1M599 295h1M599 296h1M599 297h1M599 298h1M599 299h1M599 300h1M599 301h1M599 302h1M599 303h1M599 304h1M599 305h1M599 306h1M599 307h1M599 308h1M599 309h1M599 310h1M599 311h1M599 312h1M599 313h1M599 314h1M599 315h1M599 316h1M599 317h1M599 318h1M599 319h1M599 320h1M599 321h1M599 322h1M599 323h1M599 324h1M599 325h1M599 326h1M599 327h1M599 328h1M599 329h1M599 330h1M599 331h1M599 332h1M599 333h1M599 334h1M599 335h1M599 336h1M599 337h1M599 338h1M599 339h1M599 340h1M599 341h1M599 342h1M599 343h1M599 344h1M599 345h1M599 346h1M599 347h1M599 348h1M599 349h1M599 350h1M599 351h1M599 352h1M599 353h1M599 354h1M599 355h1M599 356h1M599 357h1M599 358h1M599 359h1M599 360h1M599 361h1M599 362h1M599 363h1M599 364h1M599 365h1M599 366h1M599 367h1M599 368h1M599 369h1M599 370h1M599 371h1M599 372h1M599 373h1M599 374h1M599 375h1M599 376h1M599 377h1M599 378h1M599 379h1M599 380h1M599 381h1M599 382h1M599 383h1M599 384h1M599 385h1M599 386h1M599 387h1M599 388h1M599 389h1M599 390h1M599 391h1M599 392h1M599 393h1M599 394h1M599 395h1M599 396h1M599 397h1M599 398h1M599 399h1M599 400h1M599 401h1M599 402h1M599 403h1M599 404h1M599 405h1M599 406h1M599 407h1M599 408h1M599 409h1M599 410h1M599 411h1M599 412h1M599 413h1M599 414h1M599 415h1M599 416h1M599 417h1M599 418h1M599 419h1M599 420h1M599 421h1M599 422h1M599 423h1M599 424h1M599 425h1M599 426h1M599 427h1M599 428h1M599 429h1M599 430h1M599 431h1M599 432h1M599 433h1M599 434h1M599 435h1M599 436h1M599 437h1M599 438h1M599 439h1M599 440h1M599 441h1M599 442h1M599 443h1M599 444h1M599 445h1M599 446h1M599 447h1M599 448h1M599 449h1M599 450h1M599 451h1M599 452h1M599 453h1M599 454h1M599 455h1M599 456h1M599 457h1M599 458h1M599 459h1M599 460h1M599 461h1M599 462h1M599 463h1M599 464h1M599 465h1M599 466h1M599 467h1M599 468h1M599 469h1M599 470h1M599 471h1M599 472h1M599 473h1M599 474h1M599 475h1M599 476h1M599 477h1M599 478h1M599 479h1M599 480h1M599 481h1M599 482h1M599 483h1M599 484h1M599 485h1M599 486h1M599 487h1M599 488h1M599 489h1M599 490h1M599 491h1M599 492h1M599 493h1M599 494h1M599 495h1M599 496h1M599 497h1M599 498h1M599 499h1M599 500h1M599 501h1M599 502h1M599 503h1M599 504h1M599 505h1M599 506h1M599 507h1M599 508h1M599 509h1M599 510h1M599 511h1M599 512h1M599 513h1M599 514h1M599 515h1M599 516h1M599 517h1M599 518h1M599 519h1M599 520h1M599 521h1M599 522h1M599 523h1M599 524h1M599 525h1M599 526h1M599 527h1M599 528h1M599 529h1M599 530h1M599 531h1M599 532h1M599 533h1M599 534h1M599 535h1M599 536h1M599 537h1M599 538h1M599 539h1M599 540h1M599 541h1M599 542h1M599 543h1M599 544h1M599 545h1M599 546h1M599 547h1M599 548h1M599 549h1M599 550h1M599 551h1M599 552h1M599 553h1M599 554h1M599 555h1M599 556h1M599 557h1M599 558h1M599 559h1M599 560h1M599 561h1M599 562h1M599 563h1M599 564h1M599 565h1M599 566h1M599 567h1M599 568h1M599 569h1M599 570h1M599 571h1M599 572h1M599 573h1M599 574h1M599 575h1M599 576h1M599 577h1M599 578h1M599 579h1M599 580h1M599 581h1M599 582h1M599 583h1M599 584h1M599 585h1M599 586h1M599 587h1M599 588h1M599 589h1M599 590h1M599 591h1M599 592h1M599 593h1M599 594h1M599 595h1M599 596h1M599 597h1M599 598h1M599 599h1"/>
<path id="border" stroke="#bfbfbf" d="M0 0h760M0 1h1M759 1h1M0 2h1M759 2h1M0 3h1M759 3h1M0 4h1M759 4h1M0 5h1M759 5h1M0 6h1M759 6h1M0 7h1M759 7h1M0 8h1M759 8h1M0 9h1M759 9h1M0 10h1M759 10h1M0 11h1M759 11h1M0 12h1M759 12h1M0 13h1M759 13h1M0 14h1M759 14h1M0 15h1M759 15h1M0 16h1M759 16h1M0 17h1M759 17h1M0 18h1M759 18h1M0 19h1M759 19h1M0 20h1M759 20h1M0 21h1M759 21h1M0 22h1M759 22h1M0 23h1M759 23h1M0 24h1M759 24h1M0 25h1M759 25h1M0 26h1M759 26h1M0 27h1M759 27h1M0 28h1M759 28h1M0 29h1M759 29h1M0 30h1M759 30h1M0 31h1M759 31h1M0 32h1M759 32h1M0 33h1M759 33h1M0 34h1M759 34h1M0 35h1M759 35h1M0 36h1M759 36h1M0 37h1M759 37h1M0 38h1M759 38h1M0 39h1M759 39h1M0 40h1M759 40h1M0 41h1M759 41h1M0 42h1M759 42h1M0 43h1M759 43h1M0 44h1M759 44h1M0 45h1M759 45h1M0 46h1M759 46h1M0 47h1M759 47h1M0 48h1M759 48h1M0 49h1M759 49h1M0 50h1M759 50h1M0 51h1M759 51h1M0 52h1M759 52h1M0 53h1M759 53h1M0 54h1M759 54h1M0 55h1M759 55h1M0 56h1M759 56h1M0 57h1M759 57h1M0 58h1M759 58h1M0 59h1M759 59h1M0 60h1M759 60h1M0 61h1M759 61h1M0 62h1M759 62h1M0 63h1M759 63h1M0 64h1M759 64h1M0 65h1M759 65h1M0 66h1M759 66h1M0 67h1M759 67h1M0 68h1M759 68h1M0 69h1M759 69h1M0 70h1M759 70h1M0 71h1M759 71h1M0 72h1M759 72h1M0 73h1M759 73h1M0 74h1M759 74h1M0 75h1M759 75h1M0 76h1M759 76h1M0 77h1M759 77h1M0 78h1M759 78h1M0 79h1M759 79h1M0 80h1M759 80h1M0 81h1M759 81h1M0 82h1M759 82h1M0 83h1M759 83h1M0 84h1M759 84h1M0 85h1M759 85h1M0 86h1M759 86h1M0 87h1M759 87h1M0 88h1M759 88h1M0 89h1M759 89h1M0 90h1M759 90h1M0 91h1M759 91h1M0 92h1M759 92h1M0 93h1M759 93h1M0 94h1M759 94h1M0 95h1M759 95h1M0 96h1M759 96h1M0 97h1M759 97h1M0 98h1M759 98h1M0 99h1M759 99h1M0 100h1M759 100h1M0 101h1M759 101h1M0 102h1M759 102h1M0 103h1M759 103h1M0 104h1M759 104h1M0 105h1M759 105h1M0 106h1M759 106h1M0 107h1M759 107h1M0 108h1M759 108h1M0 109h1M759 109h1M0 110h1M759 110h1M0 111h1M759 111h1M0 112h1M759 112h1M0 113h1M759 113h1M0 114h1M759 114h1M0 115h1M759 115h1M0 116h1M759 116h1M0 117h1M759 117h1M0 118h1M759 118h1M0 119h1M759 119h1M0 120h1M759 120h1M0 121h1M759 121h1M0 122h1M759 122h1M0 123h1M759 123h1M0 124h1M759 124h1M0 125h1M759 125h1M0 126h1M759 126h1M0 127h1M759 127h1M0 128h1M759 128h1M0 129h1M759 129h1M0 130h1M759 130h1M0 131h1M759 131h1M0 132h1M759 132h1M0 133h1M759 133h1M0 134h1M759 134h1M0 135h1M759 135h1M0 136h1M759 136h1M0 137h1M759 137h1M0 138h1M759 138h1M0 139h1M759 139h1M0 140h1M759 140h1M0 141h1M759 141h1M0 142h1M759 142h1M0 143h1M759 143h1M0 144h1M759 144h1M0 145h1M759 145h1M0 146h1M759 146h1M0 147h1M759 147h1M0 148h1M759 148h1M0 149h1M759 149h1M0 150h1M759 150h1M0 151h1M759 151h1M0 152h1M759 152h1M0 153h1M759 153h1M0 154h1M759 154h1M0 155h1M759 155h1M0 156h1M759 156h1M0 157h1M759 157h1M0 158h1M759 158h1M0 159h1M759 159h1M0 160h1M759 160h1M0 161h1M759 161h1M0 162h1M759 162h1M0 163h1M759 163h1M0 164h1M759 164h1M0 165h1M759 165h1M0 166h1M759 166h1M0 167h1M759 167h1M0 168h1M759 168h1M0 169h1M759 169h1M0 170h1M759 170h1M0 171h1M759 171h1M0 172h1M759 172h1M0 173h1M759 173h1M0 174h1M759 174h1M0 175h1M759 175h1M0 176h1M759 176h1M0 177h1M759 177h1M0 178h1M759 178h1M0 179h1M759 179h1M0 180h1M759 180h1M0 181h1M759 181h1M0 182h1M759 182h1M0 183h1M759 183h1M0 184h1M759 184h1M0 185h1M759 185h1M0 186h1M759 186h1M0 187h1M759 187h1M0 188h1M759 188h1M0 189h1M759 189h1M0 190h1M759 190h1M0 191h1M759 191h1M0 192h1M759 192h1M0 193h1M759 193h1M0 194h1M759 194h1M0 195h1M759 195h1M0 196h1M759 196h1M0 197h1M759 197h1M0 198h1M759 198h1M0 199h1M759 199h1M0 200h1M759 200h1M0 201h1M759 201h1M0 202h1M759 202h1M0 203h1M759 203h1M0 204h1M759 204h1M0 205h1M759 205h1M0 206h1M759 206h1M0 207h1M759 207h1M0 208h1M759 208h1M0 209h1M759 209h1M0 210h1M759 210h1M0 211h1M759 211h1M0 212h1M759 212h1M0 213h1M759 213h1M0 214h1M759 214h1M0 215h1M759 215h1M0 216h1M759 216h1M0 217h1M759 217h1M0 218h1M759 218h1M0 219h1M759 219h1M0 220h1M759 220h1M0 221h1M759 221h1M0 222h1M759 222h1M0 223h1M759 223h1M0 224h1M759 224h1M0 225h1M759 225h1M0 226h1M759 226h1M0 227h1M759 227h1M0 228h1M759 228h1M0 229h1M759 229h1M0 230h1M759 230h1M0 231h1M759 231h1M0 232h1M759 232h1M0 233h1M759 233h1M0 234h1M759 234h1M0 235h1M759 235h1M0 236h1M759 236h1M0 237h1M759 237h1M0 238h1M759 238h1M0 239h1M759 239h1M0 240h1M759 240h1M0 241h1M759 241h1M0 242h1M759 242h1M0 243h1M759 243h1M0 244h1M759 244h1M0 245h1M759 245h1M0 246h1M759 246h1M0 247h1M759 247h1M0 248h1M759 248h1M0 249h1M759 249h1M0 250h1M759 250h1M0 251h1M759 251h1M0 252h1M759 252h1M0 253h1M759 253h1M0 254h1M759 254h1M0 255h1M759 255h1M0 256h1M759 256h1M0 257h1M759 257h1M0 258h1M759 258h1M0 259h1M759 259h1M0 260h1M759 260h1M0 261h1M759 261h1M0 262h1M759 262h1M0 263h1M759 263h1M0 264h1M759 264h1M0 265h1M759 265h1M0 266h1M759 266h1M0 267h1M759 267h1M0 268h1M759 268h1M0 269h1M759 269h1M0 270h1M759 270h1M0 271h1M759 271h1M0 272h1M759 272h1M0 273h1M759 273h1M0 274h1M759 274h1M0 275h1M759 275h1M0 276h1M759 276h1M0 277h1M759 277h1M0 278h1M759 278h1M0 279h1M759 279h1M0 280h1M759 280h1M0 281h1M759 281h1M0 282h1M759 282h1M0 283h1M759 283h1M0 284h1M759 284h1M0 285h1M759 285h1M0 286h1M759 286h1M0 287h1M759 287h1M0 288h1M759 288h1M0 289h1M759 289h1M0 290h1M759 290h1M0 291h1M759 291h1M0 292h1M759 292h1M0 293h1M759 293h1M0 294h1M759 294h1M0 295h1M759 295h1M0 296h1M759 296h1M0 297h1M759 297h1M0 298h1M759 298h1M0 299h1M759 299h1M0 300h1M759 300h1M0 301h1M759 301h1M0 302h1M759 302h1M0 303h1M759 303h1M0 304h1M759 304h1M0 305h1M759 305h1M0 306h1M759 306h1M0 307h1M759 307h1M0 308h1M759 308h1M0 309h1M759 309h1M0 310h1M759 310h1M0 311h1M759 311h1M0 312h1M759 312h1M0 313h1M759 313h1M0 314h1M759 314h1M0 315h1M759 315h1M0 316h1M759 316h1M0 317h1M759 317h1M0 318h1M759 318h1M0 319h1M759 319h1M0 320h1M759 320h1M0 321h1M759 321h1M0 322h1M759 322h1M0 323h1M759 323h1M0 324h1M759 324h1M0 325h1M759 325h1M0 326h1M759 326h1M0 327h1M759 327h1M0 328h1M759 328h1M0 329h1M759 329h1M0 330h1M759 330h1M0 331h1M759 331h1M0 332h1M759 332h1M0 333h1M759 333h1M0 334h1M759 334h1M0 335h1M759 335h1M0 336h1M759 336h1M0 337h1M759 337h1M0 338h1M759 338h1M0 339h1M759 339h1M0 340h1M759 340h1M0 341h1M759 341h1M0 342h1M759 342h1M0 343h1M759 343h1M0 344h1M759 344h1M0 345h1M759 345h1M0 346h1M759 346h1M0 347h1M759 347h1M0 348h1M759 348h1M0 349h1M759 349h1M0 350h1M759 350h1M0 351h1M759 351h1M0 352h1M759 352h1M0 353h1M759 353h1M0 354h1M759 354h1M0 355h1M759 355h1M0 356h1M759 356h1M0 357h1M759 357h1M0 358h1M759 358h1M0 359h1M759 359h1M0 360h1M759 360h1M0 361h1M759 361h1M0 362h1M759 362h1M0 363h1M759 363h1M0 364h1M759 364h1M0 365h1M759 365h1M0 366h1M759 366h1M0 367h1M759 367h1M0 368h1M759 368h1M0 369h1M759 369h1M0 370h1M759 370h1M0 371h1M759 371h1M0 372h1M759 372h1M0 373h1M759 373h1M0 374h1M759 374h1M0 375h1M759 375h1M0 376h1M759 376h1M0 377h1M759 377h1M0 378h1M759 378h1M0 379h1M759 379h1M0 380h1M759 380h1M0 381h1M759 381h1M0 382h1M759 382h1M0 383h1M759 383h1M0 384h1M759 384h1M0 385h1M759 385h1M0 386h1M759 386h1M0 387h1M759 387h1M0 388h1M759 388h1M0 389h1M759 389h1M0 390h1M759 390h1M0 391h1M759 391h1M0 392h1M759 392h1M0 393h1M759 393h1M0 394h1M759 394h1M0 395h1M759 395h1M0 396h1M759 396h1M0 397h1M759 397h1M0 398h1M759 398h1M0 399h1M759 399h1M0 400h1M759 400h1M0 401h1M759 401h1M0 402h1M759 402h1M0 403h1M759 403h1M0 404h1M759 404h1M0 405h1M759 405h1M0 406h1M759 406h1M0 407h1M759 407h1M0 408h1M759 408h1M0 409h1M759 409h1M0 410h1M759 410h1M0 411h1M759 411h1M0 412h1M759 412h1M0 413h1M759 413h1M0 414h1M759 414h1M0 415h1M759 415h1M0 416h1M759 416h1M0 417h1M759 417h1M0 418h1M759 418h1M0 419h1M759 419h1M0 420h1M759 420h1M0 421h1M759 421h1M0 422h1M759 422h1M0 423h1M759 423h1M0 424h1M759 424h1M0 425h1M759 425h1M0 426h1M759 426h1M0 427h1M759 427h1M0 428h1M759 428h1M0 429h1M759 429h1M0 430h1M759 430h1M0 431h1M759 431h1M0 432h1M759 432h1M0 433h1M759 433h1M0 434h1M759 434h1M0 435h1M759 435h1M0 436h1M759 436h1M0 437h1M759 437h1M0 438h1M759 438h1M0 439h1M759 439h1M0 440h1M759 440h1M0 441h1M759 441h1M0 442h1M759 442h1M0 443h1M759 443h1M0 444h1M759 444h1M0 445h1M759 445h1M0 446h1M759 446h1M0 447h1M759 447h1M0 448h1M759 448h1M0 449h1M759 449h1M0 450h1M759 450h1M0 451h1M759 451h1M0 452h1M759 452h1M0 453h1M759 453h1M0 454h1M759 454h1M0 455h1M759 455h1M0 456h1M759 456h1M0 457h1M759 457h1M0 458h1M759 458h1M0 459h1M759 459h1M0 460h1M759 460h1M0 461h1M759 461h1M0 462h1M759 462h1M0 463h1M759 463h1M0 464h1M759 464h1M0 465h1M759 465h1M0 466h1M759 466h1M0 467h1M759 467h1M0 468h1M759 468h1M0 469h1M759 469h1M0 470h1M759 470h1M0 471h1M759 471h1M0 472h1M759 472h1M0 473h1M759 473h1M0 474h1M759 474h1M0 475h1M759 475h1M0 476h1M759 476h1M0 477h1M759 477h1M0 478h1M759 478h1M0 479h1M759 479h1M0 480h1M759 480h1M0 481h1M759 481h1M0 482h1M759 482h1M0 483h1M759 483h1M0 484h1M759 484h1M0 485h1M759 485h1M0 486h1M759 486h1M0 487h1M759 487h1M0 488h1M759 488h1M0 489h1M759 489h1M0 490h1M759 490h1M0 491h1M759 491h1M0 492h1M759 492h1M0 493h1M759 493h1M0 494h1M759 494h1M0 495h1M759 495h1M0 496h1M759 496h1M0 497h1M759 497h1M0 498h1M759 498h1M0 499h1M759 499h1M0 500h1M759 500h1M0 501h1M759 501h1M0 502h1M759 502h1M0 503h1M759 503h1M0 504h1M759 504h1M0 505h1M759 505h1M0 506h1M759 506h1M0 507h1M759 507h1M0 508h1M759 508h1M0 509h1M759 509h1M0 510h1M759 510h1M0 511h1M759 511h1M0 512h1M759 512h1M0 513h1M759 513h1M0 514h1M759 514h1M0 515h1M759 515h1M0 516h1M759 516h1M0 517h1M759 517h1M0 518h1M759 518h1M0 519h1M759 519h1M0 520h1M759 520h1M0 521h1M759 521h1M0 522h1M759 522h1M0 523h1M759 523h1M0 524h1M759 524h1M0 525h1M759 525h1M0 526h1M759 526h1M0 527h1M759 527h1M0 528h1M759 528h1M0 529h1M759 529h1M0 530h1M759 530h1M0 531h1M759 531h1M0 532h1M759 532h1M0 533h1M759 533h1M0 534h1M759 534h1M0 535h1M759 535h1M0 536h1M759 536h1M0 537h1M759 537h1M0 538h1M759 538h1M0 539h1M759 539h1M0 540h1M759 540h1M0 541h1M759 541h1M0 542h1M759 542h1M0 543h1M759 543h1M0 544h1M759 544h1M0 545h1M759 545h1M0 546h1M759 546h1M0 547h1M759 547h1M0 548h1M759 548h1M0 549h1M759 549h1M0 550h1M759 550h1M0 551h1M759 551h1M0 552h1M759 552h1M0 553h1M759 553h1M0 554h1M759 554h1M0 555h1M759 555h1M0 556h1M759 556h1M0 557h1M759 557h1M0 558h1M759 558h1M0 559h1M759 559h1M0 560h1M759 560h1M0 561h1M759 561h1M0 562h1M759 562h1M0 563h1M759 563h1M0 564h1M759 564h1M0 565h1M759 565h1M0 566h1M759 566h1M0 567h1M759 567h1M0 568h1M759 568h1M0 569h1M759 569h1M0 570h1M759 570h1M0 571h1M759 571h1M0 572h1M759 572h1M0 573h1M759 573h1M0 574h1M759 574h1M0 575h1M759 575h1M0 576h1M759 576h1M0 577h1M759 577h1M0 578h1M759 578h1M0 579h1M759 579h1M0 580h1M759 580h1M0 581h1M759 581h1M0 582h1M759 582h1M0 583h1M759 583h1M0 584h1M759 584h1M0 585h1M759 585h1M0 586h1M759 586h1M0 587h1M759 587h1M0 588h1M759 588h1M0 589h1M759 589h1M0 590h1M759 590h1M0 591h1M759 591h1M0 592h1M759 592h1M0 593h1M759 593h1M0 594h1M759 594h1M0 595h1M759 595h1M0 596h1M759 596h1M0 597h1M759 597h1M0 598h1M759 598h1M0 599h760"/>
<path id="sbsign1" stroke="#ff0000" d="M750 106h3M751 107h2M750 108h1M752 108h1M745 109h1M749 109h1M746 110h1M748 110h1M747 111h1M746 112h1M748 112h1M745 113h1M749 113h1M744 114h1"/>
<path id="sbsign2" stroke="#ffff00" d="M745 116h1M748 116h1M750 116h2M744 117h2M748 117h2M752 117h1M745 118h1M747 118h1M749 118h1M752 118h1M745 119h1M747 119h1M750 119h2M745 120h1M747 120h1M751 120h1M746 121h1M752 121h1M746 122h1M752 122h1M746 123h1M752 123h1M751 124h1"/>
<path id="sbsign3" stroke="#00ff00" d="M746 126h1M749 126h1M752 126h1M745 127h2M748 127h2M751 127h1M745 128h1M747 128h2M750 128h2M744 129h1M747 129h1M750 129h1M746 131h1M749 131h1M752 131h1M745 132h2M748 132h2M751 132h1M745 133h1M747 133h2M750 133h2M744 134h1M747 134h1M750 134h1"/>
<path id="sbsign4" stroke="#0000ff" d="M744 136h1M752 136h1M745 137h1M751 137h1M746 138h1M750 138h1M746 139h1M750 139h1M744 140h9M746 141h1M750 141h1M746 142h1M750 142h1M745 143h1M751 143h1M744 144h1M752 144h1"/>
<path id="sbsign5" stroke="#ff0000" d="M745 146h2M750 146h2M744 147h1M747 147h1M749 147h1M752 147h1M744 148h1M747 148h1M749 148h1M752 148h1M745 149h1M747 149h1M749 149h1M751 149h1M748 150h1M748 151h1M748 152h1M748 153h1M748 154h1"/>
<path id="sbsign6" stroke="#ffff00" d="M745 156h1M751 156h1M746 157h1M750 157h1M747 158h3M746 159h1M750 159h1M745 160h1M751 160h1M745 161h1M751 161h1M745 162h1M751 162h1M746 163h1M750 163h1M747 164h3"/>
<path id="sbsign7" stroke="#00ff00" d="M745 166h1M752 166h1M746 167h6M747 168h1M750 168h1M747 169h1M750 169h1M747 170h1M750 170h1M747 171h1M750 171h1M747 172h1M750 172h1M746 173h6M745 174h1M752 174h1"/>
<path id="sbsign8" stroke="#0000ff" d="M747 177h3M745 178h2M750 178h2M744 179h1M749 179h1M752 179h1M745 180h2M749 180h1M752 180h1M744 181h1M747 181h1M750 181h2M744 182h1M747 182h1M752 182h1M745 183h2M750 183h2M747 184h3"/>
<path id="sbsign9" stroke="#ff0000" d="M747 186h3M746 187h1M750 187h1M745 188h1M751 188h1M745 189h1M751 189h1M745 190h1M751 190h1M746 191h1M750 191h1M744 192h1M746 192h1M750 192h1M745 193h1M751 193h1M752 194h1"/>
<path id="sbsign10" stroke="#ffff00" d="M744 196h1M746 196h1M748 196h1M745 197h1M747 197h1M749 197h1M751 197h1M745 198h1M747 198h1M749 198h3M745 199h1M747 199h1M749 199h1M751 199h1M745 200h1M747 200h1M749 200h1M751 200h1M745 201h1M747 201h1M749 201h1M751 201h1M745 202h1M747 202h1M749 202h1M751 202h1M745 203h1M747 203h1M750 203h1M749 204h1M751 204h1"/>
<path id="sbsign11" stroke="#00ff00" d="M747 208h3M746 209h1M750 209h1M746 210h1M750 210h1M744 211h4M749 211h4M744 213h9"/>
<path id="sbsign12" stroke="#0000ff" d="M744 216h1M746 216h1M748 216h1M745 217h1M747 217h1M749 217h1M745 218h1M747 218h1M749 218h1M745 219h1M747 219h1M749 219h1M745 220h1M747 220h1M749 220h1M745 221h1M747 221h1M749 221h1M745 222h1M747 222h1M749 222h1M752 222h1M745 223h1M747 223h1M749 223h1M752 223h1M750 224h2"/>
<path id="sbobj_Sun" stroke="#ff0000" d="M747 236h3M745 237h2M750 237h2M745 238h1M751 238h1M744 239h1M752 239h1M744 240h1M748 240h1M752 240h1M744 241h1M752 241h1M745 242h1M751 242h1M745 243h2M750 243h2M747 244h3"/>
<path id="sbobj_Moon" stroke="#0000ff" d="M746 246h3M745 247h1M749 247h2M746 248h1M750 248h1M747 249h1M751 249h1M747 250h1M751 250h1M747 251h1M751 251h1M746 252h1M750 252h1M745 253h1M749 253h2M746 254h3"/>
<path id="sbobj_Merc" stroke="#00ff00" d="M746 256h1M750 256h1M747 257h3M746 258h1M750 258h1M746 259h1M750 259h1M746 260h1M750 260h1M747 261h3M748 262h1M746 263h5M748 264h1"/>
<path id="sbobj_Venu" stroke="#00ff00" d="M747 266h3M746 267h1M750 267h1M746 268h1M750 268h1M746 269h1M750 269h1M747 270h3M748 271h1M746 272h5M748 273h1M748 274h1"/>
<path id="sbobj_Mars" stroke="#ff0000" d="M750 276h3M751 277h2M750 278h1M752 278h1M746 279h2M749 279h1M745 280h1M748 280h1M744 281h1M749 281h1M744 282h1M749 282h1M745 283h1M748 283h1M746 284h2"/>
<path id="sbobj_Jupi" stroke="#ff0000" d="M751 286h1M745 287h2M750 287h1M747 288h1M750 288h1M747 289h1M750 289h1M746 290h1M750 290h1M746 291h1M750 291h1M745 292h1M750 292h1M745 293h8M750 294h1"/>
<path id="sbobj_Satu" stroke="#ffff00" d="M747 296h1M745 297h5M747 298h1M747 299h1M749 299h2M747 300h2M751 300h1M747 301h1M751 301h1M747 302h1M750 302h1M747 303h1M750 303h1M751 304h1"/>
<path id="sbobj_Uran" stroke="#00ff00" d="M745 306h1M751 306h1M746 307h1M750 307h1M746 308h1M748 308h1M750 308h1M746 309h5M746 310h1M748 310h1M750 310h1M745 311h1M748 311h1M751 311h1M747 312h3M747 313h1M749 313h1M748 314h1"/>
<path id="sbobj_Nept" stroke="#0000ff" d="M745 316h1M748 316h1M751 316h1M744 317h2M747 317h3M751 317h2M745 318h1M748 318h1M751 318h1M746 319h1M748 319h1M750 319h1M747 320h3M748 321h1M746 322h5M748 323h1M748 324h1"/>
<path id="sbobj_Plut" stroke="#0000ff" d="M745 326h1M748 326h1M751 326h1M745 327h1M747 327h1M749 327h1M751 327h1M745 328h1M748 328h1M751 328h1M746 329h1M750 329h1M747 330h3M748 331h1M746 332h5M748 333h1M748 334h1"/>
<path id="sbobj_Node" stroke="#007f7f" d="M747 336h3M746 337h1M750 337h1M745 338h1M751 338h1M745 339h1M751 339h1M745 340h1M751 340h1M746 341h1M750 341h1M745 342h2M750 342h2M744 343h1M746 343h1M750 343h1M752 343h1M745 344h1M751 344h1"/>
</g>
<g class="tx">
<text class="hn" transform="translate(97.25 358.5) scale(0.85 1)" fill="#ff0000">1</text>
<text class="hn" transform="translate(156.25 456.5) scale(0.85 1)" fill="#ffff00">2</text>
<text class="hn" transform="translate(264.25 510.5) scale(0.85 1)" fill="#00ff00">3</text>
<text class="hn" transform="translate(381.25 496.5) scale(0.85 1)" fill="#0000ff">4</text>
<text class="hn" transform="translate(465.25 430.5) scale(0.85 1)" fill="#ff0000">5</text>
<text class="hn" transform="translate(504.25 346.5) scale(0.85 1)" fill="#ffff00">6</text>
<text class="hn" transform="translate(501.25 248.5) scale(0.85 1)" fill="#00ff00">7</text>
<text class="hn" transform="translate(442.25 150.5) scale(0.85 1)" fill="#0000ff">8</text>
<text class="hn" transform="translate(334.25 96.5) scale(0.85 1)" fill="#ff0000">9</text>
<text class="hn" transform="translate(218.3 110.5) scale(0.85 1)" fill="#ffff00" letter-spacing="1.9">1<tspan class="z" dx="0.3">0</tspan></text>
<text class="hn" transform="translate(134.3 176.5) scale(0.85 1)" fill="#00ff00" letter-spacing="1.9">11</text>
<text class="hn" transform="translate(95.3 260.5) scale(0.85 1)" fill="#0000ff" letter-spacing="1.9">12</text>
<text class="ob" x="276.5" y="130" fill="#ffff00" textLength="18" lengthAdjust="spacingAndGlyphs">MC</text>
<text class="ob" x="119.5" y="308" fill="#ff0000" textLength="18" lengthAdjust="spacingAndGlyphs">Asc</text>
<text class="sb" y="14"><tspan x="606" fill="#ffffff" stroke="#ffffff">Astrolog 5.40</tspan></text>
<text class="sb" y="24"><tspan x="606" fill="#bfbfbf" stroke="#bfbfbf">"Anonymous"</tspan></text>
<text class="sb" y="34"><tspan x="606" fill="#bfbfbf" stroke="#bfbfbf">Thu April 21, 2011</tspan></text>
<text class="sb" y="44"><tspan x="606" fill="#bfbfbf" stroke="#bfbfbf"> 9:00pm (ST +8:00 GMT)</tspan></text>
<text class="sb" y="54"><tspan x="606" fill="#bfbfbf" stroke="#bfbfbf">"Taiwan"</tspan></text>
<text class="sb" y="64"><tspan x="606" fill="#bfbfbf" stroke="#bfbfbf">121°00E 25°00N</tspan></text>
<text class="sb" y="74"><tspan x="606" fill="#bfbfbf" stroke="#bfbfbf">Placidus houses.</tspan></text>
<text class="sb" y="84"><tspan x="606" fill="#bfbfbf" stroke="#bfbfbf">Tropical, Geocentric.</tspan></text>
<text class="sb" y="94"><tspan x="606" fill="#bfbfbf" stroke="#bfbfbf">Julian Day = 2455673.0417</tspan></text>
<text class="sb" y="114"><tspan x="606" fill="#ff0000" stroke="#ff0000"> 1st house:  6Sag34</tspan></text>
<text class="sb" y="124"><tspan x="606" fill="#ffff00" stroke="#ffff00"> 2nd house:  6Cap56</tspan></text>
<text class="sb" y="134"><tspan x="606" fill="#00ff00" stroke="#00ff00"> 3rd house:  9Aqu57</tspan></text>
<text class="sb" y="144"><tspan x="606" fill="#0000ff" stroke="#0000ff"> 4th house: 14Pis00</tspan></text>
<text class="sb" y="154"><tspan x="606" fill="#ff0000" stroke="#ff0000"> 5th house: 15Ari32</tspan></text>
<text class="sb" y="164"><tspan x="606" fill="#ffff00" stroke="#ffff00"> 6th house: 12Tau42</tspan></text>
<text class="sb" y="174"><tspan x="606" fill="#00ff00" stroke="#00ff00"> 7th house:  6Gem34</tspan></text>
<text class="sb" y="184"><tspan x="606" fill="#0000ff" stroke="#0000ff"> 8th house:  6Can56</tspan></text>
<text class="sb" y="194"><tspan x="606" fill="#ff0000" stroke="#ff0000"> 9th house:  9Leo57</tspan></text>
<text class="sb" y="204"><tspan x="606" fill="#ffff00" stroke="#ffff00">10th house: 14Vir00</tspan></text>
<text class="sb" y="214"><tspan x="606" fill="#00ff00" stroke="#00ff00">11th house: 15Lib32</tspan></text>
<text class="sb" y="224"><tspan x="606" fill="#0000ff" stroke="#0000ff">12th house: 12Sco42</tspan></text>
<text class="sb" y="244"><tspan x="606" fill="#ff0000" stroke="#ff0000"> Sun:</tspan><tspan x="642" fill="#ffff00" stroke="#ffff00"> 1Tau05</tspan><tspan x="696" fill="#bfbfbf" stroke="#bfbfbf">- 0°00'</tspan></text>
<text class="sb" y="254"><tspan x="606" fill="#0000ff" stroke="#0000ff">Moon:</tspan><tspan x="642" fill="#ff0000" stroke="#ff0000">17Sag48</tspan><tspan x="696" fill="#bfbfbf" stroke="#bfbfbf">- 0°37'</tspan></text>
<text class="sb" y="264"><tspan x="606" fill="#00ff00" stroke="#00ff00">Merc:</tspan><tspan x="642" fill="#ff0000" stroke="#ff0000">13Ari02</tspan><tspan x="684" fill="#ffffff" stroke="#ffffff">R</tspan><tspan x="696" fill="#bfbfbf" stroke="#bfbfbf">- 0°40'</tspan></text>
<text class="sb" y="274"><tspan x="606" fill="#00ff00" stroke="#00ff00">Venu:</tspan><tspan x="642" fill="#ff0000" stroke="#ff0000"> 0Ari27</tspan><tspan x="696" fill="#bfbfbf" stroke="#bfbfbf">- 1°32'</tspan></text>
<text class="sb" y="284"><tspan x="606" fill="#ff0000" stroke="#ff0000">Mars:</tspan><tspan x="642" fill="#ff0000" stroke="#ff0000">14Ari58</tspan><tspan x="696" fill="#bfbfbf" stroke="#bfbfbf">- 0°48'</tspan></text>
<text class="sb" y="294"><tspan x="606" fill="#ff0000" stroke="#ff0000">Jupi:</tspan><tspan x="642" fill="#ff0000" stroke="#ff0000">20Ari00</tspan><tspan x="696" fill="#bfbfbf" stroke="#bfbfbf">- 1°05'</tspan></text>
<text class="sb" y="304"><tspan x="606" fill="#ffff00" stroke="#ffff00">Satu:</tspan><tspan x="642" fill="#00ff00" stroke="#00ff00">12Lib27</tspan><tspan x="684" fill="#ffffff" stroke="#ffffff">R</tspan><tspan x="696" fill="#bfbfbf" stroke="#bfbfbf">+ 2°44'</tspan></text>
<text class="sb" y="314"><tspan x="606" fill="#00ff00" stroke="#00ff00">Uran:</tspan><tspan x="642" fill="#ff0000" stroke="#ff0000"> 2Ari16</tspan><tspan x="696" fill="#bfbfbf" stroke="#bfbfbf">- 0°42'</tspan></text>
<text class="sb" y="324"><tspan x="606" fill="#0000ff" stroke="#0000ff">Nept:</tspan><tspan x="642" fill="#0000ff" stroke="#0000ff"> 0Pis26</tspan><tspan x="696" fill="#bfbfbf" stroke="#bfbfbf">- 0°30'</tspan></text>
<text class="sb" y="334"><tspan x="606" fill="#0000ff" stroke="#0000ff">Plut:</tspan><tspan x="642" fill="#ffff00" stroke="#ffff00"> 7Cap27</tspan><tspan x="684" fill="#ffffff" stroke="#ffffff">R</tspan><tspan x="696" fill="#bfbfbf" stroke="#bfbfbf">+ 4°31'</tspan></text>
<text class="sb" y="344"><tspan x="606" fill="#007f7f" stroke="#007f7f">Node:</tspan><tspan x="642" fill="#ff0000" stroke="#ff0000">26Sag27</tspan><tspan x="684" fill="#ffffff" stroke="#ffffff">R</tspan><tspan x="696" fill="#bfbfbf" stroke="#bfbfbf">+ 0°00'</tspan></text>
<text class="sb" y="364"><tspan x="606" fill="#bfbfbf" stroke="#bfbfbf">Fire: 8, Earth: 3,</tspan></text>
<text class="sb" y="374"><tspan x="606" fill="#bfbfbf" stroke="#bfbfbf">Air : 1, Water: 1</tspan></text>
<text class="sb" y="384"><tspan x="606" fill="#bfbfbf" stroke="#bfbfbf">Car: 7, Fix: 1, Mut: 5</tspan></text>
<text class="sb" y="394"><tspan x="606" fill="#bfbfbf" stroke="#bfbfbf">Yang: 9, Yin: 4</tspan></text>
<text class="sb" y="404"><tspan x="606" fill="#bfbfbf" stroke="#bfbfbf">M: 1, N: 10, A: 5, D: 6</tspan></text>
<text class="sb" y="414"><tspan x="606" fill="#bfbfbf" stroke="#bfbfbf">Ang: 7, Suc: 3, Cad: 1</tspan></text>
<text class="sb" y="424"><tspan x="606" fill="#bfbfbf" stroke="#bfbfbf">Learn: 7, Share: 6</tspan></text>
</g>
</svg>
</body></html>
